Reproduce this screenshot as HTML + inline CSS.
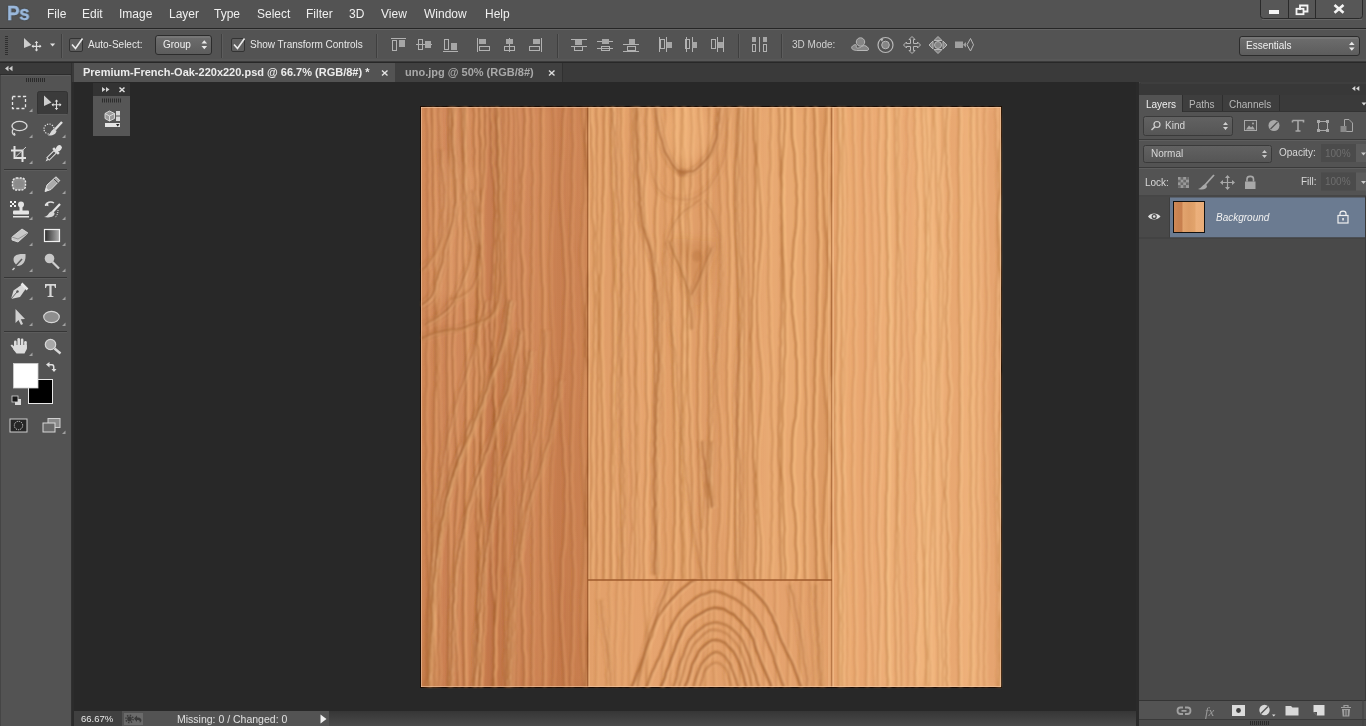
<!DOCTYPE html>
<html><head><meta charset="utf-8">
<style>
*{margin:0;padding:0;box-sizing:border-box}
html,body{width:1366px;height:726px;overflow:hidden;background:#282828;font-family:"Liberation Sans",sans-serif;color:#e6e6e6;-webkit-font-smoothing:antialiased}
.a{will-change:transform}
.a{position:absolute}
#menubar{left:0;top:0;width:1366px;height:28px;background:#535353}
#menubar .m{position:absolute;top:7px;font-size:12px;color:#f0f0f0;line-height:14px}
#optbar{left:0;top:29px;width:1366px;height:33px;background:#535353}
.line{position:absolute;background:#2e2e2e}
#tabbar{left:72px;top:63px;width:1294px;height:19px;background:#3a3a3a}
#toolbar{left:0;top:63px;width:72px;height:663px;background:#535353}
#rpanel{left:1139px;top:82px;width:227px;height:644px;background:#4a4a4a}
.t10{font-size:10px;line-height:12px;position:absolute;color:#e8e8e8}
.t11{font-size:11px;line-height:13px;position:absolute;color:#e8e8e8}
</style></head>
<body>
<!-- MENU BAR -->
<div id="menubar" class="a">
  <div class="a" style="left:7px;top:1px;font-size:21px;font-weight:bold;color:#9ab8dc;line-height:24px;letter-spacing:-0.5px;transform:scaleX(0.9);transform-origin:0 0;-webkit-text-stroke:0.3px #a4c0e2;text-shadow:0 0 1.5px #1a3048">Ps</div>
  <div class="m" style="left:47px">File</div>
  <div class="m" style="left:82px">Edit</div>
  <div class="m" style="left:119px">Image</div>
  <div class="m" style="left:169px">Layer</div>
  <div class="m" style="left:214px">Type</div>
  <div class="m" style="left:257px">Select</div>
  <div class="m" style="left:306px">Filter</div>
  <div class="m" style="left:349px">3D</div>
  <div class="m" style="left:381px">View</div>
  <div class="m" style="left:424px">Window</div>
  <div class="m" style="left:485px">Help</div>
</div>
<div class="line" style="left:0;top:28px;width:1366px;height:1px;background:#262626"></div>
<!-- OPTIONS BAR -->
<div id="optbar" class="a"></div>
<div class="a" style="left:0;top:29px;width:1366px;height:1px;background:#646464"></div><div class="a" style="left:0;top:59px;width:1366px;height:2px;background:#575757"></div>
<!-- options bar content -->
<svg class="a" style="left:0;top:0" width="1366" height="63" viewBox="0 0 1366 63">
 <!-- grip -->
 <g fill="#2f2f2f"><rect x="5" y="36" width="3" height="1"/><rect x="5" y="38" width="3" height="1"/><rect x="5" y="40" width="3" height="1"/><rect x="5" y="42" width="3" height="1"/><rect x="5" y="44" width="3" height="1"/><rect x="5" y="46" width="3" height="1"/><rect x="5" y="48" width="3" height="1"/><rect x="5" y="50" width="3" height="1"/><rect x="5" y="52" width="3" height="1"/><rect x="5" y="54" width="3" height="1"/></g>
 <!-- move tool -->
 <path d="M24 38 L31.5 45 L24 48 Z" fill="#cdcdcd"/>
 <g stroke="#dedede" stroke-width="1.2" fill="none"><path d="M36.5 41.5 V51 M32 46.3 H41"/></g>
 <g fill="#dedede"><path d="M36.5 41 l-1.8 2 h3.6z M36.5 51.5 l-1.8 -2 h3.6z M31.5 46.3 l2 -1.8 v3.6z M41.5 46.3 l-2 -1.8 v3.6z"/></g>
 <path d="M50 43.5 h5.2 l-2.6 3z" fill="#e0e0e0"/>
 <!-- separators -->
 <g fill="#3f3f3f"><rect x="61" y="34" width="1" height="24"/><rect x="221" y="34" width="1" height="24"/><rect x="376" y="34" width="1" height="24"/><rect x="557" y="34" width="1" height="24"/><rect x="738" y="34" width="1" height="24"/><rect x="781" y="34" width="1" height="24"/></g>
 <g fill="#5c5c5c"><rect x="62" y="34" width="1" height="24"/><rect x="222" y="34" width="1" height="24"/><rect x="377" y="34" width="1" height="24"/><rect x="558" y="34" width="1" height="24"/><rect x="739" y="34" width="1" height="24"/><rect x="782" y="34" width="1" height="24"/></g>
 <!-- checkboxes -->
 <rect x="69.5" y="38.5" width="13" height="13" rx="1.5" fill="#5e5e5e" stroke="#333" stroke-width="1"/>
 <path d="M72 44.5 L75.5 48.5 L82.5 38.5" stroke="#ececec" stroke-width="1.6" fill="none"/>
 <rect x="231.5" y="38.5" width="13" height="13" rx="1.5" fill="#5e5e5e" stroke="#333" stroke-width="1"/>
 <path d="M234 44.5 L237.5 48.5 L244.5 38.5" stroke="#ececec" stroke-width="1.6" fill="none"/>
 <!-- group dropdown -->
 <defs>
  <linearGradient id="dd" x1="0" y1="0" x2="0" y2="1"><stop offset="0" stop-color="#6e6e6e"/><stop offset="1" stop-color="#5c5c5c"/></linearGradient>
 </defs>
 <rect x="155.5" y="35.5" width="56" height="19" rx="2.5" fill="url(#dd)" stroke="#2c2c2c"/>
 <rect x="157" y="36.5" width="53" height="1" fill="#808080"/>
 <path d="M201.5 43.5 h5.6 l-2.8 -3.3z M201.5 46 h5.6 l-2.8 3.3z" fill="#e8e8e8"/>


 <!-- window buttons -->
 <path d="M1260.5 0 V15.5 Q1260.5 18.5 1263.5 18.5 H1359.5 Q1362.5 18.5 1362.5 15.5 V0" fill="#575757" stroke="#2a2a2a"/>
 <rect x="1262" y="19" width="100" height="1" fill="#666"/>
 <rect x="1288" y="0" width="1" height="18" fill="#2a2a2a"/>
 <rect x="1315" y="0" width="1" height="18" fill="#2a2a2a"/>
 <rect x="1269" y="10" width="10" height="4" fill="#f4f4f4"/>
 <path d="M1300 10 V5.5 H1307.5 V11.5 H1304" fill="none" stroke="#f4f4f4" stroke-width="1.8"/>
 <rect x="1296.5" y="8.8" width="7" height="5.4" fill="none" stroke="#f4f4f4" stroke-width="1.8"/>
 <path d="M1334.5 5 L1343.5 12.8 M1343.5 5 L1334.5 12.8" stroke="#f4f4f4" stroke-width="2.6"/>
 <!-- align icons -->
 <g stroke="#b2b2b2" stroke-width="1" fill="none">
  <path d="M391 38.5 H406"/><rect x="392.5" y="40.5" width="4" height="10"/>
  <path d="M416 44.5 H432"/><rect x="418.5" y="39.5" width="4" height="10"/>
  <path d="M443 51.5 H458"/><rect x="444.5" y="39.5" width="4" height="10"/>
  <path d="M477.5 38 V52"/><rect x="479.5" y="46.5" width="10" height="4"/>
  <path d="M509.5 38 V52"/><rect x="504.5" y="46.5" width="10" height="4"/>
  <path d="M541.5 38 V52"/><rect x="529.5" y="46.5" width="10" height="4"/>
  <path d="M571 39.5 H587 M571 46.5 H587"/><rect x="574.5" y="46.5" width="8" height="4"/>
  <path d="M597 41.5 H613 M597 48.5 H613"/><rect x="601.5" y="46.5" width="8" height="4"/>
  <path d="M623 44.5 H639 M623 51.5 H639"/><rect x="627.5" y="46.5" width="8" height="4"/>
  <path d="M659.5 37 V52 M666.5 37 V52"/><rect x="660.5" y="39.5" width="4" height="9"/>
  <path d="M686.5 37 V52 M692.5 37 V52"/><rect x="685.5" y="39.5" width="4" height="9"/>
  <path d="M717.5 37 V52 M723.5 37 V52"/><rect x="711.5" y="39.5" width="4" height="9"/>
  <rect x="752.5" y="44.5" width="3" height="7"/><rect x="763.5" y="44.5" width="3" height="7"/><path d="M759.5 37 V52"/>
 </g>
 <g fill="#a6a6a6">
  <rect x="399" y="40" width="6" height="7"/>
  <rect x="425" y="41" width="6" height="7"/>
  <rect x="451" y="43" width="6" height="7"/>
  <rect x="479" y="39" width="7" height="5"/>
  <rect x="506" y="39" width="7" height="5"/>
  <rect x="533" y="39" width="7" height="5"/>
  <rect x="575" y="40" width="7" height="5"/>
  <rect x="602" y="39" width="7" height="5"/>
  <rect x="629" y="39" width="6" height="5"/>
  <rect x="667" y="42" width="5" height="6"/>
  <rect x="692" y="42" width="5" height="6"/>
  <rect x="718" y="42" width="5" height="6"/>
  <rect x="752" y="37" width="4" height="5"/><rect x="763" y="37" width="4" height="5"/>
 </g>
 <!-- 3D icons -->
 <g stroke="#b8b8b8" stroke-width="1" fill="#858585">
  <path d="M855.5 44.5 C850 46 850 50.5 858 50.5 H867 C869 50.5 869.5 48 866 46 C864 45 862 46 860 47.5 C858 48.5 855 48 856.5 46z"/>
  <circle cx="860.5" cy="42" r="4.2"/>
  <circle cx="885.5" cy="45" r="7.5" fill="none" stroke-width="1.2"/>
  <circle cx="885.5" cy="45" r="3.8"/>
  <path d="M912 36.5 L915 39.5 H913.5 V43.5 H917.5 V42 L920.5 45 L917.5 48 V46.5 H913.5 V50.5 H915 L912 53.5 L909 50.5 H910.5 V46.5 H906.5 V48 L903.5 45 L906.5 42 V43.5 H910.5 V39.5 H909z" fill="#555"/>
  <path d="M938 36.5 L942 40.5 H934z M938 53.5 L942 49.5 H934z M929 45 L933 41 V49z M947 45 L943 41 V49z" />
  <circle cx="938" cy="45" r="3.5"/>
  <rect x="955" y="41.5" width="8" height="6.5" stroke="none" fill="#a0a0a0"/>
  <path d="M963 44.8 L966 42 V47.5z" stroke="none" fill="#a0a0a0"/>
  <path d="M970.5 38.5 L967 44.8 L970.5 51 L973.5 44.8z" fill="none"/>
 </g>
 <path d="M880 39 l3.5 -0.5 l-1.5 3.3z" fill="#b8b8b8"/>
 <rect x="1239.5" y="36.5" width="120" height="19" rx="2.5" fill="url(#dd)" stroke="#2c2c2c"/>
 <rect x="1241" y="37.5" width="117" height="1" fill="#808080"/>
 <path d="M1349 45 h5.6 l-2.8 -3.3z M1349 47.5 h5.6 l-2.8 3.3z" fill="#e8e8e8"/>
</svg>
<div class="t10" style="left:88px;top:39px">Auto-Select:</div>
<div class="t10" style="left:163px;top:39px;color:#f0f0f0">Group</div>
<div class="t10" style="left:250px;top:39px">Show Transform Controls</div>
<div class="t10" style="left:792px;top:39px;color:#d0d0d0">3D Mode:</div>
<div class="t10" style="left:1246px;top:40px;color:#f0f0f0">Essentials</div>
<div class="line" style="left:0;top:61px;width:1366px;height:1px;background:#3a3a3a"></div><div class="line" style="left:0;top:62px;width:1366px;height:1px;background:#282828"></div>
<!-- TAB BAR -->
<div id="tabbar" class="a"></div>
<div class="a" style="left:74px;top:63px;width:321px;height:19px;background:#535353"></div>
<div class="a" style="left:395px;top:63px;width:168px;height:19px;background:#404040"></div>
<div class="a" style="left:562px;top:63px;width:1px;height:19px;background:#303030"></div>
<div class="t11" style="left:83px;top:66px;color:#ececec;font-weight:bold">Premium-French-Oak-220x220.psd @ 66.7% (RGB/8#) *</div>
<div class="t11" style="left:405px;top:66px;color:#a8a8a8;font-weight:bold">uno.jpg @ 50% (RGB/8#)</div>
<svg class="a" style="left:0;top:0" width="1366" height="100">
 <path d="M382 70.5 L387.5 75.5 M387.5 70.5 L382 75.5" stroke="#e4e4e4" stroke-width="1.4"/>
 <path d="M549 70.5 L554.5 75.5 M554.5 70.5 L549 75.5" stroke="#dcdcdc" stroke-width="1.4"/>
</svg>
<!-- TOOLBAR -->
<div id="toolbar" class="a"></div>
<svg class="a" style="left:0;top:63px" width="74" height="663" viewBox="0 63 74 663">
 <rect x="0" y="63" width="72" height="12" fill="#3a3a3a"/>
 <rect x="0" y="74" width="72" height="1" fill="#2c2c2c"/>
 <rect x="0" y="75" width="70" height="1" fill="#5e5e5e"/>
 <rect x="71" y="63" width="1" height="663" fill="#303030"/><rect x="72" y="82" width="2" height="644" fill="#2b2b2b"/>
 <rect x="0" y="75" width="1" height="651" fill="#454545"/>
 <path d="M5 68.5 l3.5 -2.8 v5.6z M9 68.5 l3.5 -2.8 v5.6z" fill="#cfcfcf"/>
 <g fill="#2a2a2a"><rect x="26" y="78" width="1" height="4"/><rect x="28" y="78" width="1" height="4"/><rect x="30" y="78" width="1" height="4"/><rect x="32" y="78" width="1" height="4"/><rect x="34" y="78" width="1" height="4"/><rect x="36" y="78" width="1" height="4"/><rect x="38" y="78" width="1" height="4"/><rect x="40" y="78" width="1" height="4"/><rect x="42" y="78" width="1" height="4"/><rect x="44" y="78" width="1" height="4"/></g>
 <!-- separators -->
 <g fill="#363636"><rect x="4" y="169" width="63" height="1"/><rect x="4" y="277" width="63" height="1"/><rect x="4" y="331" width="63" height="1"/></g>
 <g fill="#5c5c5c"><rect x="4" y="170" width="63" height="1"/><rect x="4" y="278" width="63" height="1"/><rect x="4" y="332" width="63" height="1"/></g>
 <!-- selected move -->
 <rect x="37.5" y="91.5" width="30" height="23" rx="2" fill="#3b3b3b" stroke="#333"/>
 <rect x="38" y="114" width="29" height="1" fill="#5a5a5a"/>
 <path d="M44 95.5 L51.5 102.5 L44 106 Z" fill="#cdcdcd"/>
 <g stroke="#dedede" stroke-width="1.1"><path d="M56.5 100 V109.5 M52 104.7 H61"/></g>
 <g fill="#dedede"><path d="M56.5 99.5 l-1.8 2 h3.6z M56.5 110 l-1.8 -2 h3.6z M51.5 104.7 l2 -1.8 v3.6z M61.5 104.7 l-2 -1.8 v3.6z"/></g>
 <!-- corner triangles -->
 <g fill="#a0a0a0">
  <path d="M29 112 h3.5 v-3.5z"/>
  <path d="M29 138 h3.5 v-3.5z M62 138 h3.5 v-3.5z"/>
  <path d="M29 164 h3.5 v-3.5z M62 164 h3.5 v-3.5z"/>
  <path d="M29 194 h3.5 v-3.5z M62 194 h3.5 v-3.5z"/>
  <path d="M29 220 h3.5 v-3.5z M62 220 h3.5 v-3.5z"/>
  <path d="M29 246 h3.5 v-3.5z M62 246 h3.5 v-3.5z"/>
  <path d="M29 272 h3.5 v-3.5z M62 272 h3.5 v-3.5z"/>
  <path d="M29 300 h3.5 v-3.5z M62 300 h3.5 v-3.5z"/>
  <path d="M29 326 h3.5 v-3.5z M62 326 h3.5 v-3.5z"/>
  <path d="M29 356 h3.5 v-3.5z"/>
  <path d="M62 434 h3.5 v-3.5z"/>
 </g>
 <!-- marquee -->
 <rect x="12.5" y="96.5" width="13" height="12" fill="none" stroke="#e6e6e6" stroke-width="1.3" stroke-dasharray="3 2.2"/>
 <!-- lasso -->
 <ellipse cx="19.5" cy="126" rx="7.5" ry="4.6" fill="none" stroke="#d8d8d8" stroke-width="1.4"/>
 <path d="M13.5 129 C11.5 131 12 134 14 135 C15.5 136 15 133 13.5 133" fill="none" stroke="#d8d8d8" stroke-width="1.2"/>
 <!-- quick select -->
 <circle cx="49" cy="129" r="5" fill="none" stroke="#e0e0e0" stroke-width="1.2" stroke-dasharray="1.3 1.3"/>
 <path d="M62 122 L55 129.5" stroke="#e0e0e0" stroke-width="2.4"/>
 <path d="M54.5 129 C50.5 130 51 134 48 135.5 C53 136 56 134 56.5 131z" fill="#d8d8d8"/>
 <!-- crop -->
 <path d="M14.5 146 V158 H26 M11 150.5 H22.5 V162" fill="none" stroke="#e2e2e2" stroke-width="2"/>
 <path d="M16 156.5 L26 147" stroke="#d0d0d0" stroke-width="1"/>
 <!-- eyedropper -->
 <g transform="rotate(45 53 154)">
  <rect x="50.5" y="142.5" width="5" height="6.5" rx="2.5" fill="#e0e0e0"/>
  <rect x="49" y="148.5" width="8" height="2.5" fill="#e0e0e0"/>
  <rect x="51.3" y="151" width="3.4" height="10" fill="#505050" stroke="#e0e0e0" stroke-width="1"/>
  <path d="M52 161.5 L53 164.5 L54 161.5z" fill="#e0e0e0"/>
 </g>
 <!-- spot healing -->
 <rect x="12.5" y="178" width="13" height="12" rx="4" fill="#909090" stroke="#eaeaea" stroke-width="1.4" stroke-dasharray="2 1.2"/>
 <ellipse cx="19" cy="184" rx="4.5" ry="3.5" fill="#8a8a8a"/>
 <!-- pencil -->
 <path d="M45 191.5 L47 185 L56 176.8 L59.8 180.5 L51 189.5 Z" fill="#aaa" stroke="#e0e0e0" stroke-width="1"/>
 <path d="M45 191.5 L46.2 187.5 L49 190.5z" fill="#e0e0e0"/>
 <path d="M54 179 L57.8 182.6" stroke="#444" stroke-width="1"/>
 <!-- stamp -->
 <circle cx="21" cy="204.5" r="3" fill="#e4e4e4"/>
 <rect x="19.5" y="206" width="3" height="5" fill="#e4e4e4"/>
 <rect x="13" y="210.5" width="16" height="4" rx="1" fill="#e4e4e4"/>
 <rect x="13" y="216" width="16" height="1.5" fill="#e4e4e4"/>
 <g fill="#f0f0f0"><rect x="10" y="201" width="2" height="2"/><rect x="14" y="201" width="2" height="2"/><rect x="12" y="203" width="2" height="2"/><rect x="10" y="205" width="2" height="2"/><rect x="14" y="205" width="2" height="2"/></g>
 <!-- history brush -->
 <path d="M45.5 206 C46 202 51 201 54 203" fill="none" stroke="#e0e0e0" stroke-width="1.4"/>
 <path d="M44.5 205 l3.5 -2.5 l0.5 3.8z" fill="#e0e0e0"/>
 <path d="M60 204 L52.5 212" stroke="#e6e6e6" stroke-width="2.2"/>
 <path d="M52.5 211 C48 212 49 216 44 217 C51 218.5 55 216 54.5 213z" fill="#d8d8d8"/>
 <path d="M58 210 C58 213 57 216 55 217.5" fill="none" stroke="#e0e0e0" stroke-width="1" stroke-dasharray="1 1"/>
 <!-- eraser -->
 <path d="M12 237 L22 229 L28 233 L18 242 L12 240 Z" fill="#c8c8c8" stroke="#e4e4e4" stroke-width="0.8"/>
 <path d="M12 237 L18 239 L28 233" fill="none" stroke="#8a8a8a" stroke-width="0.8"/>
 <!-- gradient -->
 <defs><linearGradient id="gr" x1="0" y1="0" x2="1" y2="0"><stop offset="0" stop-color="#2a2a2a"/><stop offset="1" stop-color="#b0b0b0"/></linearGradient></defs>
 <rect x="44.5" y="229.5" width="15" height="12" fill="url(#gr)" stroke="#f0f0f0" stroke-width="1.2"/>
 <!-- blur -->
 <path d="M14 262 C12 256 16 253.5 25.5 254 C26 260 24 266 17 266 Z" fill="#c8c8c8"/>
 <path d="M12 270 L22 259" stroke="#5a5a5a" stroke-width="1.5"/>
 <path d="M12.5 270 L14.5 268" stroke="#d0d0d0" stroke-width="1.5"/>
 <!-- dodge -->
 <circle cx="49.5" cy="258.5" r="4.8" fill="#c8c8c8"/>
 <path d="M52.5 262 L59 268.5" stroke="#d0d0d0" stroke-width="2.2"/>
 <!-- pen -->
 <path d="M11 299 L13.5 290.5 L22 284.5 L26 288.5 L20 297 Z" fill="#d8d8d8"/>
 <path d="M21.5 283.5 L27.5 289.5" stroke="#e8e8e8" stroke-width="2.5"/>
 <path d="M11 299 L17 292" stroke="#555" stroke-width="0.9"/>
 <circle cx="17.5" cy="291.5" r="1.2" fill="#555"/>
 <!-- T -->
 <path d="M45 284 H56 V288 H55 L54.2 285.8 H51.6 V295.8 L53.5 296.3 V297 H47.5 V296.3 L49.4 295.8 V285.8 H46.8 L46 288 H45 Z" fill="#d8d8d8"/>
 <!-- path select -->
 <path d="M15.5 309 V323 L18.5 320 L21 325 L23 324 L20.8 319.2 L25 319 Z" fill="#d0d0d0"/>
 <!-- ellipse -->
 <ellipse cx="51.5" cy="317" rx="7.8" ry="5.6" fill="#8e8e8e" stroke="#d8d8d8" stroke-width="1.1"/>
 <!-- hand -->
 <g fill="#dcdcdc">
  <rect x="14" y="340.5" width="2.6" height="8" rx="1.3"/>
  <rect x="17.4" y="338" width="2.6" height="9" rx="1.3"/>
  <rect x="20.8" y="338.5" width="2.6" height="9" rx="1.3"/>
  <rect x="24.2" y="341" width="2.6" height="8" rx="1.3"/>
  <path d="M14 345 H26.8 V349 L24.5 353.5 H16.5 L13 349z"/>
  <path d="M10.5 345.5 L12 344.5 L16.5 349 L15 351z"/>
 </g>
 <!-- zoom -->
 <circle cx="50.5" cy="344.5" r="5.2" fill="#a8a8a8" stroke="#d8d8d8" stroke-width="1.2"/>
 <path d="M54.5 348.5 L60.5 353.5" stroke="#d8d8d8" stroke-width="2.4"/>
 <!-- colors -->
 <path d="M46 364.5 L49.5 362 L49.5 364 L52 364 C54 364 54.5 365.5 54.5 367.5 L54.5 369 L56.5 369 L54 372 L51.5 369 L53 369 L53 367.5 C53 366 52.5 365.5 51.5 365.5 L49.5 365.5 L49.5 367.5 Z" fill="#e0e0e0"/>
 <rect x="28.5" y="379.5" width="24" height="24" fill="#000" stroke="#e8e8e8" stroke-width="1"/>
 <rect x="13.5" y="363.5" width="24.5" height="24.5" fill="#fff" stroke="#d0d0d0" stroke-width="0.8"/>
 <rect x="15" y="399" width="6" height="6" fill="#d8d8d8"/>
 <rect x="12" y="396" width="6" height="6" fill="#1a1a1a" stroke="#d8d8d8" stroke-width="0.8"/>
 <!-- quick mask -->
 <rect x="10" y="419" width="17" height="13" fill="#262626" stroke="#d0d0d0" stroke-width="1"/>
 <circle cx="18.5" cy="425.5" r="4.2" fill="none" stroke="#e8e8e8" stroke-width="1" stroke-dasharray="1 1"/>
 <!-- screen mode -->
 <rect x="48" y="418.5" width="12" height="9" fill="#8a8a8a" stroke="#d0d0d0" stroke-width="1"/>
 <rect x="43" y="423" width="12" height="9" fill="#6a6a6a" stroke="#d8d8d8" stroke-width="1"/>
</svg>
<!-- RIGHT PANEL -->
<div id="rpanel" class="a"></div>
<svg class="a" style="left:1136px;top:82px" width="230" height="644" viewBox="1136 82 230 644">
 <defs>
  <linearGradient id="dd2" x1="0" y1="0" x2="0" y2="1"><stop offset="0" stop-color="#626262"/><stop offset="1" stop-color="#555555"/></linearGradient>
  <linearGradient id="wd" x1="0" y1="0" x2="1" y2="0"><stop offset="0" stop-color="#d08a58"/><stop offset="0.15" stop-color="#c98250"/><stop offset="0.28" stop-color="#c77f4e"/><stop offset="0.3" stop-color="#e2a46e"/><stop offset="0.5" stop-color="#dc9c66"/><stop offset="0.7" stop-color="#e2a46c"/><stop offset="0.72" stop-color="#ecb07c"/><stop offset="1" stop-color="#e8ac78"/></linearGradient>
 </defs>
 <rect x="1136" y="82" width="3" height="644" fill="#2a2a2a"/>
 <path d="M1139 726 V85 Q1139 82 1142 82 H1366 V726z" fill="#383838"/>
 <rect x="1141" y="82.5" width="225" height="1" fill="#454545"/>
 <path d="M1352 88.5 l3.3 -2.6 v5.2z M1356 88.5 l3.3 -2.6 v5.2z" fill="#d8d8d8"/>
 <rect x="1139" y="95" width="227" height="17" fill="#3a3a3a"/>
 <rect x="1139" y="95" width="43" height="17" fill="#535353"/>
 <rect x="1182" y="95" width="1" height="17" fill="#2e2e2e"/>
 <rect x="1183" y="95" width="39" height="17" fill="#3e3e3e"/>
 <rect x="1222" y="95" width="1" height="17" fill="#2e2e2e"/>
 <rect x="1223" y="95" width="56" height="17" fill="#3e3e3e"/>
 <rect x="1279" y="95" width="1" height="17" fill="#2e2e2e"/>
 <path d="M1361.5 102.5 h5 l-2.5 3z" fill="#d8d8d8"/>
 <rect x="1139" y="112" width="227" height="88" fill="#535353"/>
 <rect x="1183" y="111" width="183" height="1" fill="#333"/>
 <!-- separators -->
 <g fill="#3a3a3a"><rect x="1139" y="139" width="227" height="1"/><rect x="1139" y="167" width="227" height="1"/><rect x="1139" y="195.5" width="227" height="1"/></g>
 <g fill="#5e5e5e"><rect x="1139" y="140" width="227" height="1"/><rect x="1139" y="168" width="227" height="1"/></g>
 <!-- kind dropdown -->
 <rect x="1143.5" y="116.5" width="89" height="19" rx="2" fill="url(#dd2)" stroke="#3a3a3a"/>
 <circle cx="1157" cy="124.5" r="3" fill="none" stroke="#cfcfcf" stroke-width="1.2"/>
 <path d="M1154.8 126.8 L1151.5 130" stroke="#cfcfcf" stroke-width="1.5"/>
 <path d="M1223 125 h5 l-2.5 -3z M1223 127 h5 l-2.5 3z" fill="#d0d0d0"/>
 <!-- filter icons -->
 <rect x="1244.5" y="120.5" width="12" height="10" fill="none" stroke="#a8a8a8"/>
 <path d="M1246 129.5 L1249 125.5 L1251 127.5 L1252.5 126 L1255 129.5z" fill="#a8a8a8"/><circle cx="1253" cy="123.5" r="1" fill="#a8a8a8"/>
 <circle cx="1274" cy="125.5" r="5.5" fill="#a8a8a8"/>
 <path d="M1270.5 129 L1277.5 122" stroke="#535353" stroke-width="1.2"/>
 <path d="M1292.5 120.5 H1303.5 V122.5 M1292.5 120.5 V122.5 M1298 120.5 V131 M1295.5 131 H1300.5" stroke="#a8a8a8" stroke-width="1.6" fill="none"/>
 <rect x="1318.5" y="121.5" width="9" height="9" fill="none" stroke="#a8a8a8"/>
 <g fill="#a8a8a8"><rect x="1317" y="120" width="3" height="3"/><rect x="1326" y="120" width="3" height="3"/><rect x="1317" y="129" width="3" height="3"/><rect x="1326" y="129" width="3" height="3"/></g>
 <path d="M1344.5 119.5 H1349 L1352.5 123 V131.5 H1344.5z" fill="none" stroke="#a8a8a8"/>
 <rect x="1340.5" y="126" width="6" height="6" fill="#8a8a8a"/>
 <!-- normal dropdown -->
 <rect x="1143.5" y="145.5" width="128" height="17" rx="2" fill="url(#dd2)" stroke="#3a3a3a"/>
 <path d="M1262 153 h5 l-2.5 -3z M1262 155 h5 l-2.5 3z" fill="#c8c8c8"/>
 <!-- opacity field -->
 <rect x="1321" y="144" width="35" height="18" fill="#4b4b4b"/>
 <rect x="1356" y="144" width="10" height="18" fill="#5c5c5c"/>
 <path d="M1361 152.5 h5 l-2.5 3z" fill="#c8c8c8"/>
 <rect x="1321" y="172.5" width="35" height="18" fill="#4b4b4b"/>
 <rect x="1356" y="172.5" width="10" height="18" fill="#5c5c5c"/>
 <path d="M1361 181 h5 l-2.5 3z" fill="#c8c8c8"/>
 <!-- lock icons -->
 <g fill="#9a9a9a"><rect x="1178" y="177" width="11" height="11"/></g>
 <g fill="#6a6a6a"><rect x="1180.5" y="177" width="2.7" height="2.7"/><rect x="1186" y="177" width="2.7" height="2.7"/><rect x="1178" y="179.7" width="2.7" height="2.7"/><rect x="1183.3" y="179.7" width="2.7" height="2.7"/><rect x="1180.5" y="182.4" width="2.7" height="2.7"/><rect x="1186" y="182.4" width="2.7" height="2.7"/><rect x="1178" y="185.1" width="2.7" height="2.7"/><rect x="1183.3" y="185.1" width="2.7" height="2.7"/></g>
 <path d="M1214 175 L1205 185" stroke="#a8a8a8" stroke-width="1.8"/>
 <path d="M1205.5 184 C1202 185 1202 188 1198 189 C1203 190.5 1207 189 1207 186z" fill="#a8a8a8"/>
 <path d="M1227.5 176 V189 M1221 182.5 H1234" stroke="#a8a8a8" stroke-width="1.2"/>
 <path d="M1227.5 175 l-2.5 3 h5z M1227.5 190 l-2.5 -3 h5z M1220 182.5 l3 -2.5 v5z M1235 182.5 l-3 -2.5 v5z" fill="#a8a8a8"/>
 <rect x="1245" y="181.5" width="10.5" height="7.5" fill="#a8a8a8"/>
 <path d="M1247 181.5 V179 C1247 175.5 1253.5 175.5 1253.5 179 V181.5" fill="none" stroke="#a8a8a8" stroke-width="1.6"/>
 <!-- layer list -->
 <rect x="1139" y="196.5" width="227" height="504" fill="#494949"/>
 <rect x="1170" y="197.5" width="195" height="40" fill="#6b7b91"/>
 <rect x="1139" y="237.5" width="227" height="1" fill="#3e3e3e"/>
 <rect x="1169" y="197.5" width="1" height="40" fill="#3e3e3e"/>
 <rect x="1365" y="196" width="1" height="504" fill="#3a3a3a"/>
 <!-- eye -->
 <path d="M1148 216.5 C1150.5 212.5 1157.5 212.5 1160.5 216.5 C1157.5 220.5 1150.5 220.5 1148 216.5z" fill="#e0e0e0"/>
 <circle cx="1154.2" cy="216.5" r="2.6" fill="#494949"/>
 <circle cx="1154.2" cy="216.5" r="1.3" fill="#e0e0e0"/>
 <!-- thumbnail -->
 <rect x="1173.5" y="201.5" width="31" height="31" fill="url(#wd)" stroke="#111" stroke-width="1"/>
 <!-- lock -->
 <rect x="1338" y="215.5" width="10" height="7.5" fill="none" stroke="#f0f0f0" stroke-width="1.2"/>
 <path d="M1340 215.5 V213.5 C1340 210.3 1346 210.3 1346 213.5 V215.5" fill="none" stroke="#f0f0f0" stroke-width="1.2"/>
 <rect x="1342.3" y="218" width="1.5" height="2.5" fill="#f0f0f0"/>
 <!-- footer -->
 <rect x="1139" y="700" width="227" height="1" fill="#343434"/>
 <rect x="1139" y="701" width="227" height="18" fill="#535353"/>
 <rect x="1139" y="719" width="227" height="1" fill="#3a3a3a"/>
 <rect x="1139" y="720" width="227" height="6" fill="#4a4a4a"/>
 <g fill="#2a2a2a"><rect x="1250" y="721" width="1" height="4"/><rect x="1252" y="721" width="1" height="4"/><rect x="1254" y="721" width="1" height="4"/><rect x="1256" y="721" width="1" height="4"/><rect x="1258" y="721" width="1" height="4"/><rect x="1260" y="721" width="1" height="4"/><rect x="1262" y="721" width="1" height="4"/><rect x="1264" y="721" width="1" height="4"/><rect x="1266" y="721" width="1" height="4"/><rect x="1268" y="721" width="1" height="4"/></g>
 <rect x="1362.5" y="700" width="1" height="26" fill="#404040"/>
 <!-- footer icons -->
 <path d="M1183 707.5 H1180.5 C1176.5 707.5 1176.5 714 1180.5 714 H1183 M1185 707.5 H1187.5 C1191.5 707.5 1191.5 714 1187.5 714 H1185 M1181.5 710.8 H1186.5" fill="none" stroke="#a0a0a0" stroke-width="1.8"/>
 <text x="1205" y="716" font-family="Liberation Serif" font-style="italic" font-size="13" fill="#9a9a9a">fx</text>
 <rect x="1232" y="705" width="13" height="11" fill="#dcdcdc"/>
 <circle cx="1238.5" cy="710.5" r="2.4" fill="#404040"/>
 <circle cx="1264.5" cy="710" r="5.2" fill="#d8d8d8"/>
 <path d="M1261 713.5 L1268 706.5" stroke="#535353" stroke-width="1.4"/>
 <path d="M1272 714.5 h3.5 l-1.75 2z" fill="#e0e0e0"/>
 <path d="M1285.5 706 H1291 L1292.5 707.5 H1298.5 V715.5 H1285.5z" fill="#d8d8d8"/>
 <path d="M1313.5 705 H1324.5 V715.5 H1317 L1313.5 712z" fill="#dcdcdc"/>
 <path d="M1313.5 712 H1317 V715.5z" fill="#535353"/>
 <path d="M1341 707.5 H1351 M1344 707.5 V705.5 H1348 V707.5" fill="none" stroke="#a0a0a0" stroke-width="1.2"/>
 <path d="M1342 709 H1350 L1349.3 716.5 H1342.7z" fill="#a0a0a0"/>
 <path d="M1344.5 710 V715.5 M1346 710 V715.5 M1347.5 710 V715.5" stroke="#535353" stroke-width="0.8"/>
</svg>
<div class="t10" style="left:1146px;top:99px;color:#f0f0f0;font-size:10px">Layers</div>
<div class="t10" style="left:1189px;top:99px;color:#b8b8b8;font-size:10px">Paths</div>
<div class="t10" style="left:1229px;top:99px;color:#b8b8b8;font-size:10px">Channels</div>
<div class="t10" style="left:1165px;top:120px;color:#d8d8d8">Kind</div>
<div class="t10" style="left:1151px;top:148px;color:#d8d8d8">Normal</div>
<div class="t10" style="left:1279px;top:147px;color:#d8d8d8">Opacity:</div>
<div class="t10" style="left:1325px;top:148px;color:#6e6e6e">100%</div>
<div class="t10" style="left:1145px;top:177px;color:#d8d8d8">Lock:</div>
<div class="t10" style="left:1301px;top:176px;color:#d8d8d8">Fill:</div>
<div class="t10" style="left:1325px;top:176px;color:#6e6e6e">100%</div>
<div class="t10" style="left:1216px;top:212px;color:#f0f0f0;font-style:italic">Background</div>
<!-- floating mini panel -->
<svg class="a" style="left:90px;top:80px" width="45" height="60" viewBox="90 80 45 60">
 <rect x="93" y="83" width="37" height="13" fill="#333"/>
 <rect x="93" y="96" width="37" height="40" fill="#565656"/>
 <path d="M102 87 l3.5 2.5 l-3.5 2.5z M106 87 l3.5 2.5 l-3.5 2.5z" fill="#d0d0d0"/>
 <path d="M119.5 87.5 L124.5 92 M124.5 87.5 L119.5 92" stroke="#e0e0e0" stroke-width="1.5"/>
 <g fill="#2c2c2c"><rect x="102" y="98.5" width="1" height="4"/><rect x="104" y="98.5" width="1" height="4"/><rect x="106" y="98.5" width="1" height="4"/><rect x="108" y="98.5" width="1" height="4"/><rect x="110" y="98.5" width="1" height="4"/><rect x="112" y="98.5" width="1" height="4"/><rect x="114" y="98.5" width="1" height="4"/><rect x="116" y="98.5" width="1" height="4"/><rect x="118" y="98.5" width="1" height="4"/><rect x="120" y="98.5" width="1" height="4"/></g>
 <path d="M105 113.5 L109.5 111 L114.5 113.5 V118.5 L109.5 121 L105 118.5z" fill="#9a9a9a" stroke="#e0e0e0" stroke-width="0.9"/>
 <path d="M105 113.5 L109.5 116 L114.5 113.5 M109.5 116 V121" fill="none" stroke="#e0e0e0" stroke-width="0.9"/>
 <rect x="116" y="111" width="4" height="4.5" fill="#d8d8d8"/>
 <rect x="116" y="116.5" width="4" height="4.5" fill="#d8d8d8"/>
 <rect x="105" y="123" width="15" height="4" fill="#e4e4e4"/>
 <path d="M116 124 h3.5 l-1.75 2.5z" fill="#222"/>
</svg>
<!-- status bar -->
<div class="a" style="left:74px;top:711px;width:1062px;height:15px;background:linear-gradient(#363636,#4a4a4a)"></div>
<div class="a" style="left:74px;top:711px;width:48px;height:15px;background:#404040"></div>
<div class="a" style="left:122px;top:711px;width:207px;height:15px;background:#535353"></div>
<div class="t10" style="left:81px;top:713px;font-size:9.5px;color:#e8e8e8">66.67%</div>
<div class="t10" style="left:177px;top:713px;font-size:10.5px;color:#e0e0e0">Missing: 0 / Changed: 0</div>
<svg class="a" style="left:120px;top:711px" width="210" height="15" viewBox="120 711 210 15">
 <rect x="124" y="713" width="19" height="12" fill="#6a6a6a"/>
 <circle cx="129.5" cy="719" r="3.6" fill="none" stroke="#3a3a3a" stroke-width="1.6" stroke-dasharray="1.4 1.4"/>
 <circle cx="129.5" cy="719" r="2.4" fill="#3a3a3a"/>
 <path d="M134 718.5 L137 715.5 V717.5 H138 C140.5 717.5 141.5 719 141.5 721 L139.8 723 C140 721 139.5 720 138 720 H137 V722z" fill="#3a3a3a"/>
 <path d="M320.5 714.5 L326.5 719 L320.5 723.5z" fill="#f0f0f0"/>
</svg>
<!-- CANVAS IMAGE -->
<svg class="a" style="left:413px;top:99px" width="596" height="596" viewBox="413 99 596 596">
<defs>
<filter id="b2" x="-20%" y="-5%" width="140%" height="110%"><feGaussianBlur stdDeviation="5"/></filter>
<filter id="sh" x="-10%" y="-10%" width="120%" height="120%"><feGaussianBlur stdDeviation="2"/></filter>
<filter id="gb" x="-2%" y="-2%" width="104%" height="104%"><feGaussianBlur stdDeviation="0.85"/></filter>
<filter id="fb" x="-5%" y="-5%" width="110%" height="110%"><feGaussianBlur stdDeviation="1.2"/></filter>
<linearGradient id="gA" x1="0" y1="0" x2="1" y2="0"><stop offset="0.00" stop-color="#cd8455"/><stop offset="0.20" stop-color="#d1895d"/><stop offset="0.40" stop-color="#cc8255"/><stop offset="0.60" stop-color="#cd8459"/><stop offset="0.80" stop-color="#cb8254"/><stop offset="1.00" stop-color="#c98052"/></linearGradient>
<linearGradient id="gB" x1="0" y1="0" x2="1" y2="0"><stop offset="0.00" stop-color="#e2a06a"/><stop offset="0.25" stop-color="#e6a46f"/><stop offset="0.50" stop-color="#e2a06b"/><stop offset="0.75" stop-color="#e5a36f"/><stop offset="1.00" stop-color="#e19f69"/></linearGradient>
<linearGradient id="gC" x1="0" y1="0" x2="1" y2="0"><stop offset="0.00" stop-color="#e8a46e"/><stop offset="0.33" stop-color="#eaa873"/><stop offset="0.67" stop-color="#edad78"/><stop offset="1.00" stop-color="#e9a874"/></linearGradient>
<clipPath id="cA"><rect x="421" y="107" width="167" height="580"/></clipPath>
<clipPath id="cB"><rect x="588" y="107" width="244" height="473"/></clipPath>
<clipPath id="cB2"><rect x="588" y="580" width="244" height="107"/></clipPath>
<clipPath id="cC"><rect x="832" y="107" width="169" height="580"/></clipPath>
</defs>
<rect x="420" y="106" width="582" height="582" fill="#1c0c02"/>
<rect x="421" y="107" width="167" height="580" fill="url(#gA)"/>
<rect x="588" y="107" width="244" height="580" fill="url(#gB)"/>
<rect x="832" y="107" width="169" height="580" fill="url(#gC)"/>
<linearGradient id="vA" x1="0" y1="0" x2="0" y2="1"><stop offset="0" stop-color="#a05020" stop-opacity="0"/><stop offset="1" stop-color="#a04818" stop-opacity="0.18"/></linearGradient>
<rect x="421" y="107" width="167" height="580" fill="url(#vA)"/>
<g clip-path="url(#cA)"><g filter="url(#b2)">
<rect x="417" y="107" width="9" height="580" fill="#eaa870" opacity="0.33"/>
<rect x="431" y="107" width="10" height="580" fill="#eaa870" opacity="0.19"/>
<rect x="446" y="107" width="11" height="580" fill="#eaa870" opacity="0.17"/>
<rect x="460" y="107" width="6" height="580" fill="#eaa870" opacity="0.29"/>
<rect x="468" y="107" width="14" height="580" fill="#eaa870" opacity="0.28"/>
<rect x="488" y="107" width="6" height="580" fill="#a05a26" opacity="0.11"/>
<rect x="496" y="107" width="7" height="580" fill="#a05a26" opacity="0.06"/>
<rect x="508" y="107" width="9" height="580" fill="#eaa870" opacity="0.25"/>
<rect x="523" y="107" width="9" height="580" fill="#eaa870" opacity="0.24"/>
<rect x="536" y="107" width="14" height="580" fill="#eaa870" opacity="0.32"/>
<rect x="568" y="107" width="6" height="580" fill="#eaa870" opacity="0.23"/>
<rect x="580" y="107" width="8" height="580" fill="#eaa870" opacity="0.32"/>
</g></g>
<g clip-path="url(#cB)"><g filter="url(#b2)">
<rect x="584" y="107" width="7" height="580" fill="#f6c080" opacity="0.24"/>
<rect x="599" y="107" width="9" height="580" fill="#b87238" opacity="0.12"/>
<rect x="614" y="107" width="7" height="580" fill="#b87238" opacity="0.09"/>
<rect x="629" y="107" width="12" height="580" fill="#b87238" opacity="0.08"/>
<rect x="644" y="107" width="6" height="580" fill="#f6c080" opacity="0.19"/>
<rect x="655" y="107" width="9" height="580" fill="#b87238" opacity="0.13"/>
<rect x="666" y="107" width="11" height="580" fill="#b87238" opacity="0.10"/>
<rect x="680" y="107" width="7" height="580" fill="#f6c080" opacity="0.31"/>
<rect x="692" y="107" width="13" height="580" fill="#b87238" opacity="0.10"/>
<rect x="712" y="107" width="11" height="580" fill="#b87238" opacity="0.16"/>
<rect x="726" y="107" width="7" height="580" fill="#f6c080" opacity="0.22"/>
<rect x="737" y="107" width="6" height="580" fill="#b87238" opacity="0.12"/>
<rect x="746" y="107" width="10" height="580" fill="#b87238" opacity="0.11"/>
<rect x="764" y="107" width="9" height="580" fill="#f6c080" opacity="0.32"/>
<rect x="777" y="107" width="6" height="580" fill="#f6c080" opacity="0.31"/>
<rect x="787" y="107" width="7" height="580" fill="#f6c080" opacity="0.34"/>
<rect x="796" y="107" width="14" height="580" fill="#f6c080" opacity="0.27"/>
<rect x="815" y="107" width="6" height="580" fill="#b87238" opacity="0.16"/>
<rect x="824" y="107" width="11" height="580" fill="#b87238" opacity="0.14"/>
</g></g>
<g clip-path="url(#cC)"><g filter="url(#b2)">
<rect x="828" y="107" width="8" height="580" fill="#c07e44" opacity="0.13"/>
<rect x="838" y="107" width="7" height="580" fill="#f8c88a" opacity="0.32"/>
<rect x="851" y="107" width="8" height="580" fill="#f8c88a" opacity="0.19"/>
<rect x="860" y="107" width="7" height="580" fill="#c07e44" opacity="0.07"/>
<rect x="871" y="107" width="8" height="580" fill="#f8c88a" opacity="0.18"/>
<rect x="883" y="107" width="13" height="580" fill="#f8c88a" opacity="0.28"/>
<rect x="903" y="107" width="10" height="580" fill="#c07e44" opacity="0.06"/>
<rect x="915" y="107" width="13" height="580" fill="#f8c88a" opacity="0.34"/>
<rect x="930" y="107" width="11" height="580" fill="#f8c88a" opacity="0.30"/>
<rect x="945" y="107" width="14" height="580" fill="#c07e44" opacity="0.11"/>
<rect x="965" y="107" width="13" height="580" fill="#f8c88a" opacity="0.29"/>
<rect x="985" y="107" width="13" height="580" fill="#c07e44" opacity="0.13"/>
</g></g>
<g filter="url(#gb)" fill="none">
<g clip-path="url(#cA)">
<g stroke="#9e5a28" stroke-width="2.0" opacity="0.47"><path id="g1" d="M426.0 97l0.3 6l0.2 6l-0.6 6l0.6 6l0.9 6l0.3 6l0.0 6l-0.4 6l0.4 6l0.0 6l-0.1 6l0.6 6l-0.8 6l0.6 6l-0.7 6l0.5 6l0.1 6l-0.3 6l0.6 6l0.0 6l0.2 6l0.6 6l-0.7 6l-0.7 6l0.1 6l0.6 6l-0.4 6l-0.3 6l0.9 6l0.1 6l-0.3 6l0.4 6l-0.7 6l0.1 6l-0.7 6l-0.1 6l0.5 6l0.3 6l0.0 6l-0.8 6l-0.2 6l-0.5 6l-0.6 6l0.2 6l0.5 6l0.2 6l-0.1 6l0.2 6l-0.9 6l-0.6 6l0.1 6l-0.3 6l-0.2 6l0.2 6l0.4 6l-0.0 6l-0.3 6l0.7 6l0.6 6l-0.5 6l-0.8 6l-0.4 6l1.1 6l-0.6 6l0.7 6l0.2 6l-0.2 6l0.7 6l-0.7 6l-0.1 6l0.5 6l-0.3 6l1.1 6l-0.3 6l-0.2 6l-0.2 6l0.8 6l0.2 6l0.4 6l0.3 6l0.4 6l0.5 6l-0.1 6l-0.8 6l0.0 6l-0.4 6l-0.4 6l0.5 6l0.6 6l-0.5 6l-0.1 6l0.0 6l0.5 6l-0.0 6l0.1 6l0.2 6l-0.5 6l0.3 6l0.3 6l-1.1 6l0.6 6"/></g>
<use href="#g1" x="2" stroke="#f0b078" stroke-width="2.6" opacity="0.33"/>
<g stroke="#9e5a28" stroke-width="2.2" opacity="0.66"><path id="g2" d="M432.2 97l-0.4 8l0.3 8l0.2 8l-0.0 8l0.1 8l-0.4 8l0.5 8l0.4 8l0.3 8l-0.2 8l0.2 8l-0.2 8l0.6 8l0.3 8l-0.2 8l-0.3 8l0.3 8l0.4 8l0.5 8l0.1 8l-0.3 8l0.7 8l-0.3 8l0.6 8l-0.3 8l0.1 8l0.5 8l-0.4 8l-0.2 8l0.3 8l0.3 8l0.2 8l-0.1 8l0.2 8l-0.4 8l0.1 8l-0.9 8l-0.4 8l0.0 8l-0.3 8l0.2 8l-0.1 8l-0.3 8l0.1 8l-0.3 8l-0.5 8l-0.3 8l0.2 8l0.1 8l-0.7 8l0.2 8l0.2 8l-0.4 8l-0.2 8l-0.4 8l0.1 8l0.0 8l0.2 8l-0.4 8l0.8 8l-0.0 8l-0.0 8l0.5 8l0.1 8l0.1 8l0.3 8l-0.3 8l0.4 8l0.2 8l0.7 8l0.4 8l-0.3 8l0.1 8l-0.2 8l0.3 8l0.6 8"/></g>
<use href="#g2" x="2" stroke="#f0b078" stroke-width="2.8" opacity="0.46"/>
<g stroke="#9e5a28" stroke-width="1.5" opacity="0.46"><path id="g3" d="M439.9 97l-1.0 6l-0.3 6l-0.3 6l0.3 6l0.9 6l-0.3 6l0.3 6l0.2 6l0.2 6l0.6 6l-0.1 6l0.1 6l0.0 6l0.3 6l-1.2 6l0.3 6l0.4 6l-0.1 6l-0.2 6l0.4 6l-0.4 6l-0.7 6l-0.4 6l0.3 6l0.1 6l-0.7 6l0.8 6l-0.1 6l-0.5 6l-0.6 6l0.3 6l0.6 6l-0.8 6l0.4 6l-0.7 6l-0.5 6l0.9 6l-0.7 6l-0.4 6l0.2 6l0.2 6l0.9 6l-0.2 6l0.2 6l-0.7 6l0.3 6l0.5 6l-0.8 6l0.4 6l-0.1 6l0.7 6l-0.3 6l0.4 6l0.2 6l-0.3 6l0.9 6l0.2 6l0.1 6l-0.4 6l-0.8 6l0.7 6l0.2 6l0.6 6l-0.3 6l-0.6 6l-0.4 6l-0.1 6l-0.1 6l0.2 6l0.7 6l0.2 6l-0.6 6l0.5 6l-0.7 6l-0.3 6l0.2 6l0.1 6l-0.1 6l-0.3 6l0.1 6l0.4 6l-0.8 6l-0.2 6l0.2 6l-0.0 6l-0.1 6l0.8 6l-0.1 6l-0.9 6l0.6 6l-0.5 6l-0.6 6l0.8 6l0.4 6l0.3 6l0.2 6l-0.5 6l-0.8 6l0.2 6l-0.3 6l0.5 6"/></g>
<use href="#g3" x="2" stroke="#f0b078" stroke-width="2.0" opacity="0.32"/>
<g stroke="#9e5a28" stroke-width="2.2" opacity="0.64"><path id="g4" d="M448.9 97l0.2 8l0.1 8l-0.2 8l0.2 8l-0.4 8l0.0 8l0.1 8l-0.3 8l0.1 8l0.2 8l0.1 8l-0.3 8l0.4 8l-0.1 8l-0.3 8l0.0 8l-0.1 8l-0.1 8l-0.2 8l0.3 8l-0.2 8l-0.1 8l-0.0 8l0.1 8l-0.7 8l0.0 8l0.1 8l-0.3 8l-0.1 8l-0.3 8l-0.1 8l0.1 8l-0.2 8l0.0 8l0.5 8l-0.0 8l-0.0 8l0.3 8l-0.1 8l0.3 8l-0.1 8l0.1 8l-0.4 8l0.2 8l0.3 8l-0.3 8l0.5 8l-0.3 8l0.2 8l-0.1 8l0.2 8l0.2 8l-0.2 8l0.6 8l-0.1 8l0.1 8l0.1 8l-0.1 8l-0.1 8l0.2 8l0.0 8l-0.2 8l0.2 8l-0.2 8l-0.3 8l-0.0 8l-0.2 8l-0.0 8l0.4 8l-0.1 8l0.3 8l-0.0 8l-0.6 8l0.4 8l0.1 8l-0.6 8"/></g>
<use href="#g4" x="2" stroke="#f0b078" stroke-width="2.9" opacity="0.45"/>
<g stroke="#9e5a28" stroke-width="1.7" opacity="0.71"><path id="g5" d="M454.4 97l-1.0 8l-0.1 8l-0.9 8l-0.0 8l-0.3 8l0.8 8l-0.0 8l-0.0 8l0.5 8l0.3 8l0.7 8l0.9 8l0.7 8l0.7 8l0.2 8l0.6 8l0.5 8l-0.5 8l-0.1 8l-0.4 8l0.1 8l-0.2 8l-0.6 8l-0.3 8l-0.1 8l-1.0 8l-0.4 8l-0.3 8l-0.4 8l-0.9 8l-0.4 8l-0.3 8l0.7 8l-0.0 8l0.3 8l-0.1 8l0.7 8l0.6 8l-0.1 8l0.5 8l0.3 8l0.4 8l0.6 8l0.5 8l0.9 8l0.6 8l-0.6 8l-0.3 8l0.5 8l-0.5 8l-0.7 8l-0.6 8l-0.4 8l-0.9 8l0.1 8l-0.2 8l-0.7 8l-0.1 8l-0.1 8l-0.1 8l-0.4 8l0.3 8l-0.1 8l-0.1 8l0.2 8l1.2 8l0.6 8l0.2 8l0.9 8l0.8 8l-0.2 8l0.6 8l0.3 8l0.0 8l-0.2 8l0.0 8"/></g>
<use href="#g5" x="2" stroke="#f0b078" stroke-width="2.2" opacity="0.50"/>
<g stroke="#9e5a28" stroke-width="2.1" opacity="0.89"><path id="g6" d="M465.1 97l-0.5 8l-0.2 8l0.1 8l-0.1 8l-0.4 8l-0.3 8l-0.1 8l0.1 8l-0.2 8l-0.3 8l0.2 8l-0.0 8l0.2 8l0.1 8l0.0 8l-0.2 8l0.1 8l-0.2 8l-0.0 8l0.1 8l0.4 8l0.3 8l-0.2 8l0.1 8l0.1 8l0.2 8l0.2 8l0.2 8l0.1 8l0.3 8l0.4 8l0.1 8l0.3 8l0.0 8l-0.2 8l0.3 8l0.2 8l-0.2 8l-0.3 8l0.1 8l0.1 8l0.0 8l0.2 8l-0.1 8l-0.0 8l-0.5 8l-0.1 8l0.0 8l-0.5 8l-0.3 8l0.1 8l0.1 8l-0.5 8l-0.0 8l-0.4 8l0.1 8l-0.1 8l-0.3 8l-0.2 8l0.2 8l-0.1 8l0.1 8l-0.2 8l-0.1 8l0.3 8l0.0 8l-0.1 8l0.0 8l0.2 8l0.2 8l0.3 8l-0.1 8l0.3 8l0.1 8l0.3 8l0.2 8"/></g>
<use href="#g6" x="2" stroke="#f0b078" stroke-width="2.8" opacity="0.62"/>
<g stroke="#9e5a28" stroke-width="1.6" opacity="0.78"><path id="g7" d="M473.6 97l-0.4 6l0.6 6l0.7 6l-0.4 6l-0.4 6l-0.1 6l0.3 6l0.1 6l1.0 6l-0.6 6l0.1 6l-0.1 6l0.8 6l0.7 6l-0.3 6l-0.2 6l0.5 6l0.5 6l0.8 6l-0.7 6l-0.2 6l0.1 6l0.1 6l0.1 6l0.7 6l0.2 6l-0.4 6l-0.3 6l-0.1 6l-0.2 6l0.6 6l-0.4 6l0.0 6l0.3 6l-0.4 6l-0.6 6l0.4 6l0.1 6l-0.8 6l-0.2 6l0.3 6l-0.6 6l-0.7 6l-0.7 6l0.8 6l0.1 6l-0.5 6l-0.1 6l-0.1 6l-0.4 6l0.7 6l-0.1 6l-0.6 6l-0.5 6l0.4 6l0.1 6l0.7 6l0.3 6l0.1 6l-0.4 6l-0.1 6l0.3 6l0.2 6l1.0 6l0.1 6l0.3 6l0.7 6l-0.5 6l0.2 6l-0.3 6l0.7 6l-0.6 6l0.8 6l0.5 6l0.2 6l-0.8 6l-0.2 6l0.5 6l-0.6 6l0.2 6l0.0 6l0.6 6l-0.3 6l0.1 6l-0.7 6l0.2 6l-0.5 6l0.3 6l-1.0 6l0.3 6l-0.8 6l-0.0 6l-0.1 6l-0.7 6l0.5 6l-0.5 6l-0.3 6l-0.5 6l-0.0 6l0.2 6l0.4 6"/></g>
<use href="#g7" x="2" stroke="#f0b078" stroke-width="2.1" opacity="0.54"/>
<g stroke="#9e5a28" stroke-width="2.1" opacity="0.73"><path id="g8" d="M478.4 97l0.4 6l0.8 6l-0.3 6l0.5 6l0.1 6l-0.6 6l1.3 6l0.4 6l-0.7 6l0.3 6l-0.3 6l-0.0 6l0.2 6l-0.3 6l-0.1 6l-0.0 6l0.4 6l-0.5 6l-0.4 6l0.6 6l-0.4 6l0.7 6l-0.4 6l-0.0 6l-0.7 6l0.3 6l-1.1 6l-0.5 6l-0.4 6l0.7 6l0.3 6l-0.7 6l-0.0 6l0.6 6l-0.1 6l-0.8 6l-0.2 6l-0.2 6l-0.1 6l0.4 6l-0.3 6l1.3 6l-0.1 6l0.2 6l0.4 6l0.5 6l0.4 6l-0.4 6l-0.2 6l0.1 6l-0.5 6l0.4 6l0.8 6l0.9 6l0.2 6l-0.1 6l-0.1 6l-0.9 6l0.0 6l0.0 6l0.5 6l-0.6 6l0.1 6l0.2 6l0.5 6l0.2 6l-0.3 6l-0.9 6l0.4 6l0.3 6l-0.5 6l-0.6 6l-0.2 6l-0.7 6l0.5 6l0.6 6l-0.5 6l-0.0 6l0.1 6l-1.0 6l0.6 6l-0.2 6l-0.8 6l-0.6 6l-0.0 6l0.5 6l0.5 6l-0.3 6l0.8 6l-0.4 6l0.0 6l-0.4 6l1.2 6l-0.6 6l1.0 6l0.0 6l0.1 6l0.1 6l-0.3 6l0.9 6l0.7 6"/></g>
<use href="#g8" x="2" stroke="#f0b078" stroke-width="2.7" opacity="0.51"/>
<g stroke="#9e5a28" stroke-width="1.4" opacity="0.83"><path id="g9" d="M484.7 97l-0.3 6l0.5 6l0.6 6l-0.3 6l-0.3 6l0.3 6l0.3 6l0.1 6l-1.4 6l0.1 6l0.0 6l-0.1 6l-0.7 6l-0.5 6l-0.2 6l-1.2 6l-0.3 6l-0.8 6l0.2 6l-0.6 6l0.1 6l-0.1 6l-0.3 6l0.0 6l1.1 6l-0.7 6l0.9 6l0.5 6l0.5 6l-0.2 6l0.2 6l-0.3 6l0.4 6l1.2 6l0.8 6l0.0 6l-0.1 6l-0.1 6l0.9 6l-0.1 6l0.6 6l0.0 6l0.2 6l-1.0 6l-0.6 6l0.8 6l-0.6 6l-0.2 6l-0.4 6l-1.0 6l0.7 6l-0.8 6l-0.1 6l-0.5 6l-0.5 6l-0.5 6l0.3 6l0.2 6l0.0 6l-1.0 6l0.4 6l-0.7 6l0.6 6l0.5 6l-0.4 6l-0.6 6l1.0 6l0.1 6l0.4 6l0.8 6l0.5 6l0.6 6l0.1 6l0.4 6l-0.4 6l0.2 6l0.2 6l-0.4 6l0.6 6l0.0 6l-0.4 6l-0.3 6l0.5 6l-0.4 6l0.8 6l-0.2 6l-0.4 6l-0.6 6l0.2 6l-1.1 6l-0.5 6l-0.0 6l-0.2 6l-0.1 6l-0.8 6l0.3 6l-0.7 6l-0.3 6l0.0 6l-0.2 6l-0.1 6"/></g>
<use href="#g9" x="2" stroke="#f0b078" stroke-width="1.8" opacity="0.58"/>
<g stroke="#9e5a28" stroke-width="1.5" opacity="0.84"><path id="g10" d="M491.0 97l-0.7 6l-0.2 6l-0.5 6l0.8 6l0.7 6l-0.7 6l0.4 6l-0.3 6l1.1 6l-0.5 6l0.0 6l1.1 6l0.2 6l1.1 6l0.7 6l0.3 6l-0.6 6l0.6 6l0.7 6l-0.3 6l-0.7 6l-0.2 6l-0.1 6l0.4 6l-0.7 6l-0.5 6l-0.4 6l0.2 6l0.1 6l-0.8 6l-0.2 6l0.1 6l-0.6 6l-0.9 6l-0.5 6l0.6 6l-0.1 6l-0.6 6l0.3 6l-0.6 6l1.1 6l-0.1 6l0.2 6l0.3 6l-0.4 6l0.8 6l0.2 6l0.2 6l1.1 6l-0.3 6l0.3 6l1.0 6l-0.2 6l0.0 6l0.4 6l-0.3 6l0.8 6l0.5 6l-1.3 6l-0.2 6l0.2 6l-0.6 6l0.3 6l-0.7 6l-1.0 6l-0.2 6l-0.1 6l-0.6 6l-0.0 6l0.1 6l-0.4 6l-0.3 6l0.4 6l-0.0 6l-0.2 6l0.6 6l-0.7 6l0.7 6l-0.4 6l0.7 6l-0.0 6l0.5 6l0.9 6l0.7 6l0.5 6l-0.4 6l0.3 6l-0.1 6l0.5 6l0.2 6l-0.6 6l0.5 6l0.3 6l-0.2 6l0.2 6l-1.1 6l-0.8 6l-0.8 6l0.1 6l-0.2 6l-0.3 6"/></g>
<use href="#g10" x="2" stroke="#f0b078" stroke-width="1.9" opacity="0.59"/>
<g stroke="#9e5a28" stroke-width="1.5" opacity="0.88"><path id="g11" d="M494.2 97l0.4 6l0.7 6l0.6 6l0.3 6l0.4 6l0.3 6l-0.0 6l0.3 6l0.1 6l-0.0 6l-0.1 6l0.3 6l0.4 6l0.2 6l-0.0 6l-0.2 6l0.1 6l0.3 6l0.1 6l0.3 6l-0.9 6l0.2 6l-0.2 6l-0.7 6l0.2 6l-0.3 6l0.3 6l-1.1 6l-0.2 6l-0.1 6l-0.7 6l0.0 6l-0.2 6l0.3 6l0.1 6l-0.4 6l-0.3 6l0.1 6l-0.4 6l-0.6 6l-0.6 6l0.5 6l-0.2 6l-0.5 6l-0.1 6l0.1 6l0.8 6l0.5 6l-0.5 6l-0.2 6l0.5 6l0.8 6l0.2 6l0.1 6l0.6 6l0.4 6l0.4 6l-0.5 6l0.6 6l0.5 6l-0.4 6l0.1 6l-0.2 6l0.4 6l0.1 6l0.7 6l0.4 6l-0.1 6l-0.1 6l0.2 6l0.3 6l-0.2 6l-0.1 6l0.0 6l-0.6 6l-0.0 6l-0.0 6l-0.3 6l-0.7 6l-0.2 6l0.5 6l-0.2 6l-0.4 6l-0.1 6l-0.4 6l-0.3 6l-0.2 6l-0.7 6l-0.6 6l-0.5 6l0.5 6l0.2 6l-0.7 6l-0.3 6l0.5 6l-0.6 6l0.7 6l0.2 6l-0.3 6l0.4 6l-0.3 6"/></g>
<use href="#g11" x="2" stroke="#f0b078" stroke-width="1.9" opacity="0.62"/>
<g stroke="#9e5a28" stroke-width="1.9" opacity="0.53"><path id="g12" d="M504.7 97l-0.7 6l-0.1 6l0.0 6l0.1 6l-0.5 6l0.3 6l-0.4 6l0.3 6l0.0 6l-0.6 6l-0.3 6l-0.1 6l0.4 6l-0.2 6l-0.1 6l0.5 6l-0.5 6l-0.1 6l0.0 6l-0.1 6l-0.2 6l-0.1 6l0.7 6l0.3 6l0.5 6l0.5 6l-0.4 6l0.2 6l0.5 6l-0.5 6l0.3 6l0.2 6l0.5 6l0.2 6l-0.5 6l0.2 6l-0.4 6l0.2 6l0.1 6l-0.3 6l0.2 6l0.1 6l0.2 6l-0.1 6l-0.2 6l0.2 6l0.1 6l-0.3 6l0.4 6l-0.3 6l-0.4 6l0.0 6l0.1 6l-0.3 6l0.2 6l0.2 6l-0.1 6l0.0 6l-0.8 6l-0.1 6l-0.1 6l-0.4 6l0.1 6l-0.4 6l0.2 6l0.2 6l-0.1 6l-0.2 6l-0.2 6l-0.4 6l0.2 6l0.7 6l-0.0 6l-0.3 6l0.3 6l-0.3 6l0.2 6l0.3 6l0.6 6l-0.3 6l0.1 6l0.5 6l0.1 6l-0.0 6l0.0 6l-0.1 6l-0.0 6l-0.1 6l0.6 6l0.4 6l-0.3 6l0.5 6l-0.7 6l-0.2 6l0.3 6l-0.0 6l0.1 6l0.7 6l-0.5 6l-0.2 6l-0.1 6"/></g>
<use href="#g12" x="2" stroke="#f0b078" stroke-width="2.5" opacity="0.37"/>
<g stroke="#9e5a28" stroke-width="2.2" opacity="0.51"><path id="g13" d="M508.8 97l-0.4 8l0.4 8l0.2 8l-0.2 8l-0.1 8l-0.6 8l-0.6 8l-0.5 8l0.2 8l-0.5 8l-0.3 8l-0.5 8l-0.3 8l-0.3 8l-0.1 8l0.2 8l0.2 8l-0.3 8l-0.0 8l0.0 8l0.4 8l0.1 8l0.3 8l0.1 8l0.5 8l0.6 8l0.3 8l0.4 8l0.4 8l0.2 8l0.2 8l-0.3 8l0.3 8l-0.1 8l0.1 8l-0.5 8l0.1 8l-0.2 8l-0.2 8l-0.3 8l-0.3 8l0.0 8l-0.2 8l-0.6 8l-0.1 8l-0.4 8l-0.1 8l-0.5 8l0.2 8l-0.5 8l0.1 8l-0.3 8l0.6 8l0.1 8l-0.3 8l0.5 8l-0.0 8l0.1 8l0.2 8l0.6 8l0.2 8l0.5 8l0.7 8l0.0 8l0.3 8l0.3 8l0.3 8l-0.4 8l-0.2 8l-0.2 8l0.2 8l-0.3 8l-0.0 8l-0.6 8l-0.4 8l0.3 8"/></g>
<use href="#g13" x="2" stroke="#f0b078" stroke-width="2.8" opacity="0.35"/>
<g stroke="#9e5a28" stroke-width="1.3" opacity="0.57"><path id="g14" d="M513.9 97l-0.4 6l-0.2 6l0.3 6l0.6 6l0.1 6l-0.3 6l0.4 6l-0.1 6l-0.3 6l0.3 6l0.2 6l-0.4 6l-0.1 6l0.5 6l-0.2 6l0.2 6l-0.2 6l0.2 6l0.0 6l-0.5 6l-0.6 6l0.4 6l-0.5 6l-0.0 6l-0.4 6l-0.1 6l-0.2 6l-0.4 6l-0.2 6l0.2 6l0.0 6l-0.5 6l-0.4 6l0.5 6l0.1 6l-0.7 6l-0.0 6l-0.3 6l0.5 6l0.4 6l-0.4 6l-0.6 6l0.0 6l0.2 6l0.1 6l-0.3 6l0.3 6l0.4 6l-0.3 6l-0.2 6l0.1 6l0.0 6l0.6 6l0.2 6l0.5 6l-0.6 6l0.6 6l0.5 6l-0.1 6l0.2 6l-0.2 6l-0.3 6l0.5 6l-0.2 6l0.4 6l0.7 6l-0.4 6l0.1 6l0.5 6l-0.2 6l-0.1 6l0.7 6l-0.1 6l-0.2 6l0.1 6l0.2 6l0.2 6l0.1 6l0.2 6l-0.4 6l0.1 6l-0.4 6l0.2 6l-0.2 6l-0.8 6l-0.3 6l-0.0 6l0.3 6l-0.1 6l-0.4 6l0.5 6l-0.2 6l-0.4 6l-0.4 6l-0.5 6l0.3 6l0.0 6l-0.4 6l-0.3 6l-0.2 6l-0.3 6"/></g>
<use href="#g14" x="2" stroke="#f0b078" stroke-width="1.7" opacity="0.40"/>
<g stroke="#9e5a28" stroke-width="1.3" opacity="0.50"><path id="g15" d="M516.3 97l0.5 6l0.2 6l0.2 6l0.4 6l0.7 6l-0.3 6l0.6 6l-0.2 6l0.3 6l-0.4 6l0.6 6l-0.3 6l0.3 6l-0.6 6l-0.2 6l0.1 6l-0.6 6l-0.3 6l0.1 6l0.2 6l-0.6 6l-0.5 6l-0.2 6l0.5 6l-0.6 6l0.1 6l-0.2 6l0.2 6l-0.3 6l0.3 6l0.5 6l0.3 6l0.1 6l0.0 6l0.2 6l-0.2 6l0.7 6l0.3 6l0.0 6l0.3 6l-0.1 6l-0.0 6l-0.2 6l0.3 6l0.1 6l-0.1 6l-0.6 6l0.2 6l-0.2 6l-0.1 6l-0.2 6l0.1 6l-0.8 6l-0.2 6l0.3 6l-0.2 6l-0.5 6l0.1 6l0.3 6l-0.4 6l0.3 6l-0.5 6l0.7 6l-0.1 6l-0.2 6l0.6 6l0.2 6l0.5 6l0.3 6l0.2 6l-0.1 6l0.5 6l-0.6 6l0.5 6l0.1 6l-0.4 6l0.3 6l-0.2 6l-0.1 6l0.2 6l-0.7 6l-0.4 6l0.1 6l-0.6 6l0.0 6l0.1 6l-0.3 6l-0.5 6l0.2 6l0.1 6l-0.0 6l-0.2 6l0.2 6l0.1 6l-0.5 6l0.0 6l-0.2 6l-0.0 6l0.4 6l0.8 6l0.5 6"/></g>
<use href="#g15" x="2" stroke="#f0b078" stroke-width="1.7" opacity="0.35"/>
<g stroke="#9e5a28" stroke-width="2.2" opacity="0.68"><path id="g16" d="M525.1 97l-0.3 6l-0.6 6l0.6 6l0.2 6l-0.6 6l0.2 6l-0.9 6l0.1 6l-0.3 6l-0.0 6l0.0 6l-0.5 6l-1.0 6l-0.6 6l0.5 6l-0.7 6l0.2 6l-0.7 6l-0.0 6l-0.0 6l0.1 6l0.5 6l-0.2 6l-0.5 6l-0.1 6l0.2 6l1.0 6l0.8 6l0.4 6l-0.6 6l-0.4 6l0.2 6l0.4 6l0.7 6l-0.0 6l-0.1 6l0.0 6l0.1 6l0.8 6l0.3 6l0.4 6l-0.3 6l-0.1 6l1.2 6l0.7 6l-0.9 6l0.4 6l-0.4 6l0.2 6l-0.4 6l0.1 6l-0.3 6l0.4 6l-0.3 6l-0.3 6l0.1 6l0.1 6l-0.7 6l0.1 6l-1.0 6l0.3 6l-0.9 6l-0.0 6l0.2 6l0.4 6l-0.6 6l-0.6 6l-0.7 6l0.7 6l0.1 6l-1.0 6l0.3 6l-0.2 6l-0.5 6l0.6 6l-0.9 6l-0.4 6l0.7 6l0.5 6l0.8 6l0.2 6l0.3 6l-0.1 6l-0.7 6l-0.4 6l0.1 6l0.7 6l0.4 6l0.6 6l-0.5 6l0.1 6l-0.1 6l1.2 6l0.2 6l-0.1 6l0.5 6l-0.3 6l-0.2 6l1.4 6l0.2 6l0.4 6"/></g>
<use href="#g16" x="2" stroke="#f0b078" stroke-width="2.9" opacity="0.48"/>
<g stroke="#9e5a28" stroke-width="1.2" opacity="0.73"><path id="g17" d="M530.5 97l0.0 6l0.6 6l0.3 6l0.4 6l-0.3 6l0.5 6l0.2 6l0.2 6l-0.6 6l0.1 6l-0.4 6l0.8 6l0.5 6l0.2 6l-0.8 6l-0.1 6l0.2 6l0.1 6l-0.4 6l0.5 6l-0.3 6l0.0 6l-0.4 6l0.2 6l-0.4 6l-0.3 6l0.3 6l-0.2 6l0.4 6l-0.5 6l-0.1 6l-0.5 6l-0.2 6l0.1 6l0.1 6l-0.1 6l0.3 6l-0.7 6l0.4 6l-0.6 6l0.5 6l-0.3 6l-0.3 6l0.0 6l0.3 6l0.2 6l-0.5 6l-0.7 6l-0.2 6l0.6 6l0.2 6l0.1 6l-0.6 6l0.2 6l-0.4 6l-0.1 6l0.2 6l0.9 6l0.1 6l0.4 6l-0.7 6l0.1 6l-0.2 6l0.2 6l-0.0 6l1.0 6l-0.1 6l0.2 6l0.4 6l0.5 6l0.4 6l-0.2 6l-0.1 6l0.5 6l-0.3 6l-0.2 6l0.4 6l-0.3 6l0.0 6l0.1 6l0.1 6l-0.1 6l0.1 6l0.0 6l-0.4 6l0.6 6l-0.6 6l0.2 6l0.1 6l-0.2 6l-0.3 6l-0.3 6l0.1 6l-0.1 6l0.1 6l-0.3 6l0.4 6l-0.2 6l-0.7 6l0.0 6l0.6 6"/></g>
<use href="#g17" x="2" stroke="#f0b078" stroke-width="1.6" opacity="0.51"/>
<g stroke="#9e5a28" stroke-width="1.7" opacity="0.70"><path id="g18" d="M542.2 97l-0.7 8l-0.3 8l-0.3 8l0.4 8l-0.3 8l0.3 8l-0.5 8l0.1 8l0.2 8l0.3 8l-0.1 8l-0.3 8l-0.4 8l0.3 8l-0.2 8l0.3 8l0.0 8l0.1 8l-0.0 8l0.2 8l0.2 8l0.3 8l0.2 8l0.9 8l0.0 8l-0.0 8l-0.3 8l-0.0 8l0.2 8l0.5 8l0.1 8l0.1 8l-0.4 8l0.0 8l0.2 8l-0.3 8l-0.4 8l0.0 8l0.2 8l-0.1 8l-0.8 8l-0.6 8l0.2 8l-0.5 8l0.3 8l-0.0 8l0.1 8l-0.4 8l0.2 8l-0.1 8l0.1 8l0.2 8l-0.5 8l0.3 8l0.1 8l0.1 8l-0.2 8l0.3 8l0.2 8l-0.3 8l0.7 8l-0.3 8l0.2 8l-0.0 8l0.9 8l-0.3 8l0.0 8l0.2 8l0.6 8l0.4 8l-0.5 8l0.2 8l-0.1 8l-0.2 8l0.2 8l-0.2 8"/></g>
<use href="#g18" x="2" stroke="#f0b078" stroke-width="2.2" opacity="0.49"/>
<g stroke="#9e5a28" stroke-width="1.5" opacity="0.40"><path id="g19" d="M552.4 97l0.5 6l0.3 6l0.1 6l0.2 6l0.1 6l0.3 6l-0.2 6l0.2 6l-0.1 6l-0.3 6l0.0 6l0.0 6l-0.3 6l-0.2 6l-0.5 6l0.2 6l-0.2 6l-0.6 6l-0.5 6l-0.4 6l0.1 6l-0.6 6l-0.4 6l-0.1 6l-0.1 6l-0.2 6l-0.3 6l-0.1 6l0.2 6l0.2 6l0.0 6l-0.1 6l0.6 6l0.0 6l0.0 6l0.4 6l0.3 6l0.3 6l0.6 6l0.1 6l0.2 6l0.2 6l0.2 6l0.7 6l0.4 6l0.2 6l-0.1 6l-0.1 6l-0.0 6l-0.1 6l0.4 6l-0.2 6l-0.2 6l-0.4 6l0.1 6l-0.1 6l-0.3 6l-0.2 6l-0.2 6l-0.8 6l-0.4 6l-0.5 6l0.1 6l-0.2 6l-0.5 6l-0.1 6l-0.3 6l-0.3 6l-0.2 6l0.4 6l0.3 6l-0.3 6l0.1 6l0.4 6l0.1 6l-0.1 6l0.1 6l0.6 6l0.1 6l0.6 6l0.4 6l0.3 6l0.3 6l0.1 6l0.2 6l0.4 6l0.2 6l0.1 6l0.0 6l0.2 6l-0.1 6l-0.2 6l0.1 6l-0.3 6l0.0 6l0.0 6l-0.6 6l-0.2 6l-0.2 6l-0.1 6l-0.3 6"/></g>
<use href="#g19" x="2" stroke="#f0b078" stroke-width="2.0" opacity="0.28"/>
<g stroke="#9e5a28" stroke-width="1.5" opacity="0.66"><path id="g20" d="M564.2 97l0.0 8l-0.9 8l-0.8 8l-0.2 8l0.0 8l-0.5 8l-0.3 8l-0.4 8l-0.5 8l-0.7 8l0.1 8l-0.2 8l0.4 8l0.3 8l0.6 8l0.3 8l0.9 8l0.5 8l0.6 8l0.1 8l0.6 8l0.5 8l0.7 8l-0.1 8l-0.6 8l-0.3 8l-0.4 8l-0.1 8l-0.1 8l-0.3 8l-0.5 8l-0.5 8l-0.6 8l-0.4 8l-1.2 8l-0.2 8l0.1 8l0.2 8l0.2 8l0.3 8l0.8 8l-0.1 8l0.7 8l1.1 8l-0.1 8l0.3 8l1.0 8l0.7 8l-0.5 8l-0.3 8l0.5 8l-0.1 8l-0.4 8l-0.4 8l-0.3 8l-0.4 8l-1.3 8l-0.9 8l0.0 8l0.0 8l-0.2 8l-0.6 8l-0.3 8l-0.0 8l-0.2 8l0.9 8l0.2 8l0.7 8l0.6 8l0.4 8l0.8 8l0.4 8l0.2 8l0.8 8l-0.2 8l-0.2 8"/></g>
<use href="#g20" x="2" stroke="#f0b078" stroke-width="1.9" opacity="0.46"/>
<g stroke="#9e5a28" stroke-width="1.9" opacity="0.50"><path id="g21" d="M572.3 97l0.3 8l-0.4 8l0.2 8l-0.2 8l0.5 8l0.5 8l-0.5 8l-0.5 8l-0.1 8l-0.4 8l0.4 8l-0.1 8l-0.3 8l-0.8 8l0.1 8l-0.6 8l0.3 8l-0.6 8l-0.3 8l0.8 8l0.7 8l-0.3 8l0.3 8l-0.3 8l0.9 8l-0.4 8l0.8 8l0.1 8l0.6 8l-0.7 8l0.9 8l0.4 8l-0.9 8l-0.5 8l0.9 8l-0.3 8l-0.6 8l-0.5 8l-0.3 8l0.1 8l-0.4 8l-0.2 8l-0.4 8l-0.3 8l0.6 8l-0.3 8l-0.5 8l0.0 8l0.6 8l-0.2 8l0.8 8l0.6 8l0.1 8l-0.2 8l0.5 8l0.6 8l-0.6 8l0.7 8l0.6 8l-0.0 8l-0.1 8l-0.8 8l-0.2 8l0.1 8l-0.4 8l-0.0 8l0.2 8l-0.5 8l0.1 8l-0.8 8l-0.7 8l0.3 8l-0.7 8l0.8 8l0.5 8l0.2 8"/></g>
<use href="#g21" x="2" stroke="#f0b078" stroke-width="2.5" opacity="0.35"/>
<g stroke="#9e5a28" stroke-width="1.6" opacity="0.42"><path id="g22" d="M582.2 97l0.1 8l-0.2 8l0.3 8l0.7 8l0.8 8l0.3 8l0.3 8l0.1 8l-0.3 8l-0.6 8l-0.1 8l0.2 8l-0.0 8l-1.3 8l-0.5 8l0.2 8l-0.5 8l-0.9 8l-0.5 8l0.1 8l0.0 8l1.1 8l0.1 8l0.8 8l0.4 8l0.6 8l0.0 8l0.7 8l-0.2 8l-0.1 8l0.4 8l0.1 8l-0.3 8l-0.2 8l-0.7 8l0.1 8l-0.7 8l-0.4 8l-0.4 8l-0.1 8l-0.3 8l-0.4 8l-0.0 8l0.5 8l0.3 8l0.6 8l-0.1 8l0.5 8l0.3 8l0.7 8l0.1 8l0.5 8l0.2 8l-0.6 8l0.1 8l-0.5 8l0.2 8l-0.1 8l-0.5 8l-0.5 8l-0.5 8l-0.7 8l-0.4 8l0.2 8l-0.2 8l-0.5 8l0.2 8l0.6 8l-0.1 8l0.3 8l0.3 8l0.9 8l0.1 8l0.4 8l0.0 8l0.6 8"/></g>
<use href="#g22" x="2" stroke="#f0b078" stroke-width="2.1" opacity="0.30"/>
<g stroke="#9e5a28" stroke-width="1.7" opacity="0.78"><path id="g23" d="M587.5 97l-0.4 6l-0.5 6l0.1 6l-0.4 6l-0.5 6l-0.4 6l-0.2 6l0.5 6l0.3 6l0.4 6l0.3 6l0.1 6l0.3 6l0.3 6l0.4 6l0.4 6l-0.2 6l0.7 6l-0.0 6l0.0 6l0.7 6l-0.5 6l0.2 6l-0.1 6l0.3 6l-0.2 6l0.1 6l-0.1 6l-0.5 6l-1.0 6l-0.1 6l-0.8 6l0.3 6l-0.1 6l-0.7 6l-0.5 6l0.2 6l0.2 6l0.4 6l-0.1 6l-0.4 6l0.5 6l-0.2 6l0.9 6l0.5 6l0.5 6l0.5 6l0.1 6l0.6 6l0.1 6l-0.0 6l-0.1 6l-0.1 6l-0.4 6l-0.2 6l0.4 6l-0.5 6l-0.0 6l-0.1 6l-0.3 6l-0.5 6l-0.6 6l-0.5 6l-0.5 6l0.1 6l0.0 6l0.2 6l-0.5 6l0.4 6l0.3 6l-0.3 6l0.6 6l0.2 6l0.6 6l0.3 6l-0.1 6l0.1 6l0.4 6l0.3 6l-0.2 6l0.8 6l0.1 6l-0.0 6l0.2 6l-0.4 6l-0.4 6l0.0 6l-0.5 6l-0.3 6l-0.6 6l-0.5 6l-0.1 6l-0.1 6l0.2 6l-0.3 6l-0.4 6l-0.3 6l-0.3 6l0.1 6l0.6 6l-0.4 6"/></g>
<use href="#g23" x="2" stroke="#f0b078" stroke-width="2.2" opacity="0.54"/>
</g>
<g clip-path="url(#cB)">
<g stroke="#b06c34" stroke-width="1.4" opacity="0.72"><path id="g24" d="M590.4 97l-0.6 8l-0.1 8l0.2 8l1.4 8l0.2 8l-0.4 8l1.1 8l0.4 8l-0.0 8l0.6 8l-0.6 8l0.6 8l-0.7 8l-0.3 8l-0.0 8l1.4 8l0.8 8l-0.7 8l-0.2 8l0.9 8l-0.1 8l-0.8 8l0.3 8l0.4 8l0.5 8l0.4 8l-0.6 8l0.1 8l-0.8 8l0.4 8l-0.8 8l0.5 8l-0.5 8l-0.9 8l0.2 8l-0.5 8l0.1 8l-0.3 8l-0.3 8l0.3 8l0.0 8l-0.2 8l-0.8 8l-0.4 8l0.5 8l0.6 8l0.1 8l0.1 8l-0.4 8l-0.7 8l-0.8 8l0.8 8l0.3 8l-0.0 8l0.3 8l0.4 8l-0.7 8l-0.5 8l-0.1 8l0.3 8l0.2 8l0.9 8"/></g>
<use href="#g24" x="2" stroke="#fcc488" stroke-width="1.9" opacity="0.50"/>
<g stroke="#b06c34" stroke-width="2.0" opacity="0.57"><path id="g25" d="M596.5 97l0.5 6l-0.3 6l-0.2 6l0.5 6l0.4 6l-0.0 6l-0.5 6l0.1 6l0.1 6l-0.5 6l0.3 6l0.4 6l-0.1 6l-0.0 6l-0.3 6l0.2 6l-0.4 6l0.5 6l-0.0 6l0.6 6l-0.5 6l0.2 6l-0.7 6l0.2 6l0.5 6l-0.3 6l0.3 6l-0.3 6l0.1 6l0.8 6l-0.6 6l0.6 6l-0.7 6l0.3 6l0.4 6l0.2 6l-0.4 6l0.0 6l0.2 6l0.1 6l0.0 6l-0.2 6l-0.5 6l0.3 6l-0.0 6l-0.1 6l0.5 6l-0.8 6l0.4 6l-0.4 6l0.3 6l0.4 6l-0.7 6l0.0 6l-0.1 6l-0.1 6l-0.5 6l0.3 6l0.5 6l-0.1 6l-0.5 6l0.4 6l-0.3 6l-0.5 6l0.3 6l-0.0 6l0.1 6l0.6 6l-0.2 6l0.3 6l-0.6 6l0.2 6l-0.7 6l-0.1 6l0.4 6l0.2 6l0.3 6l-0.4 6l-0.3 6l-0.0 6l0.2 6l-0.5 6l0.2 6"/></g>
<use href="#g25" x="2" stroke="#fcc488" stroke-width="2.6" opacity="0.40"/>
<g stroke="#b06c34" stroke-width="2.2" opacity="0.72"><path id="g26" d="M605.5 97l-0.1 6l-0.6 6l-0.2 6l-0.3 6l-0.2 6l0.3 6l0.2 6l-0.3 6l-0.2 6l0.1 6l-0.3 6l-0.3 6l0.2 6l0.1 6l-0.1 6l-0.3 6l-0.8 6l0.3 6l-0.1 6l-0.6 6l-0.2 6l-0.3 6l-0.1 6l-0.1 6l-0.4 6l0.0 6l0.2 6l-0.1 6l-0.0 6l-0.7 6l-0.4 6l0.1 6l0.2 6l-0.2 6l0.0 6l-0.2 6l0.3 6l-0.2 6l0.4 6l-0.1 6l-0.4 6l0.2 6l0.3 6l0.4 6l0.2 6l0.2 6l0.1 6l0.4 6l-0.5 6l0.1 6l0.4 6l0.4 6l0.1 6l0.2 6l0.1 6l0.5 6l0.0 6l0.5 6l0.1 6l0.1 6l-0.3 6l0.0 6l0.5 6l-0.2 6l0.6 6l-0.2 6l-0.2 6l0.1 6l-0.1 6l0.7 6l-0.2 6l-0.3 6l0.1 6l0.1 6l-0.2 6l-0.1 6l-0.1 6l-0.2 6l0.3 6l-0.3 6l0.1 6l0.2 6l0.0 6"/></g>
<use href="#g26" x="2" stroke="#fcc488" stroke-width="2.8" opacity="0.51"/>
<g stroke="#b06c34" stroke-width="2.3" opacity="0.78"><path id="g27" d="M611.4 97l-0.0 8l0.3 8l0.2 8l-0.5 8l-0.4 8l0.1 8l-0.2 8l0.7 8l0.2 8l-0.1 8l-0.1 8l0.7 8l0.4 8l0.1 8l0.1 8l0.2 8l-0.1 8l-0.1 8l0.2 8l0.4 8l0.4 8l0.1 8l0.0 8l-0.7 8l-0.2 8l0.6 8l-0.1 8l-0.1 8l-0.3 8l0.4 8l-0.2 8l0.3 8l-0.8 8l0.4 8l-0.8 8l-0.3 8l0.0 8l0.2 8l-0.5 8l0.1 8l0.4 8l-0.4 8l0.1 8l-0.2 8l-0.1 8l-0.5 8l0.0 8l0.4 8l-0.0 8l-0.5 8l-0.0 8l0.1 8l-0.1 8l0.2 8l0.2 8l-0.5 8l0.0 8l0.5 8l-0.1 8l-0.1 8l0.7 8l-0.0 8"/></g>
<use href="#g27" x="2" stroke="#fcc488" stroke-width="3.1" opacity="0.55"/>
<g stroke="#b06c34" stroke-width="1.2" opacity="0.56"><path id="g28" d="M617.2 97l-0.2 6l1.0 6l-0.5 6l-0.2 6l-0.4 6l-0.1 6l0.3 6l0.7 6l-0.7 6l-0.6 6l0.4 6l-0.9 6l0.1 6l-0.1 6l0.3 6l-1.2 6l0.0 6l-0.3 6l0.4 6l-0.6 6l0.3 6l-0.6 6l0.2 6l0.8 6l-0.5 6l-0.1 6l1.0 6l0.3 6l-0.6 6l0.0 6l0.2 6l0.3 6l1.1 6l0.5 6l0.7 6l0.0 6l0.0 6l-0.3 6l0.4 6l-0.1 6l-0.7 6l0.2 6l-0.1 6l0.1 6l-0.8 6l-0.5 6l1.0 6l-0.5 6l-0.5 6l-0.6 6l0.2 6l0.4 6l-1.0 6l-0.1 6l-0.2 6l0.2 6l-0.2 6l-0.6 6l-0.4 6l0.6 6l-0.6 6l0.9 6l-0.6 6l0.0 6l0.5 6l0.9 6l0.3 6l0.5 6l0.4 6l0.3 6l-0.7 6l0.9 6l-0.4 6l-0.1 6l-0.1 6l-0.0 6l1.2 6l-0.1 6l-0.5 6l-0.3 6l0.9 6l0.0 6l0.4 6"/></g>
<use href="#g28" x="2" stroke="#fcc488" stroke-width="1.6" opacity="0.39"/>
<g stroke="#b06c34" stroke-width="2.0" opacity="0.63"><path id="g29" d="M621.6 97l-0.0 6l-0.4 6l-0.2 6l0.2 6l-0.4 6l-0.2 6l0.2 6l0.7 6l-0.3 6l0.5 6l0.5 6l-0.1 6l0.3 6l0.3 6l-0.2 6l-0.1 6l0.3 6l-0.2 6l0.4 6l0.3 6l0.1 6l-0.6 6l0.1 6l-0.4 6l-0.2 6l-0.3 6l0.4 6l-0.6 6l0.1 6l-0.1 6l-0.1 6l0.1 6l-0.4 6l-0.3 6l0.1 6l-0.3 6l0.1 6l0.3 6l0.2 6l0.2 6l0.1 6l0.4 6l0.3 6l-0.3 6l-0.1 6l0.2 6l-0.0 6l0.3 6l-0.1 6l0.1 6l-0.3 6l0.4 6l0.0 6l-0.2 6l-0.1 6l-0.4 6l0.3 6l-0.4 6l-0.4 6l0.0 6l0.1 6l-0.7 6l-0.3 6l0.1 6l0.1 6l0.0 6l-0.2 6l0.1 6l0.3 6l0.3 6l-0.3 6l0.4 6l0.3 6l0.2 6l0.1 6l0.1 6l-0.2 6l0.2 6l0.5 6l0.2 6l-0.4 6l-0.0 6l-0.0 6"/></g>
<use href="#g29" x="2" stroke="#fcc488" stroke-width="2.6" opacity="0.44"/>
<g stroke="#b06c34" stroke-width="1.4" opacity="0.57"><path id="g30" d="M631.0 97l0.6 6l-0.9 6l0.2 6l0.2 6l-0.3 6l0.4 6l-0.2 6l-0.6 6l0.3 6l-0.3 6l0.2 6l-0.3 6l0.6 6l-0.9 6l0.3 6l-0.5 6l-0.3 6l0.1 6l0.5 6l0.4 6l-1.1 6l0.2 6l-0.2 6l-0.7 6l0.3 6l0.5 6l-0.8 6l-0.1 6l-0.5 6l0.6 6l0.5 6l0.3 6l-0.6 6l0.1 6l-0.3 6l-0.1 6l0.3 6l-0.4 6l-0.4 6l0.5 6l-0.0 6l0.2 6l-0.1 6l0.2 6l-0.2 6l0.3 6l0.8 6l-0.1 6l0.6 6l-0.7 6l-0.1 6l0.4 6l-0.0 6l0.0 6l-0.3 6l1.1 6l0.3 6l-0.7 6l0.4 6l-0.0 6l-0.2 6l0.9 6l0.1 6l0.4 6l-0.2 6l0.2 6l-1.0 6l-0.5 6l0.6 6l0.0 6l0.6 6l0.2 6l-0.6 6l-0.2 6l-0.8 6l-0.3 6l-0.3 6l0.5 6l-0.3 6l-0.1 6l0.6 6l0.0 6l-1.0 6"/></g>
<use href="#g30" x="2" stroke="#fcc488" stroke-width="1.8" opacity="0.40"/>
<g stroke="#b06c34" stroke-width="1.6" opacity="0.69"><path id="g31" d="M634.5 97l0.1 6l-0.7 6l0.8 6l-0.4 6l-0.5 6l0.6 6l-0.6 6l-0.4 6l0.6 6l0.0 6l0.6 6l0.1 6l-0.7 6l-0.6 6l0.4 6l0.0 6l-0.2 6l0.7 6l-0.6 6l0.3 6l-0.6 6l0.8 6l0.5 6l-0.2 6l-0.5 6l0.3 6l0.4 6l0.1 6l-0.9 6l0.2 6l-0.4 6l0.4 6l0.8 6l0.3 6l-0.6 6l0.1 6l-0.2 6l-0.3 6l0.7 6l0.4 6l-0.3 6l-0.0 6l0.4 6l0.3 6l-0.2 6l-0.5 6l-0.3 6l-0.0 6l0.9 6l0.0 6l0.2 6l-0.3 6l-0.1 6l-0.3 6l0.9 6l-0.0 6l-0.7 6l0.4 6l0.1 6l0.0 6l0.2 6l-0.1 6l0.3 6l0.2 6l-0.7 6l-0.0 6l-0.4 6l-0.2 6l-0.2 6l0.2 6l-0.3 6l-0.2 6l0.5 6l0.2 6l-0.1 6l0.1 6l-0.6 6l0.0 6l-0.5 6l-0.2 6l-0.4 6l0.7 6l0.5 6"/></g>
<use href="#g31" x="2" stroke="#fcc488" stroke-width="2.0" opacity="0.48"/>
<g stroke="#b06c34" stroke-width="1.2" opacity="0.53"><path id="g32" d="M638.1 97l-0.2 6l-0.7 6l-0.3 6l0.8 6l0.8 6l0.2 6l0.4 6l0.0 6l-0.7 6l-0.0 6l-0.4 6l0.4 6l0.5 6l-0.1 6l-0.7 6l0.3 6l-0.3 6l0.9 6l0.2 6l-0.4 6l0.2 6l0.1 6l-0.2 6l0.2 6l-0.0 6l-0.3 6l-0.3 6l0.5 6l0.4 6l0.1 6l-0.8 6l-0.1 6l0.3 6l-0.5 6l0.4 6l-0.1 6l-0.6 6l0.3 6l-0.4 6l-0.2 6l-0.2 6l-0.1 6l-0.4 6l0.3 6l-0.5 6l-0.1 6l0.2 6l-0.2 6l0.5 6l0.7 6l0.3 6l0.0 6l0.2 6l-0.3 6l0.2 6l0.0 6l-0.4 6l0.4 6l0.1 6l0.3 6l0.3 6l-0.1 6l-1.0 6l-0.4 6l-0.1 6l0.6 6l0.4 6l0.2 6l-0.6 6l0.1 6l0.2 6l0.3 6l-0.0 6l0.8 6l-0.6 6l-0.1 6l0.4 6l0.3 6l0.3 6l-0.7 6l-0.1 6l0.4 6l-0.1 6"/></g>
<use href="#g32" x="2" stroke="#fcc488" stroke-width="1.6" opacity="0.37"/>
<g stroke="#b06c34" stroke-width="1.6" opacity="0.74"><path id="g33" d="M647.7 97l0.0 8l-0.6 8l-0.7 8l0.3 8l0.2 8l-0.9 8l0.1 8l-0.0 8l0.0 8l-1.0 8l-0.7 8l-0.4 8l-0.2 8l0.6 8l0.3 8l-0.4 8l-0.6 8l-0.1 8l-0.1 8l0.4 8l0.4 8l0.3 8l-0.2 8l0.0 8l0.1 8l0.1 8l0.3 8l0.5 8l0.4 8l-0.1 8l0.3 8l-0.2 8l-0.1 8l0.4 8l0.2 8l-0.2 8l-0.0 8l0.4 8l0.8 8l0.3 8l-0.9 8l-0.2 8l-0.1 8l-0.2 8l-0.4 8l0.2 8l0.3 8l-0.5 8l-0.6 8l-0.5 8l-0.5 8l0.5 8l-0.5 8l0.3 8l0.1 8l-0.8 8l-0.3 8l-0.0 8l0.5 8l0.2 8l-0.4 8l0.0 8"/></g>
<use href="#g33" x="2" stroke="#fcc488" stroke-width="2.1" opacity="0.52"/>
<g stroke="#b06c34" stroke-width="1.8" opacity="0.77"><path id="g34" d="M657.4 97l-0.8 8l0.8 8l-0.8 8l0.5 8l-0.8 8l-0.2 8l0.1 8l0.6 8l0.0 8l-0.8 8l0.6 8l0.2 8l-0.5 8l-1.0 8l-0.2 8l-0.2 8l0.0 8l0.8 8l-0.2 8l0.2 8l-1.1 8l-0.3 8l0.6 8l-0.3 8l-0.4 8l-0.4 8l-0.2 8l0.5 8l0.5 8l0.0 8l0.3 8l-0.2 8l-0.5 8l0.8 8l-0.0 8l0.3 8l0.0 8l-0.1 8l-0.3 8l0.3 8l0.2 8l-0.1 8l-0.1 8l0.7 8l-0.3 8l1.2 8l-0.2 8l0.1 8l0.2 8l-0.7 8l-0.2 8l0.9 8l0.1 8l-0.1 8l-0.3 8l0.4 8l-0.2 8l0.3 8l0.1 8l0.1 8l-0.3 8l-0.3 8"/></g>
<use href="#g34" x="2" stroke="#fcc488" stroke-width="2.3" opacity="0.54"/>
<g stroke="#b06c34" stroke-width="1.3" opacity="0.52"><path id="g35" d="M665.1 97l-0.1 6l0.1 6l0.6 6l-0.1 6l-0.7 6l-0.5 6l0.6 6l0.8 6l-0.5 6l0.7 6l0.1 6l-0.9 6l0.3 6l0.4 6l-0.4 6l-0.4 6l0.6 6l-0.5 6l0.2 6l0.1 6l0.3 6l-0.7 6l-0.4 6l0.4 6l-0.4 6l-0.1 6l-1.0 6l-0.1 6l-0.4 6l-0.4 6l0.3 6l-0.2 6l-0.0 6l0.4 6l-0.8 6l0.2 6l-0.0 6l-0.5 6l-0.0 6l0.2 6l0.1 6l-0.5 6l-0.0 6l-0.4 6l0.8 6l0.6 6l-0.2 6l0.2 6l-0.6 6l0.8 6l-0.2 6l0.3 6l0.1 6l-0.4 6l0.4 6l-0.5 6l1.0 6l0.7 6l0.3 6l0.2 6l-0.2 6l-0.9 6l-0.3 6l-0.1 6l1.1 6l0.2 6l-0.0 6l-0.2 6l0.9 6l0.0 6l-0.6 6l0.0 6l0.9 6l0.2 6l0.4 6l-0.3 6l-0.0 6l0.0 6l-0.9 6l-0.3 6l0.8 6l-0.7 6l0.4 6"/></g>
<use href="#g35" x="2" stroke="#fcc488" stroke-width="1.7" opacity="0.36"/>
<g stroke="#b06c34" stroke-width="1.9" opacity="0.84"><path id="g36" d="M674.8 97l0.1 6l-0.6 6l0.0 6l0.1 6l0.3 6l-0.5 6l0.2 6l0.2 6l0.2 6l-0.5 6l-0.2 6l-0.0 6l-0.4 6l0.6 6l0.0 6l-0.4 6l0.0 6l-0.3 6l0.3 6l-0.7 6l-0.1 6l0.2 6l-0.1 6l-0.6 6l0.4 6l0.1 6l-0.1 6l-0.7 6l0.4 6l0.0 6l-0.2 6l-0.5 6l0.3 6l0.1 6l0.1 6l-0.4 6l-0.1 6l-0.1 6l-0.1 6l0.5 6l0.0 6l0.7 6l0.3 6l-0.1 6l-0.4 6l0.2 6l0.2 6l-0.2 6l0.8 6l0.4 6l-0.1 6l0.3 6l0.1 6l0.1 6l-0.3 6l0.5 6l-0.1 6l-0.3 6l0.4 6l-0.1 6l0.1 6l0.1 6l-0.2 6l-0.3 6l0.4 6l-0.2 6l0.5 6l-0.0 6l0.0 6l-0.2 6l0.2 6l-0.8 6l0.0 6l-0.3 6l-0.5 6l0.5 6l-0.1 6l0.0 6l-0.1 6l-0.7 6l-0.0 6l-0.2 6l-0.5 6"/></g>
<use href="#g36" x="2" stroke="#fcc488" stroke-width="2.5" opacity="0.59"/>
<g stroke="#b06c34" stroke-width="2.3" opacity="0.84"><path id="g37" d="M682.3 97l0.0 8l-0.0 8l-0.4 8l-0.0 8l-0.6 8l-0.1 8l-0.2 8l0.4 8l0.0 8l-0.1 8l-0.3 8l0.1 8l-0.1 8l-0.8 8l-0.3 8l0.6 8l0.5 8l0.5 8l0.1 8l-0.5 8l0.3 8l0.3 8l0.3 8l-0.3 8l0.9 8l-0.0 8l-0.2 8l0.7 8l-0.3 8l-0.5 8l0.4 8l-0.3 8l-0.3 8l-0.1 8l0.2 8l-0.4 8l0.1 8l0.2 8l0.1 8l-0.2 8l-0.1 8l-0.9 8l0.2 8l-0.8 8l0.2 8l-0.5 8l-0.1 8l1.0 8l-0.4 8l0.6 8l0.2 8l-0.4 8l0.8 8l-0.3 8l0.9 8l0.5 8l-0.1 8l-0.0 8l-0.5 8l0.5 8l-0.5 8l0.3 8"/></g>
<use href="#g37" x="2" stroke="#fcc488" stroke-width="3.0" opacity="0.59"/>
<g stroke="#b06c34" stroke-width="1.7" opacity="0.52"><path id="g38" d="M683.7 97l-0.3 6l-0.2 6l0.5 6l-0.3 6l0.3 6l-0.2 6l-0.2 6l-0.2 6l0.8 6l0.3 6l0.4 6l-0.1 6l-0.4 6l-0.0 6l-0.0 6l0.6 6l0.4 6l0.6 6l-0.2 6l-0.1 6l0.1 6l0.1 6l0.0 6l0.5 6l0.3 6l0.2 6l0.7 6l-0.2 6l0.4 6l-0.0 6l-0.4 6l-0.2 6l0.4 6l0.5 6l-0.6 6l0.3 6l-0.3 6l0.2 6l0.2 6l-0.1 6l-0.6 6l-0.4 6l0.4 6l0.1 6l-0.0 6l-0.5 6l-0.8 6l-0.2 6l0.3 6l-0.7 6l-0.3 6l-0.5 6l0.5 6l-0.3 6l-0.5 6l-0.1 6l-0.2 6l0.0 6l0.1 6l0.1 6l-0.5 6l0.1 6l-0.4 6l0.2 6l0.4 6l-0.3 6l0.4 6l-0.3 6l0.1 6l0.5 6l-0.4 6l0.4 6l0.3 6l0.4 6l0.5 6l0.1 6l-0.3 6l-0.1 6l0.3 6l0.1 6l0.4 6l-0.1 6l0.6 6"/></g>
<use href="#g38" x="2" stroke="#fcc488" stroke-width="2.2" opacity="0.37"/>
<g stroke="#b06c34" stroke-width="1.3" opacity="0.81"><path id="g39" d="M691.5 97l-0.4 8l0.3 8l0.3 8l0.7 8l-0.8 8l-0.2 8l-0.4 8l0.4 8l0.1 8l-0.7 8l0.3 8l-1.4 8l-0.4 8l-0.8 8l-0.2 8l0.7 8l0.4 8l-0.5 8l-0.4 8l-0.5 8l-0.4 8l-0.1 8l0.1 8l-0.7 8l0.7 8l0.0 8l0.3 8l-0.8 8l0.1 8l0.5 8l0.5 8l-0.4 8l-0.3 8l0.3 8l0.3 8l0.3 8l-0.2 8l0.3 8l1.0 8l0.9 8l-0.4 8l-0.2 8l0.9 8l0.7 8l-0.4 8l0.3 8l0.9 8l0.3 8l-0.3 8l-0.0 8l-0.1 8l-0.1 8l-0.3 8l0.7 8l-0.1 8l-0.5 8l-0.8 8l-0.7 8l-0.0 8l0.0 8l0.3 8l0.2 8"/></g>
<use href="#g39" x="2" stroke="#fcc488" stroke-width="1.8" opacity="0.57"/>
<g stroke="#b06c34" stroke-width="1.4" opacity="0.89"><path id="g40" d="M698.8 97l0.0 6l0.1 6l0.1 6l0.4 6l0.5 6l0.4 6l0.4 6l0.1 6l0.4 6l-0.0 6l0.0 6l-0.3 6l0.2 6l-0.1 6l0.5 6l-0.2 6l-0.1 6l0.0 6l0.1 6l0.1 6l0.4 6l-0.1 6l-0.1 6l-0.3 6l-0.0 6l-0.3 6l0.3 6l-0.2 6l-0.0 6l-0.3 6l-0.2 6l-0.3 6l-0.3 6l0.4 6l-0.3 6l-0.1 6l-0.3 6l-0.4 6l-0.4 6l0.1 6l0.0 6l-0.5 6l-0.1 6l-0.4 6l0.1 6l-0.4 6l0.3 6l-0.4 6l0.3 6l0.2 6l-0.0 6l-0.3 6l-0.2 6l0.0 6l0.4 6l0.4 6l-0.0 6l-0.2 6l0.5 6l-0.3 6l0.4 6l0.4 6l-0.1 6l0.3 6l0.0 6l0.1 6l0.4 6l-0.1 6l0.4 6l0.1 6l0.6 6l-0.0 6l-0.1 6l0.5 6l0.2 6l-0.2 6l-0.1 6l-0.0 6l0.5 6l-0.1 6l0.4 6l0.1 6l-0.5 6"/></g>
<use href="#g40" x="2" stroke="#fcc488" stroke-width="1.8" opacity="0.63"/>
<g stroke="#b06c34" stroke-width="1.8" opacity="0.78"><path id="g41" d="M709.2 97l0.2 6l0.0 6l-0.1 6l-0.3 6l0.4 6l-0.5 6l-0.2 6l-0.1 6l-0.2 6l-0.2 6l-0.2 6l0.2 6l-0.3 6l0.2 6l0.0 6l-0.0 6l-0.2 6l-0.0 6l-0.4 6l-0.1 6l0.1 6l-0.4 6l0.2 6l-0.0 6l0.3 6l-0.2 6l-0.1 6l0.1 6l-0.3 6l-0.1 6l0.0 6l0.3 6l0.2 6l-0.3 6l0.6 6l0.4 6l-0.2 6l0.4 6l-0.1 6l-0.2 6l-0.3 6l-0.2 6l0.5 6l0.4 6l0.2 6l0.3 6l-0.1 6l0.3 6l0.0 6l0.1 6l-0.0 6l0.1 6l-0.0 6l-0.5 6l0.3 6l0.2 6l-0.2 6l0.4 6l-0.3 6l-0.5 6l0.0 6l-0.2 6l-0.3 6l0.4 6l-0.5 6l0.2 6l-0.5 6l0.0 6l0.4 6l-0.7 6l0.3 6l-0.7 6l0.5 6l0.1 6l-0.4 6l-0.1 6l-0.2 6l-0.4 6l-0.0 6l0.1 6l0.4 6l-0.5 6l0.2 6"/></g>
<use href="#g41" x="2" stroke="#fcc488" stroke-width="2.3" opacity="0.54"/>
<g stroke="#b06c34" stroke-width="1.5" opacity="0.58"><path id="g42" d="M716.8 97l0.1 8l0.6 8l-0.6 8l-0.0 8l0.4 8l0.3 8l-0.0 8l0.2 8l0.5 8l1.2 8l0.1 8l0.4 8l0.3 8l0.7 8l-0.8 8l0.3 8l0.2 8l0.0 8l-0.6 8l-0.3 8l0.5 8l-0.7 8l0.3 8l-0.6 8l-0.5 8l-0.8 8l0.4 8l-0.8 8l-0.4 8l-0.7 8l0.9 8l-0.3 8l-0.4 8l-0.2 8l0.1 8l0.5 8l0.0 8l0.8 8l1.1 8l0.8 8l0.7 8l0.2 8l0.4 8l-1.0 8l0.1 8l0.8 8l-0.6 8l0.2 8l-0.4 8l-0.2 8l0.3 8l-0.3 8l-0.2 8l-1.0 8l-0.9 8l-0.7 8l0.4 8l-0.1 8l-0.3 8l0.3 8l-0.3 8l-0.1 8"/></g>
<use href="#g42" x="2" stroke="#fcc488" stroke-width="1.9" opacity="0.41"/>
<g stroke="#b06c34" stroke-width="1.9" opacity="0.65"><path id="g43" d="M728.2 97l-0.3 6l-0.4 6l-0.4 6l0.3 6l-0.4 6l0.2 6l-0.5 6l-0.1 6l0.1 6l-0.1 6l0.3 6l-0.0 6l0.4 6l0.5 6l0.3 6l-0.2 6l-0.0 6l0.1 6l0.7 6l0.4 6l0.2 6l0.0 6l0.2 6l0.4 6l0.1 6l-0.2 6l0.2 6l-0.2 6l0.2 6l-0.2 6l-0.1 6l-0.5 6l0.2 6l-0.0 6l-0.6 6l-0.4 6l-0.0 6l-0.4 6l-0.5 6l-0.1 6l0.2 6l-0.1 6l-0.1 6l-0.4 6l-0.4 6l0.5 6l-0.2 6l0.0 6l0.3 6l-0.0 6l0.1 6l-0.0 6l0.6 6l0.4 6l-0.1 6l0.2 6l0.5 6l0.0 6l0.5 6l0.1 6l0.2 6l0.3 6l-0.4 6l-0.0 6l0.1 6l0.1 6l-0.1 6l-0.2 6l-0.3 6l-0.0 6l-0.3 6l-0.2 6l-0.1 6l-0.4 6l-0.2 6l-0.6 6l-0.2 6l-0.0 6l0.1 6l-0.3 6l0.1 6l-0.0 6l-0.4 6"/></g>
<use href="#g43" x="2" stroke="#fcc488" stroke-width="2.4" opacity="0.46"/>
<g stroke="#b06c34" stroke-width="2.4" opacity="0.90"><path id="g44" d="M738.9 97l0.0 8l-0.2 8l-0.7 8l-0.3 8l-0.1 8l-0.4 8l-0.4 8l-0.6 8l-0.5 8l-0.2 8l0.1 8l0.1 8l-0.1 8l0.1 8l0.1 8l0.2 8l0.0 8l0.5 8l0.1 8l0.5 8l0.5 8l0.3 8l0.3 8l0.2 8l0.2 8l-0.0 8l0.0 8l0.5 8l0.0 8l0.3 8l0.1 8l0.1 8l-0.1 8l-0.3 8l-0.2 8l0.1 8l0.1 8l-0.6 8l-0.5 8l-0.3 8l-0.3 8l-0.2 8l-0.2 8l-0.2 8l-0.2 8l-0.3 8l-0.0 8l-0.5 8l-0.3 8l0.0 8l-0.2 8l0.3 8l-0.1 8l0.2 8l0.2 8l0.1 8l-0.1 8l0.3 8l0.5 8l0.8 8l-0.1 8l0.7 8"/></g>
<use href="#g44" x="2" stroke="#fcc488" stroke-width="3.1" opacity="0.63"/>
<g stroke="#b06c34" stroke-width="1.5" opacity="0.65"><path id="g45" d="M743.2 97l-0.1 8l-0.0 8l0.2 8l0.1 8l0.0 8l-0.1 8l-0.4 8l-0.1 8l0.2 8l0.1 8l0.2 8l-0.2 8l0.1 8l0.2 8l-0.1 8l0.0 8l-0.0 8l-0.0 8l-0.1 8l-0.2 8l0.3 8l0.4 8l-0.0 8l0.2 8l-0.3 8l0.4 8l-0.1 8l0.1 8l0.4 8l-0.2 8l-0.2 8l0.3 8l-0.1 8l-0.3 8l0.2 8l-0.1 8l0.1 8l-0.2 8l-0.2 8l0.2 8l-0.0 8l0.2 8l-0.3 8l-0.1 8l0.1 8l-0.1 8l0.1 8l0.1 8l-0.4 8l-0.1 8l-0.1 8l0.2 8l0.3 8l-0.1 8l-0.1 8l-0.4 8l-0.1 8l-0.1 8l-0.2 8l-0.1 8l0.1 8l0.1 8"/></g>
<use href="#g45" x="2" stroke="#fcc488" stroke-width="1.9" opacity="0.46"/>
<g stroke="#b06c34" stroke-width="2.0" opacity="0.52"><path id="g46" d="M748.0 97l0.4 8l-0.5 8l-0.4 8l0.1 8l-0.2 8l-0.0 8l0.0 8l-0.2 8l0.1 8l-0.3 8l0.4 8l0.1 8l0.0 8l0.6 8l-0.1 8l0.3 8l-0.5 8l0.4 8l-0.3 8l-0.1 8l0.8 8l-0.1 8l0.3 8l-0.3 8l0.3 8l0.3 8l-0.3 8l0.1 8l0.4 8l-0.3 8l-0.2 8l-0.3 8l0.4 8l0.1 8l0.2 8l-0.0 8l-0.2 8l-0.0 8l-0.0 8l-0.2 8l-0.0 8l-0.3 8l-0.2 8l-0.4 8l-0.4 8l-0.1 8l0.2 8l-0.2 8l0.1 8l0.1 8l0.2 8l-0.1 8l0.2 8l-0.3 8l-0.1 8l0.1 8l-0.4 8l0.1 8l0.2 8l0.3 8l-0.1 8l-0.0 8"/></g>
<use href="#g46" x="2" stroke="#fcc488" stroke-width="2.6" opacity="0.36"/>
<g stroke="#b06c34" stroke-width="1.8" opacity="0.94"><path id="g47" d="M753.0 97l0.7 6l-0.2 6l0.2 6l-0.1 6l0.2 6l0.1 6l0.1 6l1.1 6l0.1 6l0.7 6l-0.1 6l-0.6 6l0.3 6l0.4 6l-0.2 6l-0.2 6l-0.2 6l-0.1 6l0.4 6l-0.3 6l-0.1 6l-0.3 6l0.1 6l-0.4 6l0.1 6l-0.6 6l0.4 6l-1.0 6l0.2 6l0.1 6l-0.4 6l-0.1 6l-0.4 6l-0.9 6l0.4 6l-0.4 6l-0.0 6l0.1 6l-0.4 6l-0.5 6l0.4 6l0.0 6l0.0 6l-0.1 6l0.4 6l0.2 6l-0.1 6l-0.5 6l0.1 6l0.1 6l0.4 6l-0.1 6l0.5 6l0.0 6l0.4 6l-0.3 6l0.8 6l0.3 6l-0.3 6l-0.1 6l0.7 6l0.3 6l0.7 6l-0.5 6l0.7 6l0.4 6l-0.3 6l-0.4 6l0.8 6l-0.2 6l0.6 6l-0.2 6l0.4 6l0.1 6l-0.2 6l-0.5 6l0.3 6l-0.5 6l-0.7 6l0.4 6l-0.7 6l-0.4 6l-0.1 6"/></g>
<use href="#g47" x="2" stroke="#fcc488" stroke-width="2.3" opacity="0.65"/>
<g stroke="#b06c34" stroke-width="1.6" opacity="0.73"><path id="g48" d="M758.7 97l-0.8 8l-0.3 8l-0.0 8l-0.3 8l-0.0 8l0.2 8l-0.2 8l0.1 8l0.9 8l0.3 8l0.6 8l0.7 8l0.4 8l0.8 8l0.0 8l0.4 8l0.2 8l-0.4 8l-0.7 8l-0.6 8l-0.9 8l-1.0 8l-0.3 8l-0.3 8l-0.6 8l0.1 8l0.3 8l-0.0 8l0.6 8l0.3 8l0.6 8l1.0 8l0.9 8l0.7 8l0.4 8l0.1 8l-0.3 8l-0.5 8l-0.3 8l-0.7 8l-0.5 8l-0.9 8l-0.7 8l-0.7 8l0.0 8l-0.3 8l0.0 8l0.0 8l0.5 8l0.2 8l0.5 8l0.2 8l0.8 8l0.5 8l1.1 8l0.2 8l0.2 8l-0.2 8l-0.1 8l-0.3 8l-0.2 8l-0.5 8"/></g>
<use href="#g48" x="2" stroke="#fcc488" stroke-width="2.0" opacity="0.51"/>
<g stroke="#b06c34" stroke-width="1.8" opacity="0.55"><path id="g49" d="M771.8 97l-0.3 6l-0.5 6l-0.2 6l-0.1 6l0.3 6l-0.1 6l-0.4 6l-0.6 6l0.5 6l0.1 6l0.1 6l-0.1 6l-0.9 6l-0.3 6l-0.0 6l-0.2 6l0.4 6l-0.5 6l-0.5 6l0.2 6l-0.4 6l-0.2 6l0.5 6l0.2 6l0.1 6l-0.5 6l0.3 6l0.1 6l-0.2 6l-0.1 6l-0.1 6l0.4 6l0.1 6l0.4 6l0.3 6l-0.2 6l0.3 6l-0.2 6l0.5 6l-0.3 6l0.4 6l0.4 6l0.4 6l-0.0 6l0.5 6l0.4 6l0.1 6l-0.4 6l-0.2 6l0.4 6l-0.3 6l-0.0 6l-0.1 6l0.6 6l0.1 6l0.7 6l0.2 6l-0.2 6l-0.3 6l-0.2 6l-0.4 6l-0.1 6l0.8 6l-0.3 6l-0.5 6l0.8 6l-0.3 6l0.2 6l-0.3 6l0.4 6l-0.9 6l-0.1 6l0.1 6l-0.7 6l0.6 6l-0.4 6l0.1 6l-0.7 6l-0.4 6l-0.3 6l0.6 6l0.4 6l0.1 6"/></g>
<use href="#g49" x="2" stroke="#fcc488" stroke-width="2.4" opacity="0.38"/>
<g stroke="#b06c34" stroke-width="2.2" opacity="0.74"><path id="g50" d="M779.3 97l-0.1 6l0.0 6l0.5 6l0.2 6l-0.1 6l-0.3 6l-0.1 6l0.5 6l0.3 6l-0.0 6l0.5 6l-0.1 6l-0.1 6l0.8 6l0.2 6l0.6 6l-0.8 6l0.2 6l0.5 6l-0.5 6l0.4 6l-0.5 6l0.4 6l0.0 6l-0.0 6l-0.3 6l0.6 6l-0.2 6l-0.2 6l-0.0 6l0.3 6l-0.0 6l-0.2 6l0.2 6l-0.4 6l0.4 6l-0.4 6l-0.1 6l-0.7 6l-0.1 6l0.6 6l-0.9 6l0.2 6l-0.2 6l0.1 6l0.3 6l-0.3 6l-0.8 6l0.1 6l-0.2 6l0.4 6l-0.6 6l0.1 6l-0.0 6l-0.7 6l-0.1 6l0.4 6l0.1 6l-0.4 6l0.0 6l0.5 6l0.6 6l0.1 6l-0.0 6l-0.1 6l-0.1 6l-0.3 6l0.8 6l-0.2 6l0.1 6l-0.2 6l0.0 6l0.3 6l0.5 6l-0.3 6l0.1 6l0.3 6l0.3 6l0.3 6l0.0 6l0.1 6l-0.2 6l0.7 6"/></g>
<use href="#g50" x="2" stroke="#fcc488" stroke-width="2.9" opacity="0.52"/>
<g stroke="#b06c34" stroke-width="2.1" opacity="0.79"><path id="g51" d="M785.2 97l0.3 8l-0.6 8l0.1 8l-0.1 8l-0.8 8l-0.1 8l-0.7 8l-0.8 8l-0.2 8l-0.6 8l0.4 8l-0.5 8l0.0 8l0.4 8l-0.0 8l0.5 8l0.1 8l0.1 8l0.3 8l0.3 8l0.6 8l0.1 8l0.3 8l0.2 8l0.2 8l0.8 8l-0.4 8l-0.3 8l0.3 8l-0.1 8l0.4 8l0.0 8l-1.0 8l-0.4 8l0.2 8l-0.4 8l0.0 8l-0.5 8l-0.9 8l0.2 8l0.3 8l-1.1 8l0.1 8l0.0 8l0.0 8l-0.1 8l0.0 8l0.8 8l0.4 8l-0.2 8l0.6 8l0.3 8l0.5 8l0.7 8l-0.7 8l-0.0 8l0.1 8l0.9 8l0.6 8l-0.6 8l0.0 8l0.5 8"/></g>
<use href="#g51" x="2" stroke="#fcc488" stroke-width="2.7" opacity="0.56"/>
<g stroke="#b06c34" stroke-width="2.1" opacity="0.93"><path id="g52" d="M791.7 97l0.1 8l0.2 8l-0.0 8l-0.0 8l0.3 8l1.1 8l1.4 8l0.2 8l0.3 8l0.8 8l0.9 8l-0.3 8l0.8 8l-0.8 8l-0.0 8l-0.4 8l-0.9 8l-1.3 8l-0.5 8l-0.4 8l-0.8 8l0.5 8l-1.1 8l-0.1 8l-0.2 8l1.1 8l-0.1 8l1.3 8l0.7 8l0.8 8l1.1 8l-0.4 8l1.2 8l-0.0 8l-0.1 8l0.3 8l0.1 8l-0.4 8l-1.0 8l-0.2 8l-1.9 8l-0.9 8l-0.6 8l-0.1 8l0.0 8l-0.8 8l0.1 8l0.9 8l1.0 8l-0.4 8l0.3 8l1.7 8l0.6 8l0.6 8l-0.5 8l-0.1 8l1.1 8l0.1 8l0.4 8l-0.8 8l-0.5 8l-1.4 8"/></g>
<use href="#g52" x="2" stroke="#fcc488" stroke-width="2.7" opacity="0.65"/>
<g stroke="#b06c34" stroke-width="1.9" opacity="0.74"><path id="g53" d="M805.8 97l-0.3 6l0.2 6l-0.2 6l-0.4 6l0.5 6l-0.4 6l-0.1 6l0.1 6l-0.4 6l0.4 6l0.1 6l-0.5 6l0.1 6l-0.4 6l0.1 6l-0.3 6l-0.0 6l0.1 6l0.1 6l0.1 6l0.3 6l-0.3 6l-0.2 6l-0.2 6l0.4 6l-0.1 6l-0.2 6l-0.1 6l0.2 6l0.5 6l-0.1 6l0.3 6l-0.1 6l0.1 6l-0.2 6l0.1 6l0.3 6l-0.3 6l0.2 6l-0.0 6l0.1 6l0.1 6l-0.0 6l0.3 6l-0.2 6l0.1 6l0.1 6l-0.0 6l0.5 6l0.2 6l0.3 6l-0.5 6l-0.2 6l-0.0 6l0.1 6l0.3 6l0.1 6l0.1 6l-0.7 6l-0.4 6l0.0 6l0.1 6l-0.4 6l0.1 6l-0.2 6l0.5 6l-0.4 6l-0.1 6l-0.2 6l0.4 6l-0.4 6l0.0 6l-0.2 6l-0.1 6l0.5 6l0.0 6l0.0 6l-0.3 6l0.3 6l0.2 6l-0.2 6l-0.4 6l-0.4 6"/></g>
<use href="#g53" x="2" stroke="#fcc488" stroke-width="2.4" opacity="0.52"/>
<g stroke="#b06c34" stroke-width="2.2" opacity="0.99"><path id="g54" d="M813.5 97l0.1 6l0.8 6l0.4 6l0.2 6l0.2 6l-0.3 6l0.7 6l-0.1 6l0.5 6l0.2 6l0.2 6l0.2 6l0.6 6l0.3 6l-0.1 6l0.4 6l-0.3 6l0.1 6l0.1 6l-0.1 6l0.3 6l-0.2 6l0.8 6l0.3 6l-0.1 6l-0.4 6l-0.1 6l0.4 6l-0.3 6l-0.4 6l0.0 6l0.1 6l-0.4 6l-0.1 6l0.0 6l0.1 6l-0.4 6l0.2 6l-0.6 6l-0.0 6l-0.7 6l0.2 6l-0.3 6l-0.6 6l0.1 6l0.0 6l-0.7 6l0.2 6l0.1 6l-0.6 6l0.0 6l-0.1 6l-0.2 6l-0.3 6l-0.3 6l0.3 6l0.1 6l0.2 6l-0.6 6l0.1 6l0.2 6l-0.3 6l-0.2 6l0.7 6l0.3 6l0.2 6l-0.1 6l0.1 6l0.5 6l-0.3 6l0.5 6l0.4 6l0.1 6l0.6 6l0.1 6l0.4 6l-0.3 6l0.2 6l0.1 6l0.3 6l0.5 6l0.5 6l0.3 6"/></g>
<use href="#g54" x="2" stroke="#fcc488" stroke-width="2.9" opacity="0.69"/>
<g stroke="#b06c34" stroke-width="2.3" opacity="0.68"><path id="g55" d="M827.8 97l-0.8 8l-0.7 8l0.2 8l-1.1 8l-0.7 8l-0.4 8l-0.7 8l-0.4 8l0.5 8l-0.2 8l-0.3 8l0.3 8l0.9 8l0.1 8l0.4 8l0.5 8l0.8 8l0.8 8l0.3 8l0.5 8l0.2 8l-0.7 8l0.1 8l-0.4 8l-0.1 8l-1.0 8l-1.0 8l0.1 8l-0.4 8l-0.8 8l0.0 8l-0.2 8l-0.3 8l-0.0 8l0.5 8l0.9 8l0.6 8l0.4 8l1.0 8l0.7 8l0.4 8l-0.0 8l0.4 8l0.1 8l-1.0 8l0.1 8l-0.5 8l-0.8 8l-0.8 8l-0.4 8l-0.3 8l-0.3 8l-0.3 8l-0.7 8l0.1 8l0.4 8l0.2 8l0.9 8l0.8 8l0.8 8l-0.3 8l0.6 8"/></g>
<use href="#g55" x="2" stroke="#fcc488" stroke-width="3.0" opacity="0.48"/>
<g stroke="#b06c34" stroke-width="1.6" opacity="0.61"><path id="g56" d="M830.5 97l0.1 6l0.6 6l-0.2 6l0.3 6l0.8 6l-0.1 6l0.5 6l0.2 6l0.1 6l-0.7 6l-0.1 6l0.5 6l-0.6 6l-0.6 6l0.3 6l-0.5 6l-0.3 6l-0.6 6l-0.3 6l-0.6 6l-0.5 6l-0.3 6l-0.2 6l0.4 6l-0.4 6l-0.0 6l0.6 6l1.0 6l0.5 6l0.3 6l0.4 6l-0.2 6l0.4 6l-0.2 6l0.6 6l-0.2 6l0.0 6l0.0 6l0.2 6l0.2 6l-0.3 6l-0.5 6l-0.4 6l0.5 6l0.1 6l-0.2 6l-1.2 6l-0.7 6l0.3 6l-0.9 6l-0.4 6l0.4 6l0.6 6l0.3 6l0.2 6l-0.4 6l0.5 6l0.7 6l0.5 6l0.5 6l0.2 6l0.3 6l0.2 6l-0.1 6l0.2 6l0.5 6l-0.2 6l-0.7 6l0.0 6l0.3 6l-0.2 6l-0.5 6l0.0 6l-0.4 6l-1.0 6l-0.1 6l-0.0 6l-1.1 6l0.4 6l-0.4 6l0.2 6l-0.8 6l0.0 6"/></g>
<use href="#g56" x="2" stroke="#fcc488" stroke-width="2.0" opacity="0.43"/>
</g>
<g clip-path="url(#cB2)">
<g stroke="#b06c34" stroke-width="1.8" opacity="0.31"><path id="g57" d="M596.9 570l0.2 8l-0.1 8l-0.3 8l0.1 8l-0.0 8l0.2 8l0.0 8l-0.1 8l-0.6 8l0.2 8l-0.4 8l0.1 8l-0.1 8l-0.3 8l-0.6 8l-0.5 8"/></g>
<use href="#g57" x="2" stroke="#fcc488" stroke-width="2.4" opacity="0.21"/>
<g stroke="#b06c34" stroke-width="1.9" opacity="0.30"><path id="g58" d="M607.4 570l1.1 8l0.9 8l-0.7 8l0.6 8l0.1 8l0.6 8l-0.5 8l-0.5 8l-0.7 8l0.4 8l-0.8 8l0.3 8l-1.5 8l0.3 8l-1.4 8l0.2 8"/></g>
<use href="#g58" x="2" stroke="#fcc488" stroke-width="2.5" opacity="0.21"/>
<g stroke="#b06c34" stroke-width="1.6" opacity="0.40"><path id="g59" d="M617.5 570l0.2 8l-0.5 8l-0.4 8l-0.2 8l-0.0 8l-0.0 8l-0.7 8l0.2 8l-0.8 8l-0.4 8l0.5 8l0.1 8l-0.1 8l0.1 8l0.5 8l-0.3 8"/></g>
<use href="#g59" x="2" stroke="#fcc488" stroke-width="2.1" opacity="0.28"/>
<g stroke="#b06c34" stroke-width="1.2" opacity="0.37"><path id="g60" d="M624.4 570l-0.5 8l-0.3 8l0.0 8l1.0 8l-0.4 8l0.5 8l0.2 8l-0.4 8l-0.9 8l-0.0 8l-0.5 8l0.3 8l-0.7 8l-0.2 8l-0.1 8l-0.2 8"/></g>
<use href="#g60" x="2" stroke="#fcc488" stroke-width="1.5" opacity="0.26"/>
<g stroke="#b06c34" stroke-width="1.7" opacity="0.39"><path id="g61" d="M631.0 570l0.1 8l-0.6 8l-0.4 8l0.2 8l-0.5 8l-0.4 8l-0.1 8l0.0 8l-0.0 8l0.0 8l-0.4 8l0.4 8l-0.0 8l-0.0 8l-0.1 8l0.2 8"/></g>
<use href="#g61" x="2" stroke="#fcc488" stroke-width="2.2" opacity="0.27"/>
<g stroke="#b06c34" stroke-width="1.5" opacity="0.49"><path id="g62" d="M642.9 570l0.5 8l0.1 8l0.5 8l0.3 8l0.6 8l0.6 8l0.2 8l0.1 8l0.0 8l-0.3 8l0.6 8l-0.2 8l0.2 8l0.3 8l-0.2 8l0.6 8"/></g>
<use href="#g62" x="2" stroke="#fcc488" stroke-width="2.0" opacity="0.34"/>
<g stroke="#b06c34" stroke-width="1.8" opacity="0.37"><path id="g63" d="M649.6 570l-0.1 8l0.3 8l-0.2 8l-0.5 8l0.4 8l-0.8 8l-0.7 8l0.0 8l0.3 8l-0.0 8l-0.2 8l-0.4 8l-0.4 8l-0.5 8l-0.4 8l0.2 8"/></g>
<use href="#g63" x="2" stroke="#fcc488" stroke-width="2.4" opacity="0.26"/>
<g stroke="#b06c34" stroke-width="1.5" opacity="0.42"><path id="g64" d="M664.6 570l0.3 8l0.2 8l0.2 8l-0.4 8l-0.2 8l-0.5 8l-0.2 8l0.4 8l-0.4 8l-0.5 8l-0.6 8l-0.5 8l-0.2 8l-0.7 8l0.3 8l-0.8 8"/></g>
<use href="#g64" x="2" stroke="#fcc488" stroke-width="2.0" opacity="0.29"/>
<g stroke="#b06c34" stroke-width="1.6" opacity="0.43"><path id="g65" d="M671.0 570l0.5 6l-0.0 6l0.0 6l0.2 6l-0.4 6l-0.1 6l0.2 6l-0.5 6l0.5 6l0.5 6l0.2 6l-1.1 6l0.6 6l-0.7 6l-0.5 6l0.4 6l-0.2 6l-0.4 6l0.4 6l0.0 6l-0.0 6l-0.1 6"/></g>
<use href="#g65" x="2" stroke="#fcc488" stroke-width="2.1" opacity="0.30"/>
<g stroke="#b06c34" stroke-width="1.6" opacity="0.27"><path id="g66" d="M681.0 570l-0.1 8l0.1 8l-0.5 8l0.4 8l-0.6 8l-0.1 8l-0.1 8l0.4 8l-0.7 8l-0.2 8l0.3 8l-0.1 8l-0.0 8l-0.2 8l0.8 8l-0.0 8"/></g>
<use href="#g66" x="2" stroke="#fcc488" stroke-width="2.1" opacity="0.19"/>
<g stroke="#b06c34" stroke-width="1.1" opacity="0.29"><path id="g67" d="M695.6 570l-0.1 6l0.2 6l-0.4 6l-0.0 6l0.5 6l-0.1 6l-0.2 6l0.1 6l0.1 6l0.2 6l0.0 6l-0.0 6l0.1 6l0.1 6l-0.1 6l0.2 6l0.1 6l0.1 6l0.2 6l-0.1 6l-0.2 6l0.4 6"/></g>
<use href="#g67" x="2" stroke="#fcc488" stroke-width="1.5" opacity="0.20"/>
<g stroke="#b06c34" stroke-width="1.9" opacity="0.26"><path id="g68" d="M702.1 570l0.9 8l-0.9 8l-0.2 8l1.1 8l0.1 8l0.0 8l0.8 8l0.4 8l0.5 8l-0.9 8l0.0 8l0.6 8l0.2 8l-0.1 8l0.1 8l0.2 8"/></g>
<use href="#g68" x="2" stroke="#fcc488" stroke-width="2.4" opacity="0.18"/>
<g stroke="#b06c34" stroke-width="2.0" opacity="0.28"><path id="g69" d="M709.4 570l-0.1 6l0.6 6l0.2 6l0.1 6l-0.5 6l0.1 6l-0.6 6l-0.1 6l-0.3 6l-0.2 6l-0.3 6l-0.2 6l-0.4 6l-0.1 6l-0.3 6l-0.6 6l-0.5 6l-0.3 6l-0.2 6l-0.1 6l-0.0 6l0.2 6"/></g>
<use href="#g69" x="2" stroke="#fcc488" stroke-width="2.6" opacity="0.19"/>
<g stroke="#b06c34" stroke-width="1.3" opacity="0.46"><path id="g70" d="M715.9 570l-0.4 6l0.1 6l-0.5 6l-0.1 6l0.1 6l-0.8 6l-0.2 6l0.4 6l-1.1 6l0.0 6l-0.4 6l-0.6 6l0.7 6l0.2 6l-0.3 6l0.4 6l0.3 6l0.4 6l0.2 6l0.6 6l0.4 6l0.1 6"/></g>
<use href="#g70" x="2" stroke="#fcc488" stroke-width="1.7" opacity="0.32"/>
<g stroke="#b06c34" stroke-width="1.4" opacity="0.38"><path id="g71" d="M724.4 570l0.4 6l-1.1 6l-0.7 6l0.6 6l0.7 6l-0.2 6l-0.1 6l-0.2 6l0.2 6l0.7 6l-0.1 6l0.2 6l-0.3 6l0.5 6l0.1 6l-0.3 6l-0.4 6l-0.2 6l1.0 6l0.0 6l-0.8 6l0.4 6"/></g>
<use href="#g71" x="2" stroke="#fcc488" stroke-width="1.9" opacity="0.27"/>
<g stroke="#b06c34" stroke-width="1.3" opacity="0.46"><path id="g72" d="M733.9 570l-0.0 8l-1.0 8l-0.4 8l-1.1 8l0.2 8l0.0 8l-0.6 8l-1.1 8l0.5 8l0.2 8l-0.2 8l-0.9 8l0.1 8l0.2 8l-0.4 8l0.2 8"/></g>
<use href="#g72" x="2" stroke="#fcc488" stroke-width="1.7" opacity="0.32"/>
<g stroke="#b06c34" stroke-width="1.9" opacity="0.48"><path id="g73" d="M743.6 570l-0.4 8l0.1 8l-0.3 8l-0.6 8l-0.3 8l-0.5 8l-0.4 8l-0.5 8l-0.2 8l-0.1 8l0.0 8l-0.4 8l0.1 8l0.1 8l0.4 8l0.1 8"/></g>
<use href="#g73" x="2" stroke="#fcc488" stroke-width="2.4" opacity="0.33"/>
<g stroke="#b06c34" stroke-width="1.7" opacity="0.40"><path id="g74" d="M749.1 570l-0.3 8l0.0 8l-0.4 8l0.7 8l0.5 8l0.2 8l0.5 8l0.1 8l-0.7 8l-0.0 8l0.8 8l-0.5 8l0.7 8l0.3 8l-0.5 8l-0.1 8"/></g>
<use href="#g74" x="2" stroke="#fcc488" stroke-width="2.3" opacity="0.28"/>
<g stroke="#b06c34" stroke-width="1.4" opacity="0.25"><path id="g75" d="M752.4 570l-0.5 8l1.2 8l0.7 8l0.3 8l-0.7 8l1.2 8l-0.2 8l0.6 8l0.6 8l0.1 8l-0.6 8l-0.1 8l0.6 8l-0.7 8l-0.1 8l0.6 8"/></g>
<use href="#g75" x="2" stroke="#fcc488" stroke-width="1.8" opacity="0.17"/>
<g stroke="#b06c34" stroke-width="1.6" opacity="0.42"><path id="g76" d="M763.8 570l-0.2 8l-0.4 8l0.5 8l-0.3 8l0.1 8l-0.5 8l0.7 8l0.4 8l-0.0 8l-0.5 8l0.3 8l0.0 8l0.1 8l-0.1 8l-0.0 8l0.7 8"/></g>
<use href="#g76" x="2" stroke="#fcc488" stroke-width="2.1" opacity="0.30"/>
<g stroke="#b06c34" stroke-width="1.7" opacity="0.40"><path id="g77" d="M775.4 570l-0.3 8l-0.3 8l0.4 8l-0.0 8l-0.1 8l0.4 8l0.4 8l-0.5 8l0.3 8l0.4 8l-0.0 8l0.3 8l-0.3 8l0.2 8l0.0 8l0.3 8"/></g>
<use href="#g77" x="2" stroke="#fcc488" stroke-width="2.3" opacity="0.28"/>
<g stroke="#b06c34" stroke-width="1.8" opacity="0.42"><path id="g78" d="M790.1 570l-0.1 8l-0.3 8l-0.2 8l0.2 8l-0.5 8l-0.2 8l0.1 8l-0.4 8l-0.0 8l-0.3 8l-0.3 8l0.0 8l-0.1 8l-0.2 8l0.3 8l-0.5 8"/></g>
<use href="#g78" x="2" stroke="#fcc488" stroke-width="2.4" opacity="0.29"/>
<g stroke="#b06c34" stroke-width="1.7" opacity="0.41"><path id="g79" d="M801.4 570l0.1 6l-0.1 6l-0.2 6l-0.0 6l-0.3 6l-0.4 6l-0.0 6l0.1 6l-0.4 6l-0.1 6l0.1 6l-0.5 6l0.2 6l-0.3 6l-0.2 6l0.1 6l-0.1 6l-0.3 6l-0.2 6l0.0 6l0.3 6l0.2 6"/></g>
<use href="#g79" x="2" stroke="#fcc488" stroke-width="2.2" opacity="0.29"/>
<g stroke="#b06c34" stroke-width="1.8" opacity="0.42"><path id="g80" d="M809.8 570l0.0 6l-0.2 6l0.2 6l-0.2 6l-0.2 6l0.4 6l0.5 6l0.1 6l0.3 6l0.2 6l0.6 6l0.8 6l0.3 6l0.0 6l0.4 6l0.3 6l0.1 6l0.5 6l0.2 6l-0.6 6l0.2 6l0.0 6"/></g>
<use href="#g80" x="2" stroke="#fcc488" stroke-width="2.4" opacity="0.29"/>
<g stroke="#b06c34" stroke-width="1.9" opacity="0.36"><path id="g81" d="M816.0 570l0.1 8l-0.6 8l0.0 8l0.5 8l0.8 8l-0.4 8l1.2 8l0.6 8l-0.6 8l1.1 8l-0.1 8l-0.2 8l0.3 8l1.3 8l0.2 8l0.3 8"/></g>
<use href="#g81" x="2" stroke="#fcc488" stroke-width="2.4" opacity="0.25"/>
<g stroke="#b06c34" stroke-width="1.6" opacity="0.32"><path id="g82" d="M823.7 570l-0.8 8l0.1 8l0.3 8l-0.6 8l-0.6 8l0.2 8l-0.4 8l0.0 8l0.2 8l0.5 8l-0.4 8l0.0 8l0.1 8l0.2 8l-0.0 8l-0.7 8"/></g>
<use href="#g82" x="2" stroke="#fcc488" stroke-width="2.0" opacity="0.22"/>
</g>
<g clip-path="url(#cC)">
<g stroke="#bc7a40" stroke-width="1.9" opacity="0.76"><path id="g83" d="M838.0 97l-0.3 8l0.5 8l0.1 8l0.0 8l-0.2 8l0.8 8l0.5 8l-0.0 8l-0.2 8l-0.6 8l-0.1 8l-0.1 8l-0.3 8l0.1 8l-0.0 8l-0.0 8l-0.5 8l-0.3 8l0.7 8l-0.2 8l-0.6 8l-0.2 8l-0.3 8l-0.1 8l-0.5 8l0.2 8l0.2 8l-0.3 8l0.1 8l-0.2 8l-0.5 8l-0.3 8l-0.0 8l-0.4 8l-0.6 8l0.1 8l0.5 8l0.1 8l-0.6 8l0.6 8l-0.5 8l0.3 8l-0.1 8l0.1 8l0.1 8l0.6 8l0.5 8l0.6 8l-0.0 8l-0.4 8l-0.1 8l0.1 8l0.2 8l0.3 8l0.4 8l0.1 8l0.9 8l0.0 8l0.2 8l0.5 8l-0.4 8l0.2 8l-0.4 8l0.3 8l0.6 8l-0.1 8l-0.4 8l0.1 8l-0.1 8l-0.1 8l0.0 8l-0.0 8l0.1 8l0.0 8l-0.1 8l-0.3 8"/></g>
<use href="#g83" x="2" stroke="#ffd096" stroke-width="2.4" opacity="0.53"/>
<g stroke="#bc7a40" stroke-width="1.6" opacity="0.64"><path id="g84" d="M842.2 97l-0.1 6l0.4 6l0.2 6l-0.5 6l0.5 6l0.0 6l-0.2 6l-0.1 6l-0.0 6l0.1 6l0.1 6l-0.3 6l-0.0 6l-0.2 6l0.4 6l-0.0 6l0.2 6l0.3 6l-0.4 6l0.2 6l0.2 6l-0.7 6l0.1 6l-0.2 6l-0.0 6l-0.0 6l-0.3 6l-0.1 6l0.2 6l-0.7 6l-0.4 6l0.1 6l0.6 6l0.2 6l-0.1 6l0.2 6l-0.4 6l-0.0 6l0.4 6l0.1 6l-0.1 6l-0.4 6l-0.4 6l0.5 6l0.2 6l-0.4 6l-0.1 6l-0.0 6l-0.2 6l0.1 6l-0.2 6l0.8 6l-0.5 6l-0.1 6l0.7 6l0.3 6l-0.6 6l0.3 6l0.6 6l0.3 6l-0.6 6l-0.3 6l0.7 6l0.4 6l-0.3 6l0.3 6l-0.6 6l0.1 6l0.2 6l-0.2 6l0.4 6l0.3 6l-0.4 6l-0.3 6l0.7 6l0.0 6l-0.3 6l0.5 6l0.1 6l-0.6 6l-0.1 6l-0.4 6l0.0 6l0.2 6l0.3 6l-0.5 6l-0.3 6l0.7 6l-0.6 6l0.3 6l0.1 6l-0.3 6l0.4 6l-0.1 6l-0.7 6l0.1 6l0.0 6l0.3 6l0.1 6l-0.1 6l-0.1 6"/></g>
<use href="#g84" x="2" stroke="#ffd096" stroke-width="2.1" opacity="0.45"/>
<g stroke="#bc7a40" stroke-width="1.1" opacity="0.48"><path id="g85" d="M843.3 97l0.4 8l0.0 8l0.4 8l0.9 8l-0.3 8l0.7 8l0.8 8l0.4 8l-0.2 8l0.1 8l0.8 8l0.1 8l-0.1 8l-0.3 8l0.2 8l-0.3 8l0.0 8l0.7 8l-0.5 8l0.2 8l-0.5 8l0.4 8l0.3 8l0.0 8l-0.2 8l0.0 8l-0.3 8l-0.3 8l-0.2 8l-1.1 8l-0.7 8l0.1 8l-0.8 8l0.5 8l-0.2 8l0.1 8l-0.8 8l-0.5 8l-0.5 8l-0.2 8l0.1 8l0.1 8l0.2 8l0.5 8l-0.5 8l-0.1 8l-0.2 8l0.9 8l0.1 8l0.7 8l-0.3 8l0.7 8l0.0 8l0.6 8l-0.1 8l-0.1 8l0.6 8l-0.2 8l1.0 8l-0.2 8l-0.1 8l0.4 8l0.3 8l0.2 8l0.2 8l0.1 8l0.4 8l-0.4 8l0.1 8l0.0 8l-0.3 8l-0.4 8l0.4 8l-0.4 8l0.1 8l-0.1 8"/></g>
<use href="#g85" x="2" stroke="#ffd096" stroke-width="1.4" opacity="0.34"/>
<g stroke="#bc7a40" stroke-width="1.4" opacity="0.60"><path id="g86" d="M852.6 97l-0.1 6l0.2 6l0.3 6l-0.1 6l0.1 6l0.3 6l-0.3 6l0.6 6l0.3 6l0.1 6l-0.2 6l0.4 6l0.1 6l0.1 6l0.0 6l0.1 6l0.1 6l0.1 6l0.3 6l-0.0 6l-0.3 6l0.4 6l-0.2 6l-0.4 6l0.3 6l-0.4 6l-0.1 6l0.4 6l0.2 6l-0.1 6l-0.4 6l0.3 6l0.2 6l-0.4 6l-0.3 6l-0.2 6l0.5 6l0.2 6l-0.7 6l-0.2 6l-0.3 6l0.4 6l0.3 6l0.1 6l-0.0 6l-0.2 6l-0.7 6l-0.4 6l-0.3 6l-0.2 6l-0.2 6l0.1 6l0.1 6l0.2 6l0.2 6l-0.2 6l0.2 6l-0.6 6l0.1 6l0.3 6l-0.2 6l-0.3 6l0.0 6l0.1 6l0.1 6l0.1 6l0.4 6l0.2 6l-0.3 6l-0.2 6l0.2 6l0.1 6l0.5 6l0.1 6l0.2 6l-0.4 6l0.1 6l0.4 6l0.1 6l0.1 6l-0.2 6l0.4 6l-0.0 6l-0.1 6l0.2 6l0.1 6l0.2 6l0.2 6l0.3 6l-0.4 6l0.2 6l-0.4 6l-0.0 6l0.1 6l0.4 6l0.4 6l-0.4 6l0.3 6l-0.3 6l-0.4 6l-0.0 6"/></g>
<use href="#g86" x="2" stroke="#ffd096" stroke-width="1.8" opacity="0.42"/>
<g stroke="#bc7a40" stroke-width="1.5" opacity="0.64"><path id="g87" d="M863.9 97l-0.5 6l0.2 6l-0.4 6l0.3 6l0.1 6l-0.3 6l-0.3 6l-0.1 6l-0.0 6l0.5 6l0.2 6l-0.4 6l-0.2 6l0.4 6l0.2 6l0.2 6l0.4 6l0.3 6l-0.3 6l0.5 6l0.0 6l0.1 6l-0.1 6l0.1 6l0.1 6l0.2 6l0.3 6l0.0 6l0.1 6l-0.0 6l0.0 6l0.6 6l0.0 6l0.0 6l-0.2 6l0.5 6l-0.4 6l0.3 6l-0.4 6l-0.1 6l0.1 6l-0.0 6l0.1 6l-0.1 6l-0.0 6l-0.5 6l-0.2 6l-0.2 6l-0.0 6l-0.2 6l-0.4 6l-0.3 6l-0.3 6l-0.2 6l0.2 6l0.3 6l-0.2 6l-0.4 6l0.0 6l-0.1 6l-0.2 6l0.2 6l-0.3 6l-0.1 6l-0.2 6l0.0 6l0.5 6l-0.0 6l0.2 6l-0.0 6l-0.1 6l0.1 6l0.2 6l0.0 6l0.2 6l-0.1 6l0.3 6l0.0 6l0.4 6l0.3 6l0.5 6l0.3 6l0.2 6l-0.1 6l-0.1 6l0.4 6l-0.2 6l0.1 6l-0.1 6l0.5 6l0.2 6l0.2 6l-0.4 6l0.2 6l0.0 6l-0.1 6l-0.2 6l0.1 6l-0.2 6l0.1 6l-0.0 6"/></g>
<use href="#g87" x="2" stroke="#ffd096" stroke-width="2.0" opacity="0.45"/>
<g stroke="#bc7a40" stroke-width="1.5" opacity="0.40"><path id="g88" d="M869.5 97l-0.3 8l0.5 8l0.2 8l-0.1 8l0.5 8l-0.2 8l0.4 8l-0.1 8l0.0 8l0.6 8l0.1 8l0.6 8l0.1 8l-0.3 8l0.9 8l-0.1 8l0.1 8l0.2 8l0.2 8l0.8 8l-0.1 8l0.0 8l0.3 8l0.0 8l-0.0 8l0.4 8l0.3 8l-0.4 8l-0.1 8l0.0 8l0.3 8l0.1 8l-0.1 8l-1.0 8l-0.6 8l0.0 8l-0.0 8l-0.7 8l-0.5 8l0.4 8l-0.7 8l-0.2 8l-0.3 8l0.0 8l-0.6 8l-0.1 8l-0.1 8l-0.3 8l-0.2 8l0.1 8l0.0 8l-0.2 8l0.2 8l-0.4 8l0.0 8l0.3 8l0.0 8l-0.0 8l0.7 8l0.6 8l-0.4 8l-0.1 8l0.0 8l0.7 8l0.2 8l0.1 8l0.3 8l0.9 8l0.6 8l-0.1 8l0.5 8l-0.2 8l0.7 8l0.2 8l0.2 8l-0.1 8"/></g>
<use href="#g88" x="2" stroke="#ffd096" stroke-width="1.9" opacity="0.28"/>
<g stroke="#bc7a40" stroke-width="1.6" opacity="0.60"><path id="g89" d="M879.8 97l-0.5 8l-0.1 8l-0.4 8l-0.2 8l0.1 8l-0.7 8l-0.3 8l-0.0 8l0.0 8l-0.2 8l0.1 8l0.2 8l0.6 8l-0.2 8l0.7 8l0.3 8l0.5 8l-0.0 8l0.2 8l-0.4 8l-0.1 8l0.2 8l-0.3 8l-0.2 8l0.1 8l-0.5 8l-0.3 8l-0.4 8l-0.5 8l0.3 8l-0.3 8l-0.4 8l0.2 8l0.3 8l0.1 8l0.4 8l0.1 8l0.9 8l0.2 8l0.0 8l0.2 8l0.1 8l-0.2 8l0.1 8l-0.4 8l-0.0 8l-0.3 8l-0.4 8l-0.7 8l-0.1 8l0.1 8l-0.1 8l-0.6 8l-0.0 8l-0.1 8l0.6 8l0.7 8l0.4 8l0.3 8l0.2 8l0.4 8l0.1 8l0.2 8l-0.4 8l-0.1 8l-0.0 8l-0.6 8l-0.1 8l0.0 8l-0.8 8l-0.0 8l-0.1 8l0.0 8l0.1 8l-0.2 8l-0.0 8"/></g>
<use href="#g89" x="2" stroke="#ffd096" stroke-width="2.1" opacity="0.42"/>
<g stroke="#bc7a40" stroke-width="2.1" opacity="0.76"><path id="g90" d="M887.0 97l0.1 8l-0.7 8l0.2 8l0.2 8l0.1 8l-0.7 8l0.5 8l-0.5 8l-0.1 8l0.7 8l-0.2 8l-0.3 8l-0.2 8l0.2 8l0.6 8l0.0 8l-0.0 8l0.2 8l0.4 8l0.5 8l-0.4 8l0.6 8l-0.6 8l-0.0 8l0.0 8l0.3 8l0.6 8l0.4 8l-0.8 8l0.1 8l0.0 8l0.4 8l-0.4 8l0.7 8l-0.7 8l0.5 8l-0.3 8l-0.6 8l0.0 8l0.3 8l0.3 8l-0.5 8l-0.3 8l0.1 8l-0.2 8l-0.6 8l0.3 8l0.0 8l-0.1 8l-0.8 8l0.1 8l-0.4 8l0.2 8l-0.3 8l0.2 8l0.2 8l-0.4 8l0.4 8l-0.3 8l-0.4 8l0.4 8l0.6 8l-0.2 8l-0.2 8l0.3 8l0.2 8l-0.1 8l0.0 8l0.4 8l0.7 8l-0.4 8l0.1 8l0.8 8l-0.5 8l0.5 8l0.3 8"/></g>
<use href="#g90" x="2" stroke="#ffd096" stroke-width="2.8" opacity="0.53"/>
<g stroke="#bc7a40" stroke-width="1.7" opacity="0.59"><path id="g91" d="M895.3 97l-0.5 6l0.2 6l-0.1 6l0.4 6l-0.4 6l-0.1 6l0.5 6l-0.4 6l0.2 6l0.2 6l0.0 6l-0.0 6l0.4 6l-0.1 6l0.0 6l0.3 6l0.3 6l0.1 6l0.5 6l0.0 6l0.2 6l0.1 6l0.2 6l0.2 6l-0.2 6l-0.0 6l-0.2 6l-0.5 6l0.3 6l-0.2 6l-0.6 6l0.2 6l-0.2 6l0.2 6l-0.4 6l-0.2 6l0.2 6l0.0 6l-0.2 6l-0.4 6l-0.2 6l0.1 6l0.2 6l-0.2 6l0.1 6l-0.0 6l0.0 6l-0.2 6l0.0 6l0.1 6l0.7 6l-0.3 6l0.1 6l0.1 6l0.6 6l0.3 6l-0.1 6l-0.2 6l0.4 6l0.3 6l0.1 6l0.1 6l-0.1 6l-0.5 6l0.3 6l0.2 6l-0.6 6l-0.2 6l0.3 6l0.1 6l-0.2 6l-0.2 6l-0.7 6l0.1 6l-0.0 6l-0.6 6l0.2 6l-0.0 6l0.1 6l-0.0 6l-0.7 6l-0.3 6l0.4 6l-0.3 6l0.1 6l0.5 6l0.3 6l-0.1 6l0.0 6l0.3 6l0.5 6l0.0 6l-0.1 6l-0.1 6l-0.0 6l0.4 6l0.3 6l-0.2 6l0.3 6l0.1 6l-0.0 6"/></g>
<use href="#g91" x="2" stroke="#ffd096" stroke-width="2.2" opacity="0.41"/>
<g stroke="#bc7a40" stroke-width="2.2" opacity="0.43"><path id="g92" d="M899.1 97l-0.1 6l-0.2 6l-0.0 6l-0.9 6l0.2 6l-0.0 6l0.1 6l0.5 6l0.0 6l-0.7 6l-0.4 6l0.4 6l0.7 6l-0.3 6l-0.0 6l-0.3 6l0.5 6l-0.4 6l0.1 6l0.8 6l-0.6 6l0.2 6l-0.3 6l-0.1 6l0.9 6l0.9 6l0.1 6l0.4 6l-0.4 6l0.7 6l-0.9 6l-0.1 6l0.3 6l1.0 6l0.2 6l0.4 6l0.0 6l-0.3 6l0.0 6l0.4 6l0.1 6l-0.1 6l0.3 6l-1.2 6l-0.7 6l-0.2 6l-0.3 6l1.1 6l0.3 6l-0.1 6l-0.1 6l-0.2 6l-1.1 6l-0.1 6l0.5 6l-0.9 6l-0.1 6l0.4 6l-0.7 6l-0.6 6l0.5 6l-0.4 6l0.4 6l-0.2 6l0.0 6l0.1 6l-0.2 6l-0.3 6l-0.1 6l-0.6 6l0.1 6l0.7 6l0.6 6l-0.5 6l0.5 6l-0.5 6l-0.0 6l0.5 6l0.6 6l-0.6 6l0.2 6l0.1 6l0.9 6l0.1 6l0.6 6l-0.3 6l0.7 6l-0.1 6l0.1 6l-0.1 6l0.0 6l0.5 6l-0.6 6l0.4 6l0.3 6l0.0 6l0.1 6l-0.2 6l-0.1 6l0.5 6l-0.6 6"/></g>
<use href="#g92" x="2" stroke="#ffd096" stroke-width="2.8" opacity="0.30"/>
<g stroke="#bc7a40" stroke-width="1.1" opacity="0.48"><path id="g93" d="M907.7 97l0.2 8l-0.2 8l-0.7 8l-0.2 8l1.0 8l0.3 8l-0.9 8l0.4 8l-0.3 8l-1.3 8l0.1 8l-0.6 8l-0.3 8l0.5 8l-0.6 8l-0.0 8l-0.5 8l0.3 8l0.2 8l-0.1 8l0.0 8l0.6 8l-0.1 8l1.4 8l-0.2 8l0.2 8l-0.3 8l1.1 8l-0.3 8l-0.2 8l0.4 8l1.1 8l0.6 8l-0.4 8l-0.0 8l-0.8 8l0.8 8l0.1 8l-0.8 8l0.4 8l-1.0 8l-0.1 8l-0.5 8l0.1 8l-0.6 8l0.0 8l-0.5 8l-0.7 8l-0.3 8l0.8 8l-0.2 8l-0.0 8l0.2 8l-0.5 8l-0.3 8l0.2 8l0.7 8l0.4 8l-0.1 8l0.3 8l-0.3 8l1.1 8l0.2 8l0.5 8l-0.3 8l0.3 8l0.4 8l0.0 8l0.4 8l-0.5 8l0.6 8l-0.4 8l0.1 8l-0.6 8l0.1 8l0.7 8"/></g>
<use href="#g93" x="2" stroke="#ffd096" stroke-width="1.5" opacity="0.34"/>
<g stroke="#bc7a40" stroke-width="1.9" opacity="0.54"><path id="g94" d="M913.7 97l0.9 6l0.3 6l-0.4 6l0.6 6l-0.3 6l-0.3 6l0.7 6l-0.1 6l0.6 6l0.5 6l0.7 6l0.1 6l-0.4 6l-0.3 6l0.0 6l0.8 6l0.5 6l0.3 6l0.1 6l0.0 6l-0.8 6l0.4 6l-0.0 6l-0.4 6l0.1 6l-0.4 6l0.0 6l-0.5 6l-0.3 6l-0.2 6l0.6 6l-0.6 6l0.2 6l-0.1 6l-0.0 6l-1.0 6l0.1 6l0.5 6l-0.0 6l-1.2 6l0.0 6l-0.2 6l0.2 6l-0.0 6l-0.0 6l0.1 6l-0.0 6l0.1 6l-0.4 6l0.2 6l0.1 6l-0.8 6l-0.2 6l-0.5 6l0.7 6l0.0 6l0.7 6l-0.1 6l0.0 6l0.3 6l0.0 6l-0.1 6l0.5 6l0.7 6l0.0 6l0.1 6l0.1 6l-0.6 6l-0.1 6l0.5 6l0.6 6l0.6 6l-0.0 6l-0.3 6l0.3 6l-0.4 6l-0.2 6l0.8 6l-0.0 6l0.1 6l-0.1 6l0.6 6l0.0 6l-0.5 6l0.5 6l0.1 6l-0.2 6l-0.4 6l-0.4 6l-0.9 6l0.0 6l-0.6 6l0.6 6l0.1 6l-0.6 6l-0.5 6l0.4 6l-0.0 6l-0.1 6l-1.0 6l0.0 6"/></g>
<use href="#g94" x="2" stroke="#ffd096" stroke-width="2.5" opacity="0.38"/>
<g stroke="#bc7a40" stroke-width="1.1" opacity="0.75"><path id="g95" d="M921.2 97l0.7 6l-0.0 6l-0.0 6l-0.1 6l0.8 6l-0.2 6l0.8 6l-0.3 6l0.0 6l0.2 6l0.4 6l0.2 6l0.6 6l0.2 6l-0.1 6l0.1 6l0.4 6l-0.1 6l0.4 6l0.4 6l-0.4 6l-0.1 6l0.7 6l0.3 6l0.2 6l-0.4 6l-0.2 6l0.3 6l0.1 6l-0.1 6l-0.7 6l0.2 6l0.3 6l-0.8 6l-0.5 6l-0.5 6l0.2 6l-0.3 6l-0.1 6l-0.6 6l-0.4 6l0.2 6l-0.0 6l-0.4 6l-0.3 6l0.3 6l-0.1 6l-0.3 6l-0.2 6l-0.4 6l0.1 6l-0.5 6l-0.2 6l0.1 6l0.0 6l-0.3 6l0.2 6l0.2 6l-0.1 6l-0.4 6l0.3 6l-0.2 6l-0.3 6l-0.2 6l0.3 6l-0.1 6l0.7 6l0.4 6l0.2 6l0.6 6l0.1 6l-0.0 6l-0.2 6l-0.1 6l0.6 6l0.7 6l0.6 6l0.4 6l-0.5 6l-0.2 6l-0.0 6l0.4 6l0.5 6l0.3 6l-0.2 6l0.1 6l0.7 6l-0.3 6l0.6 6l-0.2 6l-0.3 6l0.6 6l0.2 6l0.1 6l0.0 6l-0.7 6l-0.2 6l-0.3 6l0.2 6l-0.3 6l-0.4 6"/></g>
<use href="#g95" x="2" stroke="#ffd096" stroke-width="1.5" opacity="0.53"/>
<g stroke="#bc7a40" stroke-width="1.4" opacity="0.52"><path id="g96" d="M925.1 97l0.5 8l0.0 8l0.6 8l0.6 8l0.5 8l0.3 8l-0.6 8l-0.0 8l0.6 8l0.3 8l0.5 8l-0.4 8l-0.8 8l-0.4 8l-0.4 8l0.4 8l-0.2 8l-0.7 8l0.7 8l-1.0 8l-0.2 8l0.3 8l-0.1 8l-0.8 8l0.6 8l-0.5 8l0.3 8l-0.4 8l0.2 8l0.6 8l-0.9 8l0.4 8l0.4 8l0.9 8l0.1 8l-0.3 8l-0.2 8l0.6 8l-0.1 8l0.3 8l1.1 8l-0.5 8l-0.2 8l0.5 8l-0.0 8l0.5 8l-0.7 8l0.2 8l-0.5 8l0.4 8l-0.1 8l-1.2 8l-0.5 8l-0.2 8l-0.2 8l-0.0 8l0.0 8l-0.8 8l0.3 8l0.4 8l-0.3 8l-0.3 8l-0.1 8l0.6 8l-0.3 8l0.1 8l0.3 8l0.9 8l0.7 8l0.2 8l-0.3 8l0.2 8l-0.2 8l1.2 8l-0.1 8l0.5 8"/></g>
<use href="#g96" x="2" stroke="#ffd096" stroke-width="1.8" opacity="0.37"/>
<g stroke="#bc7a40" stroke-width="1.3" opacity="0.54"><path id="g97" d="M932.0 97l0.5 8l0.3 8l-0.1 8l-0.4 8l-0.6 8l0.5 8l0.0 8l-0.9 8l0.2 8l-0.8 8l-0.4 8l0.6 8l0.2 8l-1.0 8l-0.3 8l-0.3 8l0.5 8l0.3 8l-0.2 8l-0.4 8l-0.6 8l-0.2 8l0.6 8l-0.2 8l-0.2 8l0.9 8l0.5 8l0.2 8l-0.2 8l0.2 8l-0.3 8l0.6 8l-0.4 8l0.4 8l0.5 8l-0.4 8l0.0 8l-0.1 8l0.3 8l0.5 8l-0.0 8l0.6 8l0.4 8l0.0 8l-0.5 8l-0.7 8l0.4 8l-0.1 8l-0.0 8l-0.1 8l0.3 8l-0.1 8l-0.1 8l-0.3 8l-0.6 8l-0.0 8l-0.7 8l0.1 8l-0.6 8l0.5 8l-0.3 8l-0.2 8l-0.6 8l-0.2 8l0.5 8l-0.3 8l-0.3 8l-0.1 8l0.4 8l-0.1 8l0.9 8l0.1 8l-0.2 8l-0.0 8l0.1 8l0.7 8"/></g>
<use href="#g97" x="2" stroke="#ffd096" stroke-width="1.7" opacity="0.38"/>
<g stroke="#bc7a40" stroke-width="2.2" opacity="0.46"><path id="g98" d="M934.6 97l0.4 8l-0.5 8l0.1 8l0.5 8l0.0 8l-0.0 8l0.7 8l0.1 8l-0.0 8l0.3 8l0.3 8l0.1 8l0.5 8l-0.1 8l0.2 8l0.9 8l0.2 8l-0.0 8l0.4 8l-0.1 8l0.3 8l-0.2 8l0.4 8l-0.1 8l-0.4 8l0.1 8l-0.1 8l-0.2 8l0.1 8l0.0 8l-0.1 8l-0.2 8l-0.3 8l-0.9 8l-0.6 8l-0.1 8l-0.4 8l-0.1 8l0.2 8l-0.0 8l-0.3 8l-0.7 8l-0.5 8l-0.3 8l0.5 8l-0.5 8l-0.1 8l0.3 8l0.1 8l0.3 8l0.0 8l0.1 8l-0.1 8l0.2 8l-0.0 8l-0.2 8l0.6 8l-0.2 8l0.1 8l0.4 8l0.2 8l0.8 8l0.1 8l0.4 8l0.0 8l-0.0 8l0.2 8l0.7 8l0.2 8l0.0 8l0.1 8l-0.2 8l0.0 8l0.2 8l0.2 8l-0.4 8"/></g>
<use href="#g98" x="2" stroke="#ffd096" stroke-width="2.8" opacity="0.32"/>
<g stroke="#bc7a40" stroke-width="1.8" opacity="0.46"><path id="g99" d="M942.5 97l0.5 8l-0.2 8l0.2 8l0.3 8l0.1 8l0.1 8l-0.7 8l-0.8 8l-0.6 8l-1.1 8l-0.8 8l0.9 8l0.5 8l0.1 8l-0.9 8l0.4 8l-0.3 8l0.2 8l1.1 8l1.0 8l-0.8 8l1.0 8l0.5 8l0.3 8l-0.7 8l-0.1 8l0.5 8l-0.8 8l-0.6 8l-0.0 8l-0.7 8l-0.4 8l-0.6 8l-0.4 8l-0.5 8l0.2 8l-0.0 8l-0.3 8l0.0 8l0.5 8l-0.1 8l0.5 8l0.1 8l1.4 8l-0.1 8l0.6 8l-0.1 8l0.9 8l0.9 8l-0.0 8l-1.1 8l-0.5 8l-0.5 8l0.7 8l-1.2 8l0.3 8l-0.0 8l-0.0 8l-0.8 8l-0.4 8l-0.3 8l0.4 8l0.1 8l0.5 8l0.0 8l0.9 8l0.3 8l-0.2 8l0.3 8l-0.0 8l1.2 8l-0.8 8l0.1 8l0.0 8l0.2 8l-0.9 8"/></g>
<use href="#g99" x="2" stroke="#ffd096" stroke-width="2.4" opacity="0.32"/>
<g stroke="#bc7a40" stroke-width="1.7" opacity="0.69"><path id="g100" d="M947.9 97l0.3 6l-0.9 6l-0.2 6l-0.7 6l-0.1 6l-0.4 6l-0.1 6l0.3 6l-0.2 6l0.9 6l-0.6 6l1.1 6l-0.4 6l0.9 6l0.7 6l0.7 6l-0.2 6l-0.5 6l-0.1 6l0.8 6l-0.8 6l-0.3 6l-0.4 6l0.8 6l-0.1 6l0.6 6l-0.8 6l0.0 6l-0.8 6l0.5 6l-0.6 6l0.3 6l-0.1 6l-0.4 6l-1.0 6l0.4 6l-0.6 6l0.5 6l0.7 6l-0.7 6l1.1 6l0.1 6l-0.2 6l0.6 6l0.1 6l-0.5 6l0.8 6l1.0 6l0.4 6l-0.5 6l-1.0 6l0.3 6l-0.8 6l-0.6 6l0.7 6l0.3 6l-0.9 6l-0.1 6l0.5 6l-0.2 6l-1.2 6l-0.1 6l0.4 6l-0.8 6l0.1 6l-0.6 6l0.7 6l0.5 6l-0.2 6l0.0 6l0.9 6l0.1 6l1.1 6l0.3 6l-1.0 6l1.1 6l-0.2 6l-0.2 6l0.5 6l-0.0 6l0.2 6l-0.5 6l0.3 6l0.1 6l-1.0 6l-0.5 6l-0.9 6l-0.6 6l-0.4 6l0.4 6l0.5 6l-0.7 6l0.6 6l-0.5 6l0.8 6l0.2 6l-0.8 6l1.3 6l0.1 6l-0.6 6l-0.3 6"/></g>
<use href="#g100" x="2" stroke="#ffd096" stroke-width="2.2" opacity="0.49"/>
<g stroke="#bc7a40" stroke-width="1.8" opacity="0.76"><path id="g101" d="M959.2 97l-0.1 8l0.0 8l0.3 8l-0.2 8l-0.4 8l-0.0 8l-0.3 8l0.2 8l-0.3 8l0.4 8l0.2 8l-0.0 8l0.4 8l-0.3 8l0.3 8l-0.5 8l0.1 8l-0.1 8l-0.2 8l0.3 8l-0.1 8l0.4 8l-0.3 8l-0.1 8l0.2 8l0.3 8l0.2 8l-0.2 8l0.6 8l-0.2 8l0.1 8l0.2 8l-0.2 8l0.2 8l-0.4 8l-0.1 8l0.4 8l-0.2 8l0.4 8l-0.2 8l-0.2 8l-0.0 8l0.1 8l-0.1 8l-0.7 8l0.1 8l0.3 8l0.0 8l-0.6 8l-0.3 8l0.5 8l-0.2 8l0.2 8l0.2 8l-0.6 8l-0.4 8l-0.0 8l0.6 8l-0.2 8l-0.2 8l-0.3 8l0.4 8l0.4 8l-0.6 8l0.3 8l-0.4 8l0.6 8l-0.3 8l0.3 8l-0.2 8l0.2 8l0.3 8l-0.2 8l0.4 8l0.1 8l-0.3 8"/></g>
<use href="#g101" x="2" stroke="#ffd096" stroke-width="2.3" opacity="0.53"/>
<g stroke="#bc7a40" stroke-width="1.9" opacity="0.52"><path id="g102" d="M971.1 97l-0.0 8l0.4 8l-0.5 8l0.2 8l-0.2 8l0.6 8l-0.2 8l0.5 8l-0.2 8l0.4 8l-0.2 8l0.6 8l0.1 8l-0.5 8l-0.3 8l-0.5 8l0.4 8l-0.1 8l-0.2 8l0.3 8l-0.2 8l0.1 8l0.3 8l0.3 8l0.1 8l-0.2 8l-0.5 8l-0.7 8l0.0 8l0.3 8l-0.2 8l0.2 8l0.3 8l0.1 8l-0.9 8l-0.0 8l0.5 8l-0.8 8l-0.4 8l0.5 8l0.2 8l-0.2 8l0.2 8l-0.0 8l0.5 8l-0.2 8l0.5 8l-0.4 8l-0.3 8l0.3 8l-0.1 8l0.8 8l-0.3 8l0.5 8l-0.1 8l-0.3 8l0.3 8l0.3 8l-0.2 8l0.2 8l0.1 8l-0.3 8l0.1 8l0.0 8l-0.7 8l0.6 8l-0.3 8l-0.6 8l0.0 8l0.1 8l0.2 8l-0.6 8l-0.2 8l-0.2 8l0.7 8l-0.2 8"/></g>
<use href="#g102" x="2" stroke="#ffd096" stroke-width="2.4" opacity="0.36"/>
<g stroke="#bc7a40" stroke-width="1.7" opacity="0.45"><path id="g103" d="M977.1 97l0.4 8l-0.3 8l0.3 8l-0.1 8l0.3 8l0.3 8l-0.7 8l-0.2 8l0.5 8l0.0 8l0.0 8l-0.3 8l0.5 8l1.0 8l-0.2 8l-0.3 8l0.1 8l0.4 8l-0.5 8l-0.1 8l0.4 8l0.0 8l0.4 8l-0.5 8l-0.4 8l0.8 8l0.1 8l-0.1 8l-0.2 8l-0.7 8l-0.5 8l0.1 8l0.2 8l-0.2 8l-0.1 8l-0.7 8l0.7 8l-0.6 8l-0.1 8l0.4 8l0.4 8l-0.5 8l-0.2 8l0.4 8l-0.2 8l-0.5 8l-0.1 8l0.1 8l-0.3 8l-0.0 8l1.1 8l0.5 8l0.3 8l-0.4 8l-0.1 8l0.8 8l-0.6 8l0.2 8l0.1 8l0.6 8l0.2 8l0.5 8l0.2 8l-0.3 8l0.2 8l-0.3 8l-0.7 8l0.0 8l-0.3 8l0.6 8l0.1 8l-0.9 8l0.2 8l-0.0 8l0.1 8l-0.8 8"/></g>
<use href="#g103" x="2" stroke="#ffd096" stroke-width="2.3" opacity="0.31"/>
<g stroke="#bc7a40" stroke-width="1.5" opacity="0.47"><path id="g104" d="M985.4 97l-0.6 6l0.2 6l-0.6 6l0.1 6l-0.5 6l0.5 6l0.3 6l-0.1 6l-0.3 6l-0.2 6l0.2 6l-0.6 6l0.0 6l0.2 6l-0.2 6l0.3 6l0.1 6l-0.1 6l0.5 6l0.2 6l-0.1 6l0.4 6l-0.0 6l0.4 6l0.0 6l0.5 6l0.2 6l-0.5 6l0.1 6l0.5 6l-0.1 6l0.4 6l0.3 6l0.2 6l-0.1 6l-0.4 6l-0.2 6l-0.6 6l-0.2 6l-0.2 6l0.4 6l0.1 6l-0.2 6l-0.1 6l-0.5 6l-0.1 6l-0.4 6l-0.6 6l0.1 6l0.4 6l-0.2 6l0.3 6l-0.4 6l-0.3 6l-0.2 6l0.2 6l0.0 6l-0.1 6l0.2 6l0.8 6l0.3 6l-0.1 6l-0.2 6l0.3 6l0.1 6l0.4 6l-0.1 6l0.4 6l0.4 6l-0.2 6l-0.1 6l0.3 6l0.2 6l0.4 6l0.1 6l-0.3 6l-0.1 6l0.2 6l-0.2 6l-0.6 6l-0.1 6l-0.4 6l0.3 6l0.2 6l-0.2 6l-0.8 6l-0.1 6l-0.5 6l0.3 6l0.2 6l-0.5 6l0.2 6l-0.6 6l-0.2 6l0.7 6l-0.4 6l0.2 6l0.4 6l0.1 6l-0.2 6l-0.1 6"/></g>
<use href="#g104" x="2" stroke="#ffd096" stroke-width="2.0" opacity="0.33"/>
<g stroke="#bc7a40" stroke-width="1.7" opacity="0.48"><path id="g105" d="M994.7 97l0.3 6l0.6 6l-0.3 6l0.7 6l0.4 6l-0.7 6l0.5 6l-0.3 6l0.5 6l0.1 6l0.6 6l-0.1 6l-0.5 6l0.4 6l0.3 6l0.5 6l0.3 6l-0.4 6l0.2 6l-0.7 6l0.2 6l-0.1 6l-0.3 6l0.3 6l0.2 6l0.5 6l0.1 6l-0.4 6l0.1 6l-0.3 6l-0.6 6l-0.4 6l-0.2 6l0.2 6l-0.2 6l-0.4 6l0.1 6l0.3 6l-0.3 6l-0.5 6l0.2 6l-0.7 6l-0.3 6l0.7 6l-0.1 6l-0.8 6l0.5 6l-0.3 6l-0.0 6l-0.4 6l0.3 6l-0.1 6l-0.5 6l0.3 6l-0.3 6l0.7 6l0.4 6l-0.5 6l0.5 6l-0.0 6l0.0 6l0.4 6l-0.4 6l0.6 6l-0.2 6l-0.4 6l0.6 6l-0.2 6l0.2 6l0.2 6l0.4 6l-0.3 6l0.7 6l-0.1 6l0.3 6l0.3 6l-0.2 6l0.0 6l0.4 6l-0.3 6l0.1 6l0.7 6l-0.1 6l0.2 6l-0.4 6l-0.1 6l0.1 6l0.1 6l-0.3 6l-0.2 6l0.2 6l-0.3 6l0.5 6l0.2 6l-0.1 6l-0.7 6l-0.2 6l0.2 6l-0.1 6l-0.3 6l-0.7 6"/></g>
<use href="#g105" x="2" stroke="#ffd096" stroke-width="2.3" opacity="0.34"/>
<g stroke="#bc7a40" stroke-width="1.9" opacity="0.79"><path id="g106" d="M1001.2 97l0.1 8l0.1 8l-0.6 8l-0.0 8l0.3 8l-1.1 8l-0.7 8l0.1 8l-0.1 8l0.2 8l0.5 8l-0.1 8l-1.1 8l-0.5 8l-0.3 8l0.5 8l0.1 8l0.5 8l0.6 8l-0.3 8l0.1 8l1.0 8l0.3 8l0.4 8l-0.7 8l0.5 8l-0.6 8l0.9 8l-0.3 8l-0.4 8l-0.5 8l0.9 8l0.2 8l0.5 8l-0.8 8l-0.1 8l-0.1 8l-0.1 8l0.1 8l-1.1 8l0.5 8l-1.0 8l-0.2 8l-0.3 8l0.7 8l0.1 8l-0.2 8l0.5 8l-0.8 8l-0.4 8l0.6 8l-0.3 8l1.0 8l0.7 8l0.1 8l-0.9 8l0.2 8l-0.4 8l0.9 8l-0.2 8l-0.3 8l1.0 8l0.5 8l-0.5 8l-0.6 8l-0.4 8l0.2 8l-0.3 8l0.0 8l0.3 8l0.5 8l-0.7 8l-0.5 8l-0.3 8l0.7 8l0.0 8"/></g>
<use href="#g106" x="2" stroke="#ffd096" stroke-width="2.5" opacity="0.55"/>
</g>
</g>
<g clip-path="url(#cB)"><g filter="url(#b2)">
<ellipse cx="688" cy="130" rx="22" ry="32" fill="#f8c48a" opacity="0.35"/>
<path d="M670 238 L718 242 L698 315z" fill="#a8602e" opacity="0.18"/>
</g></g>
<g clip-path="url(#cA)"><g filter="url(#b2)">
<path d="M440 160 L480 170 L470 300 L430 300z" fill="#f0b078" opacity="0.2"/>
</g></g>
<g filter="url(#fb)">
<ellipse cx="682" cy="173" rx="5" ry="3.5" fill="#9a5424" opacity="0.35"/>
<ellipse cx="697" cy="256" rx="5" ry="6" fill="#a05a2a" opacity="0.22"/>
</g>
<g filter="url(#fb)" fill="none">
<g clip-path="url(#cA)">
<path d="M455.2 100.0l0.2 3.3l-0.1 4.3l-0.7 5.1l-0.3 5.7l0.1 6.1l0.0 6.2l0.2 6.2l0.6 5.0l0.6 5.4l0.9 5.7l0.5 5.9l0.9 5.9l-0.3 5.9l1.0 5.5l-0.0 5.2l-0.1 4.7l0.8 6.8l0.1 5.6l-1.1 4.9l0.0 5.0l-0.7 5.6l-1.9 5.1l-0.7 5.5l-1.9 5.4l-1.4 5.7l-2.0 5.6l-1.4 5.7l-0.7 5.3l-1.7 5.4l-0.8 5.8l-1.4 5.5l-1.4 5.3l-1.7 4.7l-1.2 4.2l-2.2 7.2l-1.9 5.2l-2.0 5.2l-5.9 5.5l-5.2 2.7" stroke="#fcc890" stroke-width="1.5" opacity="0.19" transform="translate(2 0.6)"/><path d="M455.2 100.0l0.2 3.3l-0.1 4.3l-0.7 5.1l-0.3 5.7l0.1 6.1l0.0 6.2l0.2 6.2l0.6 5.0l0.6 5.4l0.9 5.7l0.5 5.9l0.9 5.9l-0.3 5.9l1.0 5.5l-0.0 5.2l-0.1 4.7l0.8 6.8l0.1 5.6l-1.1 4.9l0.0 5.0l-0.7 5.6l-1.9 5.1l-0.7 5.5l-1.9 5.4l-1.4 5.7l-2.0 5.6l-1.4 5.7l-0.7 5.3l-1.7 5.4l-0.8 5.8l-1.4 5.5l-1.4 5.3l-1.7 4.7l-1.2 4.2l-2.2 7.2l-1.9 5.2l-2.0 5.2l-5.9 5.5l-5.2 2.7" stroke="#98521e" stroke-width="1.4" opacity="0.32"/>
<path d="M451.9 100.0l-0.2 3.2l-0.4 4.3l0.5 5.1l0.3 5.7l0.3 6.1l-0.7 6.3l0.3 6.2l-0.1 5.1l0.4 5.5l0.7 5.7l1.2 5.8l0.1 6.0l0.0 5.8l0.6 5.5l0.8 5.1l-0.2 4.6l0.2 6.7l-0.2 5.4l-0.2 4.7l-1.1 4.7l-0.4 5.5l-0.7 5.2l-1.1 5.4l-1.6 5.4l-1.4 5.6l-2.2 5.5l-1.6 5.7l-1.4 5.1l-0.6 5.7l-0.8 5.8l-1.8 5.4l-1.9 5.1l-1.2 4.8l-1.5 4.0l-1.3 7.3l-1.9 4.8l-2.3 3.9l-5.4 5.0l-4.7 2.8" stroke="#fcc890" stroke-width="2.2" opacity="0.43" transform="translate(2 0.6)"/><path d="M451.9 100.0l-0.2 3.2l-0.4 4.3l0.5 5.1l0.3 5.7l0.3 6.1l-0.7 6.3l0.3 6.2l-0.1 5.1l0.4 5.5l0.7 5.7l1.2 5.8l0.1 6.0l0.0 5.8l0.6 5.5l0.8 5.1l-0.2 4.6l0.2 6.7l-0.2 5.4l-0.2 4.7l-1.1 4.7l-0.4 5.5l-0.7 5.2l-1.1 5.4l-1.6 5.4l-1.4 5.6l-2.2 5.5l-1.6 5.7l-1.4 5.1l-0.6 5.7l-0.8 5.8l-1.8 5.4l-1.9 5.1l-1.2 4.8l-1.5 4.0l-1.3 7.3l-1.9 4.8l-2.3 3.9l-5.4 5.0l-4.7 2.8" stroke="#98521e" stroke-width="2.0" opacity="0.72"/>
<path d="M448.3 100.0l-0.3 3.2l0.1 4.3l0.3 5.1l-0.7 5.7l0.4 6.2l0.7 6.3l-0.2 6.3l0.7 5.1l0.3 5.5l0.2 5.8l1.0 5.9l-0.1 6.0l1.0 5.7l0.3 5.5l0.8 5.0l-0.5 4.5l0.4 6.6l-0.4 5.2l-0.9 4.5l-0.2 4.6l-0.5 5.4l-0.7 5.1l-1.9 5.1l-1.7 5.4l-1.1 5.7l-1.3 5.8l-1.4 5.8l-1.2 5.2l-1.3 5.5l-1.8 5.5l-1.4 5.5l-0.9 5.4l-1.5 4.7l-0.8 4.2l-2.0 7.0l-2.0 4.4l-2.0 2.9l-4.7 4.7l-4.5 2.5" stroke="#fcc890" stroke-width="1.5" opacity="0.17" transform="translate(2 0.6)"/><path d="M448.3 100.0l-0.3 3.2l0.1 4.3l0.3 5.1l-0.7 5.7l0.4 6.2l0.7 6.3l-0.2 6.3l0.7 5.1l0.3 5.5l0.2 5.8l1.0 5.9l-0.1 6.0l1.0 5.7l0.3 5.5l0.8 5.0l-0.5 4.5l0.4 6.6l-0.4 5.2l-0.9 4.5l-0.2 4.6l-0.5 5.4l-0.7 5.1l-1.9 5.1l-1.7 5.4l-1.1 5.7l-1.3 5.8l-1.4 5.8l-1.2 5.2l-1.3 5.5l-1.8 5.5l-1.4 5.5l-0.9 5.4l-1.5 4.7l-0.8 4.2l-2.0 7.0l-2.0 4.4l-2.0 2.9l-4.7 4.7l-4.5 2.5" stroke="#98521e" stroke-width="1.4" opacity="0.29"/>
</g>
<g clip-path="url(#cA)">
<path d="M465.7 99.9l-0.7 2.9l-0.2 3.7l1.0 4.3l-0.5 4.8l0.2 5.2l0.8 5.5l0.6 5.7l0.1 5.8l-0.1 5.8l-0.0 5.7l-0.2 5.4l0.9 5.0l0.0 5.3l-0.5 5.4l0.1 5.4l1.0 5.4l0.3 5.3l0.4 5.3l-0.4 5.2l0.2 5.0l0.1 4.8l0.8 4.5l0.2 4.3l0.8 6.1l0.8 5.5l1.3 5.0l0.8 4.9l0.7 4.9l-0.2 5.0l0.2 5.2l-1.4 6.0l-0.6 6.2l-2.0 5.8l-1.7 5.8l-2.0 5.4l-2.7 4.8l-2.9 5.5l-2.0 5.7l-2.3 5.5l-3.1 5.0l-3.6 4.7l-4.7 4.2l-5.7 3.2l-5.2 3.3l-4.7 2.2l-2.9 2.1" stroke="#fcc890" stroke-width="1.5" opacity="0.16" transform="translate(2 0.6)"/><path d="M465.7 99.9l-0.7 2.9l-0.2 3.7l1.0 4.3l-0.5 4.8l0.2 5.2l0.8 5.5l0.6 5.7l0.1 5.8l-0.1 5.8l-0.0 5.7l-0.2 5.4l0.9 5.0l0.0 5.3l-0.5 5.4l0.1 5.4l1.0 5.4l0.3 5.3l0.4 5.3l-0.4 5.2l0.2 5.0l0.1 4.8l0.8 4.5l0.2 4.3l0.8 6.1l0.8 5.5l1.3 5.0l0.8 4.9l0.7 4.9l-0.2 5.0l0.2 5.2l-1.4 6.0l-0.6 6.2l-2.0 5.8l-1.7 5.8l-2.0 5.4l-2.7 4.8l-2.9 5.5l-2.0 5.7l-2.3 5.5l-3.1 5.0l-3.6 4.7l-4.7 4.2l-5.7 3.2l-5.2 3.3l-4.7 2.2l-2.9 2.1" stroke="#98521e" stroke-width="1.4" opacity="0.26"/>
<path d="M461.8 100.0l-0.1 2.9l-0.2 3.7l-0.0 4.3l0.7 4.8l-0.2 5.3l0.0 5.6l0.4 5.7l0.2 5.8l0.3 5.8l0.3 5.7l0.7 5.4l-0.2 5.1l0.8 5.3l-0.1 5.4l-0.2 5.4l-0.1 5.4l0.2 5.4l0.9 5.2l0.9 5.1l-0.4 5.0l0.4 4.8l0.2 4.6l-0.1 4.4l0.9 6.2l0.7 5.6l1.3 5.1l0.7 4.9l0.9 4.6l0.5 4.7l-0.5 4.8l-0.8 5.7l-1.0 5.8l-1.8 5.6l-2.1 5.5l-2.3 5.2l-1.4 5.3l-2.8 5.5l-2.6 5.3l-2.2 5.3l-3.1 4.6l-3.6 4.1l-4.5 3.6l-4.9 3.7l-5.1 3.2l-4.7 2.2l-2.8 2.5" stroke="#fcc890" stroke-width="2.2" opacity="0.35" transform="translate(2 0.6)"/><path d="M461.8 100.0l-0.1 2.9l-0.2 3.7l-0.0 4.3l0.7 4.8l-0.2 5.3l0.0 5.6l0.4 5.7l0.2 5.8l0.3 5.8l0.3 5.7l0.7 5.4l-0.2 5.1l0.8 5.3l-0.1 5.4l-0.2 5.4l-0.1 5.4l0.2 5.4l0.9 5.2l0.9 5.1l-0.4 5.0l0.4 4.8l0.2 4.6l-0.1 4.4l0.9 6.2l0.7 5.6l1.3 5.1l0.7 4.9l0.9 4.6l0.5 4.7l-0.5 4.8l-0.8 5.7l-1.0 5.8l-1.8 5.6l-2.1 5.5l-2.3 5.2l-1.4 5.3l-2.8 5.5l-2.6 5.3l-2.2 5.3l-3.1 4.6l-3.6 4.1l-4.5 3.6l-4.9 3.7l-5.1 3.2l-4.7 2.2l-2.8 2.5" stroke="#98521e" stroke-width="2.0" opacity="0.59"/>
<path d="M458.0 100.1l0.1 2.9l0.9 3.6l0.0 4.3l0.7 4.8l0.2 5.2l-0.2 5.6l0.1 5.8l0.3 5.8l0.1 5.8l0.6 5.7l0.5 5.4l-0.3 5.1l-0.1 5.3l0.5 5.4l0.2 5.4l-0.4 5.4l1.0 5.3l0.1 5.3l-0.4 5.2l0.7 5.0l-0.1 4.9l1.0 4.6l0.2 4.4l0.5 6.4l0.9 5.7l0.4 5.3l1.2 4.7l0.8 4.5l0.4 4.4l-0.3 4.5l-0.4 5.5l-1.2 5.6l-1.6 5.5l-2.7 5.1l-2.3 5.1l-1.5 5.2l-2.7 5.5l-2.3 5.3l-2.5 4.9l-3.1 4.2l-3.3 3.7l-3.6 3.8l-4.5 3.8l-4.8 3.4l-4.9 1.8l-3.2 1.8" stroke="#fcc890" stroke-width="1.5" opacity="0.14" transform="translate(2 0.6)"/><path d="M458.0 100.1l0.1 2.9l0.9 3.6l0.0 4.3l0.7 4.8l0.2 5.2l-0.2 5.6l0.1 5.8l0.3 5.8l0.1 5.8l0.6 5.7l0.5 5.4l-0.3 5.1l-0.1 5.3l0.5 5.4l0.2 5.4l-0.4 5.4l1.0 5.3l0.1 5.3l-0.4 5.2l0.7 5.0l-0.1 4.9l1.0 4.6l0.2 4.4l0.5 6.4l0.9 5.7l0.4 5.3l1.2 4.7l0.8 4.5l0.4 4.4l-0.3 4.5l-0.4 5.5l-1.2 5.6l-1.6 5.5l-2.7 5.1l-2.3 5.1l-1.5 5.2l-2.7 5.5l-2.3 5.3l-2.5 4.9l-3.1 4.2l-3.3 3.7l-3.6 3.8l-4.5 3.8l-4.8 3.4l-4.9 1.8l-3.2 1.8" stroke="#98521e" stroke-width="1.4" opacity="0.23"/>
</g>
<g clip-path="url(#cA)">
<path d="M500.6 100.0l0.4 2.8l-0.2 3.3l0.0 3.9l-0.2 4.8l0.3 5.9l-0.1 7.3l-0.3 8.8l-0.1 3.8l-0.3 4.2l0.0 4.5l-0.1 4.8l0.7 5.1l-0.3 5.3l0.7 5.5l-0.2 5.7l0.8 5.7l-0.2 5.8l-0.0 5.9l0.1 5.8l0.3 5.8l-0.1 5.7l0.6 5.5l0.3 5.4l0.6 5.1l0.4 4.9l-0.3 4.6l0.4 6.4l-0.0 6.3l0.0 6.2l-0.6 6.1l0.1 5.9l0.5 5.7l-0.6 5.5l-0.3 5.3l-0.6 5.0l0.1 4.8l-0.1 4.6l-0.7 4.3l-1.9 3.9l-3.9 6.5l-4.1 5.6l-5.1 3.9l-5.4 2.6l-5.2 1.8l-5.1 1.3l-6.1 2.0l-6.2 2.1l-6.2 1.4l-5.9 0.3l-5.0 1.4l-5.9 2.1l-5.7 1.7l-4.8 1.5l-3.6 0.4" stroke="#fcc890" stroke-width="1.8" opacity="0.16" transform="translate(2 0.6)"/><path d="M500.6 100.0l0.4 2.8l-0.2 3.3l0.0 3.9l-0.2 4.8l0.3 5.9l-0.1 7.3l-0.3 8.8l-0.1 3.8l-0.3 4.2l0.0 4.5l-0.1 4.8l0.7 5.1l-0.3 5.3l0.7 5.5l-0.2 5.7l0.8 5.7l-0.2 5.8l-0.0 5.9l0.1 5.8l0.3 5.8l-0.1 5.7l0.6 5.5l0.3 5.4l0.6 5.1l0.4 4.9l-0.3 4.6l0.4 6.4l-0.0 6.3l0.0 6.2l-0.6 6.1l0.1 5.9l0.5 5.7l-0.6 5.5l-0.3 5.3l-0.6 5.0l0.1 4.8l-0.1 4.6l-0.7 4.3l-1.9 3.9l-3.9 6.5l-4.1 5.6l-5.1 3.9l-5.4 2.6l-5.2 1.8l-5.1 1.3l-6.1 2.0l-6.2 2.1l-6.2 1.4l-5.9 0.3l-5.0 1.4l-5.9 2.1l-5.7 1.7l-4.8 1.5l-3.6 0.4" stroke="#98521e" stroke-width="1.7" opacity="0.26"/>
<path d="M497.4 100.0l-0.1 2.8l-0.8 3.3l0.5 4.0l0.4 4.8l-0.9 6.0l0.3 7.3l0.7 8.9l-0.4 3.8l0.3 4.2l0.5 4.5l0.1 4.8l-0.4 5.1l0.1 5.3l0.7 5.5l0.5 5.6l-0.3 5.8l0.6 5.8l-0.5 5.9l0.1 5.8l0.3 5.8l0.1 5.7l0.5 5.5l0.2 5.4l0.2 5.1l-0.0 4.9l-0.6 4.6l0.7 6.4l0.0 6.3l0.5 6.2l-0.4 6.1l-0.4 5.9l0.5 5.7l-0.0 5.5l-0.2 5.2l-0.7 4.9l-0.5 4.6l-0.6 4.3l-0.4 4.1l-1.3 3.5l-2.8 6.5l-3.9 4.7l-4.6 3.5l-5.4 1.6l-5.1 2.1l-5.0 1.7l-5.7 2.7l-6.1 1.4l-6.2 0.5l-5.8 0.9l-5.3 1.0l-6.1 1.7l-5.7 1.8l-4.6 2.3l-3.5 0.6" stroke="#fcc890" stroke-width="2.6" opacity="0.35" transform="translate(2 0.6)"/><path d="M497.4 100.0l-0.1 2.8l-0.8 3.3l0.5 4.0l0.4 4.8l-0.9 6.0l0.3 7.3l0.7 8.9l-0.4 3.8l0.3 4.2l0.5 4.5l0.1 4.8l-0.4 5.1l0.1 5.3l0.7 5.5l0.5 5.6l-0.3 5.8l0.6 5.8l-0.5 5.9l0.1 5.8l0.3 5.8l0.1 5.7l0.5 5.5l0.2 5.4l0.2 5.1l-0.0 4.9l-0.6 4.6l0.7 6.4l0.0 6.3l0.5 6.2l-0.4 6.1l-0.4 5.9l0.5 5.7l-0.0 5.5l-0.2 5.2l-0.7 4.9l-0.5 4.6l-0.6 4.3l-0.4 4.1l-1.3 3.5l-2.8 6.5l-3.9 4.7l-4.6 3.5l-5.4 1.6l-5.1 2.1l-5.0 1.7l-5.7 2.7l-6.1 1.4l-6.2 0.5l-5.8 0.9l-5.3 1.0l-6.1 1.7l-5.7 1.8l-4.6 2.3l-3.5 0.6" stroke="#98521e" stroke-width="2.4" opacity="0.59"/>
<path d="M493.1 100.0l-0.1 2.8l-0.2 3.2l0.3 4.0l0.4 4.9l-0.1 6.0l-0.5 7.3l0.6 8.9l0.4 3.8l-0.0 4.2l-0.3 4.5l0.2 4.8l0.1 5.1l1.0 5.3l-0.4 5.5l0.6 5.6l-0.1 5.8l-0.0 5.8l0.1 5.8l0.9 5.8l-0.3 5.8l0.9 5.6l-0.5 5.5l0.7 5.3l-0.4 5.1l0.3 4.9l0.4 4.6l-0.2 6.4l-0.5 6.4l0.4 6.2l0.1 6.1l-0.3 5.9l-0.3 5.7l0.4 5.4l0.1 5.2l-0.4 4.9l-0.2 4.5l-0.5 4.2l-1.0 3.7l-0.3 3.3l-2.7 5.9l-3.7 3.7l-4.3 2.5l-4.5 2.6l-5.2 1.6l-5.1 1.5l-5.6 2.0l-5.5 2.2l-5.9 1.2l-6.0 0.2l-5.5 0.9l-6.1 2.4l-5.7 1.9l-4.9 1.3l-3.3 1.3" stroke="#fcc890" stroke-width="1.8" opacity="0.14" transform="translate(2 0.6)"/><path d="M493.1 100.0l-0.1 2.8l-0.2 3.2l0.3 4.0l0.4 4.9l-0.1 6.0l-0.5 7.3l0.6 8.9l0.4 3.8l-0.0 4.2l-0.3 4.5l0.2 4.8l0.1 5.1l1.0 5.3l-0.4 5.5l0.6 5.6l-0.1 5.8l-0.0 5.8l0.1 5.8l0.9 5.8l-0.3 5.8l0.9 5.6l-0.5 5.5l0.7 5.3l-0.4 5.1l0.3 4.9l0.4 4.6l-0.2 6.4l-0.5 6.4l0.4 6.2l0.1 6.1l-0.3 5.9l-0.3 5.7l0.4 5.4l0.1 5.2l-0.4 4.9l-0.2 4.5l-0.5 4.2l-1.0 3.7l-0.3 3.3l-2.7 5.9l-3.7 3.7l-4.3 2.5l-4.5 2.6l-5.2 1.6l-5.1 1.5l-5.6 2.0l-5.5 2.2l-5.9 1.2l-6.0 0.2l-5.5 0.9l-6.1 2.4l-5.7 1.9l-4.9 1.3l-3.3 1.3" stroke="#98521e" stroke-width="1.7" opacity="0.23"/>
</g>
<g clip-path="url(#cA)">
<path d="M442.8 149.7l0.5 3.0l0.3 3.9l0.1 4.7l1.4 5.2l0.5 5.6l0.7 5.8l0.1 5.9l0.1 5.8l0.3 5.4l0.8 4.9l-0.1 5.7l0.1 5.6l-0.2 5.5l-1.1 5.3l-1.0 5.0l-1.1 4.8l-0.1 4.6l-1.5 4.1l-2.4 7.2l-2.6 6.2l-2.8 5.1l-2.4 4.7l-5.7 5.4l-4.0 3.0" stroke="#fcc890" stroke-width="1.5" opacity="0.14" transform="translate(2 0.6)"/><path d="M442.8 149.7l0.5 3.0l0.3 3.9l0.1 4.7l1.4 5.2l0.5 5.6l0.7 5.8l0.1 5.9l0.1 5.8l0.3 5.4l0.8 4.9l-0.1 5.7l0.1 5.6l-0.2 5.5l-1.1 5.3l-1.0 5.0l-1.1 4.8l-0.1 4.6l-1.5 4.1l-2.4 7.2l-2.6 6.2l-2.8 5.1l-2.4 4.7l-5.7 5.4l-4.0 3.0" stroke="#98521e" stroke-width="1.4" opacity="0.23"/>
<path d="M440.3 150.0l0.5 3.0l-0.1 4.0l-0.1 4.7l0.6 5.2l1.1 5.6l0.6 5.8l0.5 5.8l0.8 5.7l-0.2 5.4l0.1 4.8l-0.2 5.6l-0.8 5.5l-0.6 5.4l0.1 5.3l-0.1 5.1l-0.5 4.8l-0.4 4.5l-1.1 4.1l-2.7 6.9l-2.5 5.9l-3.2 4.6l-2.5 4.0l-4.5 5.9l-3.9 2.6" stroke="#fcc890" stroke-width="2.2" opacity="0.31" transform="translate(2 0.6)"/><path d="M440.3 150.0l0.5 3.0l-0.1 4.0l-0.1 4.7l0.6 5.2l1.1 5.6l0.6 5.8l0.5 5.8l0.8 5.7l-0.2 5.4l0.1 4.8l-0.2 5.6l-0.8 5.5l-0.6 5.4l0.1 5.3l-0.1 5.1l-0.5 4.8l-0.4 4.5l-1.1 4.1l-2.7 6.9l-2.5 5.9l-3.2 4.6l-2.5 4.0l-4.5 5.9l-3.9 2.6" stroke="#98521e" stroke-width="2.0" opacity="0.52"/>
<path d="M436.8 150.3l0.3 3.0l0.0 4.0l0.7 4.7l0.4 5.2l0.3 5.6l0.4 5.8l1.2 5.7l0.5 5.6l0.6 5.3l-0.7 4.7l0.2 5.5l0.3 5.5l-0.7 5.3l-0.9 5.1l-0.1 5.0l-0.7 4.6l-0.3 4.4l-1.4 3.7l-1.9 6.8l-2.3 5.7l-2.6 4.7l-2.3 3.7l-5.2 4.5l-3.1 2.9" stroke="#fcc890" stroke-width="1.5" opacity="0.12" transform="translate(2 0.6)"/><path d="M436.8 150.3l0.3 3.0l0.0 4.0l0.7 4.7l0.4 5.2l0.3 5.6l0.4 5.8l1.2 5.7l0.5 5.6l0.6 5.3l-0.7 4.7l0.2 5.5l0.3 5.5l-0.7 5.3l-0.9 5.1l-0.1 5.0l-0.7 4.6l-0.3 4.4l-1.4 3.7l-1.9 6.8l-2.3 5.7l-2.6 4.7l-2.3 3.7l-5.2 4.5l-3.1 2.9" stroke="#98521e" stroke-width="1.4" opacity="0.21"/>
</g>
<g clip-path="url(#cA)">
<path d="M474.8 189.6l0.5 3.1l1.1 4.2l1.0 5.0l0.2 5.7l0.6 5.9l0.9 5.8l1.2 5.5l1.1 4.8l0.0 5.9l0.7 5.5l1.5 5.3l-0.4 5.4l-0.1 5.3l-0.6 5.4l-0.5 5.8l-1.9 5.7l-1.6 5.9l-2.7 5.3l-2.9 4.6l-2.9 4.4l-6.8 5.2l-7.4 2.4l-5.1 0.7" stroke="#fcc890" stroke-width="1.5" opacity="0.12" transform="translate(2 0.6)"/><path d="M474.8 189.6l0.5 3.1l1.1 4.2l1.0 5.0l0.2 5.7l0.6 5.9l0.9 5.8l1.2 5.5l1.1 4.8l0.0 5.9l0.7 5.5l1.5 5.3l-0.4 5.4l-0.1 5.3l-0.6 5.4l-0.5 5.8l-1.9 5.7l-1.6 5.9l-2.7 5.3l-2.9 4.6l-2.9 4.4l-6.8 5.2l-7.4 2.4l-5.1 0.7" stroke="#98521e" stroke-width="1.4" opacity="0.20"/>
<path d="M471.9 190.0l0.9 3.1l0.0 4.3l0.8 5.0l1.1 5.5l0.4 5.9l0.9 5.8l0.7 5.5l1.0 4.8l0.3 5.9l0.9 5.5l1.2 5.2l0.1 5.2l-0.3 5.1l-0.1 5.1l-0.6 5.5l-1.3 5.7l-2.2 5.5l-2.1 5.3l-2.5 4.6l-3.2 3.2l-6.2 4.4l-6.7 2.5l-5.0 0.7" stroke="#fcc890" stroke-width="2.2" opacity="0.27" transform="translate(2 0.6)"/><path d="M471.9 190.0l0.9 3.1l0.0 4.3l0.8 5.0l1.1 5.5l0.4 5.9l0.9 5.8l0.7 5.5l1.0 4.8l0.3 5.9l0.9 5.5l1.2 5.2l0.1 5.2l-0.3 5.1l-0.1 5.1l-0.6 5.5l-1.3 5.7l-2.2 5.5l-2.1 5.3l-2.5 4.6l-3.2 3.2l-6.2 4.4l-6.7 2.5l-5.0 0.7" stroke="#98521e" stroke-width="2.0" opacity="0.45"/>
<path d="M468.2 190.6l0.7 3.1l0.6 4.2l1.5 4.9l0.3 5.7l1.2 5.8l1.0 5.8l0.6 5.5l0.0 4.9l0.4 5.9l0.7 5.5l0.6 5.2l0.9 4.9l-0.2 4.7l0.4 4.8l-0.9 5.1l-1.7 5.4l-2.0 5.3l-2.7 4.8l-1.8 4.6l-1.7 3.3l-5.5 4.3l-6.5 1.8l-4.9 0.8" stroke="#fcc890" stroke-width="1.5" opacity="0.11" transform="translate(2 0.6)"/><path d="M468.2 190.6l0.7 3.1l0.6 4.2l1.5 4.9l0.3 5.7l1.2 5.8l1.0 5.8l0.6 5.5l0.0 4.9l0.4 5.9l0.7 5.5l0.6 5.2l0.9 4.9l-0.2 4.7l0.4 4.8l-0.9 5.1l-1.7 5.4l-2.0 5.3l-2.7 4.8l-1.8 4.6l-1.7 3.3l-5.5 4.3l-6.5 1.8l-4.9 0.8" stroke="#98521e" stroke-width="1.4" opacity="0.18"/>
</g>
<g clip-path="url(#cA)">
<path d="M513.6 300.7l-0.3 2.9l-1.5 3.4l-0.9 4.2l-0.8 4.8l-0.4 5.3l-1.4 5.5l-1.1 5.9l-1.5 6.0l-1.6 6.1l-1.0 6.3l-1.7 4.4l-0.9 4.9l-2.2 4.7l-2.2 4.9l-1.7 5.1l-1.7 5.3l-1.5 5.4l-1.9 5.3l-1.7 5.4l-2.2 5.1l-2.4 5.0l-1.8 5.1l-1.3 5.1l-2.1 4.6l-2.5 5.1l-1.4 5.3l-2.3 4.8l-2.7 4.4l-1.8 4.7l-1.7 4.7l-2.1 4.5l-1.6 4.8l-2.2 4.6l-2.2 4.8l-2.1 5.1l-1.4 5.6l-0.8 4.5l-1.7 4.4l-1.3 4.7l-0.3 5.0l-1.1 4.9l-1.0 5.1l-1.0 5.1l-0.7 5.2l-1.3 5.2l-0.5 5.3l-1.4 5.2l-1.3 5.2l-0.5 5.3l-0.6 5.2l-0.6 5.2l-0.3 5.1l-0.7 5.0l-0.3 5.1l-0.4 5.1l-0.4 5.2l-1.2 5.1l0.1 5.2l-0.1 5.2l-0.4 5.1l-0.9 5.1l-0.5 5.1l-0.8 5.0l0.4 5.0l-0.5 4.8l0.1 4.7l-0.8 4.6l0.6 4.5l-0.9 5.8l-0.3 5.9l-0.1 6.0l-0.3 5.9l0.5 5.8l0.1 5.5l-0.7 5.2l0.2 4.9l0.2 4.5l-0.4 4.0l-0.4 3.5l0.0 2.8" stroke="#fcc890" stroke-width="1.5" opacity="0.25" transform="translate(2 0.6)"/><path d="M513.6 300.7l-0.3 2.9l-1.5 3.4l-0.9 4.2l-0.8 4.8l-0.4 5.3l-1.4 5.5l-1.1 5.9l-1.5 6.0l-1.6 6.1l-1.0 6.3l-1.7 4.4l-0.9 4.9l-2.2 4.7l-2.2 4.9l-1.7 5.1l-1.7 5.3l-1.5 5.4l-1.9 5.3l-1.7 5.4l-2.2 5.1l-2.4 5.0l-1.8 5.1l-1.3 5.1l-2.1 4.6l-2.5 5.1l-1.4 5.3l-2.3 4.8l-2.7 4.4l-1.8 4.7l-1.7 4.7l-2.1 4.5l-1.6 4.8l-2.2 4.6l-2.2 4.8l-2.1 5.1l-1.4 5.6l-0.8 4.5l-1.7 4.4l-1.3 4.7l-0.3 5.0l-1.1 4.9l-1.0 5.1l-1.0 5.1l-0.7 5.2l-1.3 5.2l-0.5 5.3l-1.4 5.2l-1.3 5.2l-0.5 5.3l-0.6 5.2l-0.6 5.2l-0.3 5.1l-0.7 5.0l-0.3 5.1l-0.4 5.1l-0.4 5.2l-1.2 5.1l0.1 5.2l-0.1 5.2l-0.4 5.1l-0.9 5.1l-0.5 5.1l-0.8 5.0l0.4 5.0l-0.5 4.8l0.1 4.7l-0.8 4.6l0.6 4.5l-0.9 5.8l-0.3 5.9l-0.1 6.0l-0.3 5.9l0.5 5.8l0.1 5.5l-0.7 5.2l0.2 4.9l0.2 4.5l-0.4 4.0l-0.4 3.5l0.0 2.8" stroke="#98521e" stroke-width="1.4" opacity="0.41"/>
<path d="M510.2 300.0l-1.2 2.8l-0.5 3.6l-0.6 4.2l-0.7 4.8l-0.7 5.2l-0.5 5.6l-0.9 5.9l-1.6 5.9l-1.5 6.1l-1.6 6.1l-1.9 4.2l-0.9 4.8l-1.5 4.9l-2.2 4.8l-2.1 5.0l-2.2 5.1l-1.6 5.4l-1.4 5.5l-2.4 5.1l-1.5 5.4l-1.9 5.2l-2.5 4.8l-1.5 5.0l-2.0 4.6l-1.9 5.3l-1.6 5.2l-2.1 4.8l-2.3 4.6l-2.1 4.6l-2.2 4.5l-2.1 4.6l-1.9 4.7l-2.0 4.8l-1.5 5.2l-2.3 5.1l-1.5 5.7l-1.3 4.4l-0.9 4.7l-1.6 4.6l-1.3 4.9l-1.1 5.0l-0.7 5.2l-0.6 5.2l-0.8 5.2l-1.8 5.1l-0.2 5.4l-1.1 5.3l-0.9 5.3l-0.6 5.3l-0.9 5.2l-0.3 5.2l-1.3 5.0l-0.1 5.1l-0.2 5.2l-1.0 5.1l-0.8 5.2l-1.0 5.2l-0.3 5.2l-0.7 5.2l-0.3 5.2l0.1 5.2l0.2 5.1l-0.3 5.0l0.1 4.9l-0.2 4.8l-0.4 4.7l-0.5 4.6l0.2 4.5l-1.0 5.9l-0.2 6.0l-0.1 6.0l0.0 5.9l-0.3 5.7l-0.4 5.5l-0.2 5.3l-0.1 4.9l-0.0 4.5l-0.2 4.0l-0.1 3.5l-0.7 2.8" stroke="#fcc890" stroke-width="2.2" opacity="0.55" transform="translate(2 0.6)"/><path d="M510.2 300.0l-1.2 2.8l-0.5 3.6l-0.6 4.2l-0.7 4.8l-0.7 5.2l-0.5 5.6l-0.9 5.9l-1.6 5.9l-1.5 6.1l-1.6 6.1l-1.9 4.2l-0.9 4.8l-1.5 4.9l-2.2 4.8l-2.1 5.0l-2.2 5.1l-1.6 5.4l-1.4 5.5l-2.4 5.1l-1.5 5.4l-1.9 5.2l-2.5 4.8l-1.5 5.0l-2.0 4.6l-1.9 5.3l-1.6 5.2l-2.1 4.8l-2.3 4.6l-2.1 4.6l-2.2 4.5l-2.1 4.6l-1.9 4.7l-2.0 4.8l-1.5 5.2l-2.3 5.1l-1.5 5.7l-1.3 4.4l-0.9 4.7l-1.6 4.6l-1.3 4.9l-1.1 5.0l-0.7 5.2l-0.6 5.2l-0.8 5.2l-1.8 5.1l-0.2 5.4l-1.1 5.3l-0.9 5.3l-0.6 5.3l-0.9 5.2l-0.3 5.2l-1.3 5.0l-0.1 5.1l-0.2 5.2l-1.0 5.1l-0.8 5.2l-1.0 5.2l-0.3 5.2l-0.7 5.2l-0.3 5.2l0.1 5.2l0.2 5.1l-0.3 5.0l0.1 4.9l-0.2 4.8l-0.4 4.7l-0.5 4.6l0.2 4.5l-1.0 5.9l-0.2 6.0l-0.1 6.0l0.0 5.9l-0.3 5.7l-0.4 5.5l-0.2 5.3l-0.1 4.9l-0.0 4.5l-0.2 4.0l-0.1 3.5l-0.7 2.8" stroke="#98521e" stroke-width="2.0" opacity="0.91"/>
<path d="M506.6 299.4l-0.7 2.9l-0.8 3.6l-0.4 4.3l-0.8 4.7l-1.0 5.1l-1.0 5.5l-0.4 5.9l-1.9 5.8l-1.5 5.9l-1.0 6.1l-1.6 4.3l-1.7 4.5l-1.3 4.9l-1.8 4.9l-1.3 5.3l-2.5 5.0l-1.7 5.3l-1.7 5.3l-2.1 5.2l-1.9 5.2l-1.7 5.2l-1.8 5.1l-2.1 4.8l-1.7 4.7l-2.3 5.1l-2.2 4.9l-2.4 4.6l-2.4 4.5l-1.5 4.8l-2.6 4.4l-2.2 4.6l-1.7 4.9l-2.1 4.9l-2.2 5.1l-1.1 5.7l-1.9 5.7l-0.9 4.6l-0.9 4.7l-2.0 4.6l-1.5 4.8l-0.3 5.2l-0.8 5.2l-1.5 5.1l-1.3 5.2l-0.5 5.4l-0.9 5.3l-0.9 5.3l-0.8 5.3l-0.5 5.3l-1.4 5.1l-1.1 5.1l-0.0 5.2l-1.1 5.0l0.0 5.2l-0.2 5.2l-0.7 5.2l-0.2 5.2l-0.3 5.2l-0.1 5.2l-1.2 5.1l-0.6 5.1l-0.7 5.1l0.1 5.0l-0.5 4.9l-0.3 4.8l-0.4 4.7l0.5 4.6l-0.2 4.5l-0.5 5.9l0.2 6.0l-0.3 6.0l-0.2 5.9l0.1 5.8l-0.4 5.5l-0.4 5.3l-0.3 4.9l-0.1 4.5l-0.5 4.0l0.4 3.5l-0.5 2.8" stroke="#fcc890" stroke-width="1.5" opacity="0.22" transform="translate(2 0.6)"/><path d="M506.6 299.4l-0.7 2.9l-0.8 3.6l-0.4 4.3l-0.8 4.7l-1.0 5.1l-1.0 5.5l-0.4 5.9l-1.9 5.8l-1.5 5.9l-1.0 6.1l-1.6 4.3l-1.7 4.5l-1.3 4.9l-1.8 4.9l-1.3 5.3l-2.5 5.0l-1.7 5.3l-1.7 5.3l-2.1 5.2l-1.9 5.2l-1.7 5.2l-1.8 5.1l-2.1 4.8l-1.7 4.7l-2.3 5.1l-2.2 4.9l-2.4 4.6l-2.4 4.5l-1.5 4.8l-2.6 4.4l-2.2 4.6l-1.7 4.9l-2.1 4.9l-2.2 5.1l-1.1 5.7l-1.9 5.7l-0.9 4.6l-0.9 4.7l-2.0 4.6l-1.5 4.8l-0.3 5.2l-0.8 5.2l-1.5 5.1l-1.3 5.2l-0.5 5.4l-0.9 5.3l-0.9 5.3l-0.8 5.3l-0.5 5.3l-1.4 5.1l-1.1 5.1l-0.0 5.2l-1.1 5.0l0.0 5.2l-0.2 5.2l-0.7 5.2l-0.2 5.2l-0.3 5.2l-0.1 5.2l-1.2 5.1l-0.6 5.1l-0.7 5.1l0.1 5.0l-0.5 4.9l-0.3 4.8l-0.4 4.7l0.5 4.6l-0.2 4.5l-0.5 5.9l0.2 6.0l-0.3 6.0l-0.2 5.9l0.1 5.8l-0.4 5.5l-0.4 5.3l-0.3 4.9l-0.1 4.5l-0.5 4.0l0.4 3.5l-0.5 2.8" stroke="#98521e" stroke-width="1.4" opacity="0.36"/>
</g>
<g clip-path="url(#cA)">
<path d="M522.7 330.5l-0.4 2.9l-0.2 3.8l-1.4 4.2l-1.0 4.9l-1.1 5.3l-0.3 5.8l-1.0 5.9l-0.9 6.0l-1.4 5.9l-1.5 5.7l-1.2 4.8l-1.8 4.7l-1.9 4.8l-1.3 5.1l-1.9 5.0l-1.6 5.2l-1.9 5.1l-1.4 5.3l-2.5 4.9l-2.1 5.0l-1.9 5.0l-1.2 5.2l-1.5 5.0l-2.0 4.8l-1.8 4.8l-1.9 4.7l-1.3 4.9l-1.5 4.8l-1.3 4.9l-1.8 4.8l-1.3 5.1l-1.6 5.2l-2.4 5.1l-2.0 5.5l-0.3 4.6l-1.1 4.4l-1.5 4.3l-0.4 4.6l-1.8 4.3l-1.0 4.6l-1.0 4.7l-0.7 4.8l-1.3 4.8l-0.5 5.1l-1.3 5.1l-0.2 5.4l-1.3 5.4l-0.2 5.7l-0.5 5.9l-0.6 6.1l-0.5 4.3l-0.8 4.6l0.0 4.9l-0.1 5.2l-0.2 5.4l-0.6 5.5l0.0 5.7l-0.5 5.8l-0.3 5.8l-0.7 5.9l-0.5 5.9l0.6 5.9l0.2 5.8l-1.1 5.7l0.3 5.6l-0.5 5.4l-0.5 5.2l-0.3 4.9l-0.1 4.6l0.8 4.4l-0.6 4.0l0.1 3.6l-0.5 3.2l0.7 2.8" stroke="#fcc890" stroke-width="1.5" opacity="0.21" transform="translate(2 0.6)"/><path d="M522.7 330.5l-0.4 2.9l-0.2 3.8l-1.4 4.2l-1.0 4.9l-1.1 5.3l-0.3 5.8l-1.0 5.9l-0.9 6.0l-1.4 5.9l-1.5 5.7l-1.2 4.8l-1.8 4.7l-1.9 4.8l-1.3 5.1l-1.9 5.0l-1.6 5.2l-1.9 5.1l-1.4 5.3l-2.5 4.9l-2.1 5.0l-1.9 5.0l-1.2 5.2l-1.5 5.0l-2.0 4.8l-1.8 4.8l-1.9 4.7l-1.3 4.9l-1.5 4.8l-1.3 4.9l-1.8 4.8l-1.3 5.1l-1.6 5.2l-2.4 5.1l-2.0 5.5l-0.3 4.6l-1.1 4.4l-1.5 4.3l-0.4 4.6l-1.8 4.3l-1.0 4.6l-1.0 4.7l-0.7 4.8l-1.3 4.8l-0.5 5.1l-1.3 5.1l-0.2 5.4l-1.3 5.4l-0.2 5.7l-0.5 5.9l-0.6 6.1l-0.5 4.3l-0.8 4.6l0.0 4.9l-0.1 5.2l-0.2 5.4l-0.6 5.5l0.0 5.7l-0.5 5.8l-0.3 5.8l-0.7 5.9l-0.5 5.9l0.6 5.9l0.2 5.8l-1.1 5.7l0.3 5.6l-0.5 5.4l-0.5 5.2l-0.3 4.9l-0.1 4.6l0.8 4.4l-0.6 4.0l0.1 3.6l-0.5 3.2l0.7 2.8" stroke="#98521e" stroke-width="1.4" opacity="0.35"/>
<path d="M519.4 329.9l0.2 3.1l-1.0 3.7l-0.5 4.4l-0.7 4.9l-1.4 5.3l-1.4 5.6l-1.0 5.8l-1.1 5.9l-0.7 6.0l-2.0 5.5l-0.8 4.8l-1.3 4.8l-1.7 4.8l-2.3 4.8l-1.8 5.0l-1.4 5.2l-1.5 5.2l-1.7 5.2l-2.4 4.9l-1.7 5.2l-1.4 5.2l-1.5 5.1l-1.6 5.0l-1.6 4.9l-2.6 4.4l-1.1 5.0l-1.4 4.8l-1.8 4.7l-1.8 4.8l-2.2 4.8l-1.6 5.1l-1.8 5.2l-1.3 5.5l-1.6 5.7l-1.6 4.3l-1.3 4.3l-0.8 4.5l-0.5 4.6l-1.2 4.5l-0.8 4.7l-1.1 4.7l-0.8 4.8l-1.6 4.8l-0.6 5.1l-1.5 5.1l-0.6 5.4l-1.0 5.5l-1.0 5.7l-0.4 6.0l-0.4 6.2l-0.1 4.4l-0.8 4.6l0.3 5.0l-0.0 5.2l-1.2 5.3l-0.3 5.6l0.3 5.7l-0.3 5.8l0.1 5.9l-1.1 5.9l0.5 5.9l-0.5 5.9l0.2 5.8l-0.2 5.7l-0.3 5.5l-0.1 5.4l-0.7 5.2l0.4 4.9l-0.5 4.6l0.0 4.3l-0.8 4.0l-0.0 3.6l0.1 3.2l-0.3 2.7" stroke="#fcc890" stroke-width="2.2" opacity="0.47" transform="translate(2 0.6)"/><path d="M519.4 329.9l0.2 3.1l-1.0 3.7l-0.5 4.4l-0.7 4.9l-1.4 5.3l-1.4 5.6l-1.0 5.8l-1.1 5.9l-0.7 6.0l-2.0 5.5l-0.8 4.8l-1.3 4.8l-1.7 4.8l-2.3 4.8l-1.8 5.0l-1.4 5.2l-1.5 5.2l-1.7 5.2l-2.4 4.9l-1.7 5.2l-1.4 5.2l-1.5 5.1l-1.6 5.0l-1.6 4.9l-2.6 4.4l-1.1 5.0l-1.4 4.8l-1.8 4.7l-1.8 4.8l-2.2 4.8l-1.6 5.1l-1.8 5.2l-1.3 5.5l-1.6 5.7l-1.6 4.3l-1.3 4.3l-0.8 4.5l-0.5 4.6l-1.2 4.5l-0.8 4.7l-1.1 4.7l-0.8 4.8l-1.6 4.8l-0.6 5.1l-1.5 5.1l-0.6 5.4l-1.0 5.5l-1.0 5.7l-0.4 6.0l-0.4 6.2l-0.1 4.4l-0.8 4.6l0.3 5.0l-0.0 5.2l-1.2 5.3l-0.3 5.6l0.3 5.7l-0.3 5.8l0.1 5.9l-1.1 5.9l0.5 5.9l-0.5 5.9l0.2 5.8l-0.2 5.7l-0.3 5.5l-0.1 5.4l-0.7 5.2l0.4 4.9l-0.5 4.6l0.0 4.3l-0.8 4.0l-0.0 3.6l0.1 3.2l-0.3 2.7" stroke="#98521e" stroke-width="2.0" opacity="0.78"/>
<path d="M516.6 329.4l-0.9 2.9l-0.3 3.8l-1.3 4.3l-0.4 5.0l-1.4 5.2l-0.9 5.6l-0.5 5.9l-0.9 5.9l-1.4 5.7l-1.4 5.6l-1.2 4.6l-1.7 4.6l-1.5 4.9l-1.6 4.9l-1.5 5.1l-2.2 4.9l-1.6 5.2l-1.8 5.1l-1.5 5.3l-1.8 5.1l-1.8 5.1l-1.8 5.0l-2.5 4.6l-1.5 4.9l-1.7 4.7l-1.2 4.9l-1.8 4.7l-2.3 4.6l-1.4 5.0l-1.8 5.0l-1.8 5.1l-1.0 5.5l-1.9 5.4l-1.3 5.8l-0.8 4.5l-0.8 4.5l-1.1 4.4l-1.7 4.3l-1.7 4.4l-0.9 4.7l-1.0 4.7l-1.0 4.8l-0.7 5.0l-1.2 5.0l-1.2 5.2l-0.5 5.5l-0.4 5.6l-1.0 5.7l-0.2 6.0l-0.9 6.1l-0.7 4.4l-0.3 4.7l0.1 5.0l-0.9 5.2l-0.3 5.4l-0.5 5.6l0.2 5.7l-0.3 5.8l0.2 5.9l-0.4 5.9l-0.4 5.9l-0.2 5.9l-0.3 5.8l-0.5 5.7l0.3 5.6l-0.0 5.4l-0.3 5.2l0.2 4.9l-0.0 4.6l0.0 4.3l-0.9 4.0l-0.3 3.6l0.4 3.2l-0.3 2.7" stroke="#fcc890" stroke-width="1.5" opacity="0.19" transform="translate(2 0.6)"/><path d="M516.6 329.4l-0.9 2.9l-0.3 3.8l-1.3 4.3l-0.4 5.0l-1.4 5.2l-0.9 5.6l-0.5 5.9l-0.9 5.9l-1.4 5.7l-1.4 5.6l-1.2 4.6l-1.7 4.6l-1.5 4.9l-1.6 4.9l-1.5 5.1l-2.2 4.9l-1.6 5.2l-1.8 5.1l-1.5 5.3l-1.8 5.1l-1.8 5.1l-1.8 5.0l-2.5 4.6l-1.5 4.9l-1.7 4.7l-1.2 4.9l-1.8 4.7l-2.3 4.6l-1.4 5.0l-1.8 5.0l-1.8 5.1l-1.0 5.5l-1.9 5.4l-1.3 5.8l-0.8 4.5l-0.8 4.5l-1.1 4.4l-1.7 4.3l-1.7 4.4l-0.9 4.7l-1.0 4.7l-1.0 4.8l-0.7 5.0l-1.2 5.0l-1.2 5.2l-0.5 5.5l-0.4 5.6l-1.0 5.7l-0.2 6.0l-0.9 6.1l-0.7 4.4l-0.3 4.7l0.1 5.0l-0.9 5.2l-0.3 5.4l-0.5 5.6l0.2 5.7l-0.3 5.8l0.2 5.9l-0.4 5.9l-0.4 5.9l-0.2 5.9l-0.3 5.8l-0.5 5.7l0.3 5.6l-0.0 5.4l-0.3 5.2l0.2 4.9l-0.0 4.6l0.0 4.3l-0.9 4.0l-0.3 3.6l0.4 3.2l-0.3 2.7" stroke="#98521e" stroke-width="1.4" opacity="0.31"/>
</g>
<g clip-path="url(#cA)">
<path d="M533.6 350.5l-0.4 2.9l-1.2 3.6l-0.7 4.4l0.0 5.0l-1.3 5.3l-0.6 5.7l-1.1 5.8l-0.6 6.0l-1.3 5.8l-1.7 5.6l-0.7 4.7l-1.1 4.7l-1.8 4.5l-0.8 4.9l-2.0 4.6l-1.8 4.8l-1.1 5.1l-1.4 5.1l-1.2 5.3l-2.2 5.2l-1.7 5.4l-1.1 5.8l-1.0 4.5l-1.0 4.6l-0.7 4.8l-1.6 4.7l-0.8 5.0l-1.9 4.8l-0.7 5.2l-0.8 5.2l-1.4 5.1l-0.9 5.2l-1.1 5.2l-1.5 5.1l-1.3 5.1l-0.6 5.2l-1.8 4.9l-0.6 5.1l-1.4 4.9l0.1 5.1l-0.7 5.0l-1.3 4.9l-0.5 5.0l-1.0 4.9l-0.6 5.0l0.3 5.1l-0.2 5.0l-0.8 5.0l-0.3 5.0l-0.7 5.0l-0.8 5.0l-0.1 5.0l-0.2 5.0l-1.1 4.9l-0.6 5.1l0.3 5.4l0.2 5.6l-0.5 5.7l-0.8 5.8l-0.6 5.8l0.2 5.8l-0.0 5.7l0.0 5.5l-0.1 5.3l-0.7 5.0l-0.5 4.7l-0.0 4.3l0.2 3.9l0.1 3.4l-0.9 2.8" stroke="#fcc890" stroke-width="1.5" opacity="0.19" transform="translate(2 0.6)"/><path d="M533.6 350.5l-0.4 2.9l-1.2 3.6l-0.7 4.4l0.0 5.0l-1.3 5.3l-0.6 5.7l-1.1 5.8l-0.6 6.0l-1.3 5.8l-1.7 5.6l-0.7 4.7l-1.1 4.7l-1.8 4.5l-0.8 4.9l-2.0 4.6l-1.8 4.8l-1.1 5.1l-1.4 5.1l-1.2 5.3l-2.2 5.2l-1.7 5.4l-1.1 5.8l-1.0 4.5l-1.0 4.6l-0.7 4.8l-1.6 4.7l-0.8 5.0l-1.9 4.8l-0.7 5.2l-0.8 5.2l-1.4 5.1l-0.9 5.2l-1.1 5.2l-1.5 5.1l-1.3 5.1l-0.6 5.2l-1.8 4.9l-0.6 5.1l-1.4 4.9l0.1 5.1l-0.7 5.0l-1.3 4.9l-0.5 5.0l-1.0 4.9l-0.6 5.0l0.3 5.1l-0.2 5.0l-0.8 5.0l-0.3 5.0l-0.7 5.0l-0.8 5.0l-0.1 5.0l-0.2 5.0l-1.1 4.9l-0.6 5.1l0.3 5.4l0.2 5.6l-0.5 5.7l-0.8 5.8l-0.6 5.8l0.2 5.8l-0.0 5.7l0.0 5.5l-0.1 5.3l-0.7 5.0l-0.5 4.7l-0.0 4.3l0.2 3.9l0.1 3.4l-0.9 2.8" stroke="#98521e" stroke-width="1.4" opacity="0.32"/>
<path d="M530.5 350.1l-1.2 2.8l-0.0 3.8l-0.7 4.4l-0.6 4.9l-1.1 5.3l-1.1 5.6l-0.3 5.9l-1.0 5.9l-1.2 5.8l-1.5 5.6l-0.7 4.7l-0.9 4.7l-1.2 4.7l-1.6 4.6l-1.9 4.6l-1.1 5.0l-1.5 5.0l-1.3 5.1l-1.3 5.3l-1.4 5.4l-1.7 5.5l-2.2 5.5l-1.1 4.4l-1.5 4.5l-0.4 4.9l-1.8 4.7l-1.1 5.0l-1.3 5.0l-0.6 5.2l-1.8 5.0l-1.5 5.1l-1.2 5.2l-0.7 5.3l-0.9 5.3l-1.1 5.2l-1.0 5.1l-0.8 5.1l-0.6 5.1l-1.2 4.9l-0.8 5.0l-0.8 5.0l-0.3 5.1l-1.1 4.9l-0.6 5.0l-1.0 5.0l0.0 5.1l-0.3 5.0l-0.8 5.0l-0.0 5.0l-0.7 5.0l0.1 5.0l-0.3 5.0l-1.3 4.9l-0.4 5.0l0.2 5.2l-0.1 5.4l-0.2 5.6l-0.6 5.7l-1.0 5.8l0.0 5.8l0.1 5.8l-0.2 5.7l-0.9 5.5l-0.4 5.3l-0.6 5.0l-0.2 4.7l0.2 4.3l-0.4 3.9l-0.1 3.4l-0.5 2.8" stroke="#fcc890" stroke-width="2.2" opacity="0.43" transform="translate(2 0.6)"/><path d="M530.5 350.1l-1.2 2.8l-0.0 3.8l-0.7 4.4l-0.6 4.9l-1.1 5.3l-1.1 5.6l-0.3 5.9l-1.0 5.9l-1.2 5.8l-1.5 5.6l-0.7 4.7l-0.9 4.7l-1.2 4.7l-1.6 4.6l-1.9 4.6l-1.1 5.0l-1.5 5.0l-1.3 5.1l-1.3 5.3l-1.4 5.4l-1.7 5.5l-2.2 5.5l-1.1 4.4l-1.5 4.5l-0.4 4.9l-1.8 4.7l-1.1 5.0l-1.3 5.0l-0.6 5.2l-1.8 5.0l-1.5 5.1l-1.2 5.2l-0.7 5.3l-0.9 5.3l-1.1 5.2l-1.0 5.1l-0.8 5.1l-0.6 5.1l-1.2 4.9l-0.8 5.0l-0.8 5.0l-0.3 5.1l-1.1 4.9l-0.6 5.0l-1.0 5.0l0.0 5.1l-0.3 5.0l-0.8 5.0l-0.0 5.0l-0.7 5.0l0.1 5.0l-0.3 5.0l-1.3 4.9l-0.4 5.0l0.2 5.2l-0.1 5.4l-0.2 5.6l-0.6 5.7l-1.0 5.8l0.0 5.8l0.1 5.8l-0.2 5.7l-0.9 5.5l-0.4 5.3l-0.6 5.0l-0.2 4.7l0.2 4.3l-0.4 3.9l-0.1 3.4l-0.5 2.8" stroke="#98521e" stroke-width="2.0" opacity="0.72"/>
<path d="M526.1 349.4l-0.0 3.0l-0.1 3.8l-1.0 4.3l-0.6 4.9l-0.9 5.3l-0.5 5.6l-0.6 5.8l-1.6 5.7l-1.3 5.7l-1.3 5.5l-1.1 4.5l-1.3 4.5l-1.3 4.6l-0.7 4.8l-1.7 4.6l-1.0 5.0l-1.1 5.1l-2.0 4.9l-1.2 5.3l-1.3 5.5l-2.4 5.3l-1.5 5.8l-1.5 4.4l-1.3 4.6l-0.3 4.9l-0.9 4.9l-1.6 4.8l-1.8 4.9l-1.3 5.1l-0.6 5.3l-1.7 5.1l-0.9 5.3l-1.0 5.3l-0.6 5.3l-1.6 5.1l-0.5 5.3l-1.1 5.1l-1.0 5.0l-0.5 5.1l-1.1 5.0l-0.8 5.0l-1.1 5.0l-1.1 5.0l0.1 5.1l-0.5 5.0l-1.0 5.0l-0.1 5.1l-0.4 5.0l-0.5 5.0l-0.2 5.0l-0.4 5.0l-0.4 5.0l-0.1 5.0l-0.2 5.0l-1.2 5.1l-0.6 5.4l-0.8 5.6l-0.5 5.7l0.4 5.9l0.1 5.9l-0.7 5.8l0.2 5.7l-0.4 5.5l0.0 5.3l-0.4 5.0l-0.9 4.7l0.4 4.3l-0.3 3.9l0.2 3.4l-0.6 2.8" stroke="#fcc890" stroke-width="1.5" opacity="0.17" transform="translate(2 0.6)"/><path d="M526.1 349.4l-0.0 3.0l-0.1 3.8l-1.0 4.3l-0.6 4.9l-0.9 5.3l-0.5 5.6l-0.6 5.8l-1.6 5.7l-1.3 5.7l-1.3 5.5l-1.1 4.5l-1.3 4.5l-1.3 4.6l-0.7 4.8l-1.7 4.6l-1.0 5.0l-1.1 5.1l-2.0 4.9l-1.2 5.3l-1.3 5.5l-2.4 5.3l-1.5 5.8l-1.5 4.4l-1.3 4.6l-0.3 4.9l-0.9 4.9l-1.6 4.8l-1.8 4.9l-1.3 5.1l-0.6 5.3l-1.7 5.1l-0.9 5.3l-1.0 5.3l-0.6 5.3l-1.6 5.1l-0.5 5.3l-1.1 5.1l-1.0 5.0l-0.5 5.1l-1.1 5.0l-0.8 5.0l-1.1 5.0l-1.1 5.0l0.1 5.1l-0.5 5.0l-1.0 5.0l-0.1 5.1l-0.4 5.0l-0.5 5.0l-0.2 5.0l-0.4 5.0l-0.4 5.0l-0.1 5.0l-0.2 5.0l-1.2 5.1l-0.6 5.4l-0.8 5.6l-0.5 5.7l0.4 5.9l0.1 5.9l-0.7 5.8l0.2 5.7l-0.4 5.5l0.0 5.3l-0.4 5.0l-0.9 4.7l0.4 4.3l-0.3 3.9l0.2 3.4l-0.6 2.8" stroke="#98521e" stroke-width="1.4" opacity="0.29"/>
</g>
<g clip-path="url(#cA)">
<path d="M563.5 380.7l-1.3 2.8l-1.0 3.6l-0.1 4.4l-1.4 4.7l-1.3 5.1l-0.2 5.7l-1.2 5.7l-1.2 5.8l-1.5 5.8l-1.0 5.8l-1.0 5.6l-1.6 5.2l-1.1 5.1l-1.1 5.0l-1.7 4.8l-1.3 4.8l-1.4 4.8l-2.1 4.6l-1.5 4.8l-2.0 4.8l-1.1 5.2l-1.6 5.2l-1.9 5.3l-1.3 5.7l-0.4 4.5l-1.6 4.2l-0.8 4.5l-0.7 4.5l-0.7 4.6l-0.8 4.6l-1.6 4.5l-1.0 4.7l-1.4 4.8l-0.4 5.1l-1.4 5.1l-0.9 5.3l-1.2 5.4l-0.4 5.7l-0.6 5.9l-0.2 6.2l-0.4 4.3l-0.4 4.6l-0.8 4.9l-0.7 5.1l0.0 5.4l-0.8 5.5l-0.7 5.7l-0.5 5.8l0.4 5.9l-0.9 5.9l-0.6 5.9l0.5 5.9l-0.1 5.8l-0.3 5.7l0.1 5.6l-0.6 5.4l-0.4 5.2l-0.4 4.9l-0.7 4.6l0.0 4.3l0.2 4.0l0.1 3.6l-0.7 3.2l-0.3 2.7" stroke="#fcc890" stroke-width="1.5" opacity="0.16" transform="translate(2 0.6)"/><path d="M563.5 380.7l-1.3 2.8l-1.0 3.6l-0.1 4.4l-1.4 4.7l-1.3 5.1l-0.2 5.7l-1.2 5.7l-1.2 5.8l-1.5 5.8l-1.0 5.8l-1.0 5.6l-1.6 5.2l-1.1 5.1l-1.1 5.0l-1.7 4.8l-1.3 4.8l-1.4 4.8l-2.1 4.6l-1.5 4.8l-2.0 4.8l-1.1 5.2l-1.6 5.2l-1.9 5.3l-1.3 5.7l-0.4 4.5l-1.6 4.2l-0.8 4.5l-0.7 4.5l-0.7 4.6l-0.8 4.6l-1.6 4.5l-1.0 4.7l-1.4 4.8l-0.4 5.1l-1.4 5.1l-0.9 5.3l-1.2 5.4l-0.4 5.7l-0.6 5.9l-0.2 6.2l-0.4 4.3l-0.4 4.6l-0.8 4.9l-0.7 5.1l0.0 5.4l-0.8 5.5l-0.7 5.7l-0.5 5.8l0.4 5.9l-0.9 5.9l-0.6 5.9l0.5 5.9l-0.1 5.8l-0.3 5.7l0.1 5.6l-0.6 5.4l-0.4 5.2l-0.4 4.9l-0.7 4.6l0.0 4.3l0.2 4.0l0.1 3.6l-0.7 3.2l-0.3 2.7" stroke="#98521e" stroke-width="1.4" opacity="0.26"/>
<path d="M559.6 379.9l-1.0 2.8l-0.4 3.7l-0.1 4.4l-0.4 4.9l-1.3 5.1l-1.0 5.5l-1.2 5.7l-1.1 5.8l-1.4 5.8l-1.5 5.6l-0.7 5.6l-0.8 5.3l-2.0 4.8l-1.6 4.8l-1.5 4.8l-0.8 5.0l-1.7 4.7l-1.6 4.8l-1.2 5.0l-2.0 4.8l-2.1 4.9l-1.2 5.3l-2.1 5.3l-1.7 5.6l-1.2 4.3l-0.9 4.4l-1.2 4.4l-0.6 4.6l-0.9 4.6l-0.5 4.7l-0.9 4.7l-0.9 4.8l-0.9 4.9l-1.5 4.9l-0.7 5.2l-0.5 5.4l-1.6 5.4l-1.1 5.7l-0.5 6.0l-0.1 6.2l-0.1 4.4l-1.3 4.6l-0.4 4.9l-0.0 5.2l0.1 5.4l-1.1 5.5l-0.5 5.7l-0.7 5.8l0.2 5.9l0.3 5.9l-1.2 5.9l0.4 5.9l-0.4 5.8l0.1 5.7l-1.2 5.5l-0.4 5.4l0.2 5.2l-0.5 4.9l0.5 4.7l-0.4 4.3l-0.9 4.0l-0.4 3.6l0.3 3.2l0.0 2.7" stroke="#fcc890" stroke-width="2.2" opacity="0.35" transform="translate(2 0.6)"/><path d="M559.6 379.9l-1.0 2.8l-0.4 3.7l-0.1 4.4l-0.4 4.9l-1.3 5.1l-1.0 5.5l-1.2 5.7l-1.1 5.8l-1.4 5.8l-1.5 5.6l-0.7 5.6l-0.8 5.3l-2.0 4.8l-1.6 4.8l-1.5 4.8l-0.8 5.0l-1.7 4.7l-1.6 4.8l-1.2 5.0l-2.0 4.8l-2.1 4.9l-1.2 5.3l-2.1 5.3l-1.7 5.6l-1.2 4.3l-0.9 4.4l-1.2 4.4l-0.6 4.6l-0.9 4.6l-0.5 4.7l-0.9 4.7l-0.9 4.8l-0.9 4.9l-1.5 4.9l-0.7 5.2l-0.5 5.4l-1.6 5.4l-1.1 5.7l-0.5 6.0l-0.1 6.2l-0.1 4.4l-1.3 4.6l-0.4 4.9l-0.0 5.2l0.1 5.4l-1.1 5.5l-0.5 5.7l-0.7 5.8l0.2 5.9l0.3 5.9l-1.2 5.9l0.4 5.9l-0.4 5.8l0.1 5.7l-1.2 5.5l-0.4 5.4l0.2 5.2l-0.5 4.9l0.5 4.7l-0.4 4.3l-0.9 4.0l-0.4 3.6l0.3 3.2l0.0 2.7" stroke="#98521e" stroke-width="2.0" opacity="0.59"/>
<path d="M556.2 379.3l-0.0 3.0l-0.9 3.6l-0.9 4.2l-1.3 4.7l-0.6 5.2l-0.4 5.6l-1.7 5.6l-1.6 5.7l-0.6 5.9l-1.6 5.6l-0.9 5.5l-0.9 5.2l-1.3 4.9l-1.3 4.8l-1.1 4.8l-1.5 4.7l-1.5 4.7l-1.9 4.7l-1.6 4.8l-1.6 5.0l-1.9 5.0l-1.9 5.2l-1.7 5.5l-1.5 5.8l-0.1 4.6l-0.5 4.5l-1.4 4.3l-1.6 4.3l-1.2 4.5l-0.9 4.6l-0.7 4.8l-1.0 4.8l-0.6 5.0l-1.0 5.1l-1.4 5.1l-0.5 5.5l-0.7 5.6l-1.3 5.7l-0.4 6.0l-0.2 6.2l-0.8 4.3l-0.8 4.6l-0.5 4.9l-0.2 5.2l-0.9 5.4l0.3 5.6l0.1 5.7l-0.9 5.8l-0.1 5.9l-0.6 5.9l-0.3 5.9l-0.8 5.8l-0.5 5.8l0.0 5.7l-0.3 5.6l0.4 5.4l-0.9 5.1l-0.5 4.9l0.3 4.7l0.0 4.3l-0.5 4.0l0.6 3.6l-0.1 3.2l0.2 2.7" stroke="#fcc890" stroke-width="1.5" opacity="0.14" transform="translate(2 0.6)"/><path d="M556.2 379.3l-0.0 3.0l-0.9 3.6l-0.9 4.2l-1.3 4.7l-0.6 5.2l-0.4 5.6l-1.7 5.6l-1.6 5.7l-0.6 5.9l-1.6 5.6l-0.9 5.5l-0.9 5.2l-1.3 4.9l-1.3 4.8l-1.1 4.8l-1.5 4.7l-1.5 4.7l-1.9 4.7l-1.6 4.8l-1.6 5.0l-1.9 5.0l-1.9 5.2l-1.7 5.5l-1.5 5.8l-0.1 4.6l-0.5 4.5l-1.4 4.3l-1.6 4.3l-1.2 4.5l-0.9 4.6l-0.7 4.8l-1.0 4.8l-0.6 5.0l-1.0 5.1l-1.4 5.1l-0.5 5.5l-0.7 5.6l-1.3 5.7l-0.4 6.0l-0.2 6.2l-0.8 4.3l-0.8 4.6l-0.5 4.9l-0.2 5.2l-0.9 5.4l0.3 5.6l0.1 5.7l-0.9 5.8l-0.1 5.9l-0.6 5.9l-0.3 5.9l-0.8 5.8l-0.5 5.8l0.0 5.7l-0.3 5.6l0.4 5.4l-0.9 5.1l-0.5 4.9l0.3 4.7l0.0 4.3l-0.5 4.0l0.6 3.6l-0.1 3.2l0.2 2.7" stroke="#98521e" stroke-width="1.4" opacity="0.23"/>
</g>
<g clip-path="url(#cA)">
<path d="M473.3 421.0l-1.3 2.8l-0.5 4.0l-1.8 4.4l-1.0 5.2l-1.4 5.6l-2.3 5.6l-1.7 5.8l-1.5 5.8l-2.1 5.4l-1.6 5.2l-1.9 4.8l-1.4 4.7l-0.9 4.7l-1.1 4.6l-1.3 4.6l-1.3 4.7l-2.1 4.7l-1.1 5.2l-1.2 5.6l-0.8 6.2l-1.2 4.0l-1.0 4.2l-0.2 4.5l-0.3 4.6l-0.8 4.6l-1.1 4.7l-0.8 4.9l-0.2 5.1l-0.2 5.1l-0.5 5.2l-1.3 5.2l-0.9 5.3l-0.5 5.4l-0.7 5.5l0.3 5.6l-0.6 5.6l-0.8 4.6l-0.3 5.0l-0.5 5.2l-0.3 5.4l0.2 5.6l-0.3 5.7l0.2 5.8l-0.5 5.8l-0.5 5.8l-0.4 5.8l0.6 5.7l-0.5 5.5l0.1 5.4l0.2 5.1l-0.6 4.8l-0.6 4.5l-0.2 4.1l0.2 3.7l0.7 3.3l-0.8 2.7" stroke="#fcc890" stroke-width="1.5" opacity="0.14" transform="translate(2 0.6)"/><path d="M473.3 421.0l-1.3 2.8l-0.5 4.0l-1.8 4.4l-1.0 5.2l-1.4 5.6l-2.3 5.6l-1.7 5.8l-1.5 5.8l-2.1 5.4l-1.6 5.2l-1.9 4.8l-1.4 4.7l-0.9 4.7l-1.1 4.6l-1.3 4.6l-1.3 4.7l-2.1 4.7l-1.1 5.2l-1.2 5.6l-0.8 6.2l-1.2 4.0l-1.0 4.2l-0.2 4.5l-0.3 4.6l-0.8 4.6l-1.1 4.7l-0.8 4.9l-0.2 5.1l-0.2 5.1l-0.5 5.2l-1.3 5.2l-0.9 5.3l-0.5 5.4l-0.7 5.5l0.3 5.6l-0.6 5.6l-0.8 4.6l-0.3 5.0l-0.5 5.2l-0.3 5.4l0.2 5.6l-0.3 5.7l0.2 5.8l-0.5 5.8l-0.5 5.8l-0.4 5.8l0.6 5.7l-0.5 5.5l0.1 5.4l0.2 5.1l-0.6 4.8l-0.6 4.5l-0.2 4.1l0.2 3.7l0.7 3.3l-0.8 2.7" stroke="#98521e" stroke-width="1.4" opacity="0.23"/>
<path d="M470.1 420.0l-0.6 3.1l-1.2 3.8l-1.8 4.4l-0.9 5.3l-1.4 5.5l-1.6 5.8l-1.7 5.8l-2.5 5.5l-1.3 5.7l-2.3 5.0l-1.1 5.0l-2.0 4.5l-1.0 4.7l-1.4 4.5l-1.2 4.6l-1.8 4.6l-0.9 5.1l-1.5 5.2l-0.9 5.8l-2.0 6.0l-0.8 4.1l-0.2 4.4l-0.9 4.4l-0.8 4.5l-0.8 4.7l-0.3 4.8l-0.9 4.9l-0.5 5.0l-0.5 5.1l-0.8 5.2l-0.4 5.3l-0.5 5.4l-0.8 5.4l0.2 5.6l0.1 5.6l-0.2 5.6l-1.0 4.6l-0.1 5.0l0.1 5.3l-0.1 5.5l-0.1 5.6l-0.3 5.7l-1.0 5.8l0.1 5.9l-0.4 5.8l-0.5 5.8l-0.7 5.7l-0.0 5.6l0.7 5.4l-0.6 5.1l-0.2 4.8l-0.0 4.5l0.2 4.2l-0.1 3.7l-0.1 3.3l0.3 2.8" stroke="#fcc890" stroke-width="2.2" opacity="0.31" transform="translate(2 0.6)"/><path d="M470.1 420.0l-0.6 3.1l-1.2 3.8l-1.8 4.4l-0.9 5.3l-1.4 5.5l-1.6 5.8l-1.7 5.8l-2.5 5.5l-1.3 5.7l-2.3 5.0l-1.1 5.0l-2.0 4.5l-1.0 4.7l-1.4 4.5l-1.2 4.6l-1.8 4.6l-0.9 5.1l-1.5 5.2l-0.9 5.8l-2.0 6.0l-0.8 4.1l-0.2 4.4l-0.9 4.4l-0.8 4.5l-0.8 4.7l-0.3 4.8l-0.9 4.9l-0.5 5.0l-0.5 5.1l-0.8 5.2l-0.4 5.3l-0.5 5.4l-0.8 5.4l0.2 5.6l0.1 5.6l-0.2 5.6l-1.0 4.6l-0.1 5.0l0.1 5.3l-0.1 5.5l-0.1 5.6l-0.3 5.7l-1.0 5.8l0.1 5.9l-0.4 5.8l-0.5 5.8l-0.7 5.7l-0.0 5.6l0.7 5.4l-0.6 5.1l-0.2 4.8l-0.0 4.5l0.2 4.2l-0.1 3.7l-0.1 3.3l0.3 2.8" stroke="#98521e" stroke-width="2.0" opacity="0.52"/>
<path d="M466.3 418.9l-0.7 3.0l-1.4 3.8l-0.6 4.7l-1.7 5.0l-1.8 5.4l-2.1 5.6l-1.1 6.0l-1.5 5.8l-1.5 5.6l-2.1 5.0l-2.0 4.7l-1.4 4.6l-0.8 4.7l-1.2 4.6l-2.0 4.4l-1.2 4.8l-1.9 4.9l-0.9 5.5l-0.9 5.9l-1.9 6.2l-0.9 4.2l-0.6 4.3l-1.0 4.4l-0.6 4.6l-0.5 4.7l-0.3 4.9l-0.6 4.9l-0.5 5.1l-1.1 5.1l-0.0 5.3l-0.9 5.3l-0.9 5.4l-0.3 5.5l0.1 5.6l-0.9 5.5l-0.8 5.6l0.6 4.8l-0.7 5.0l0.4 5.3l-0.5 5.4l-0.8 5.6l-0.4 5.7l0.0 5.8l0.1 5.9l-0.6 5.8l0.1 5.8l-0.1 5.7l0.1 5.6l0.3 5.4l-0.1 5.1l-0.9 4.8l-0.3 4.5l-0.2 4.1l0.4 3.7l-0.7 3.2l0.5 2.8" stroke="#fcc890" stroke-width="1.5" opacity="0.12" transform="translate(2 0.6)"/><path d="M466.3 418.9l-0.7 3.0l-1.4 3.8l-0.6 4.7l-1.7 5.0l-1.8 5.4l-2.1 5.6l-1.1 6.0l-1.5 5.8l-1.5 5.6l-2.1 5.0l-2.0 4.7l-1.4 4.6l-0.8 4.7l-1.2 4.6l-2.0 4.4l-1.2 4.8l-1.9 4.9l-0.9 5.5l-0.9 5.9l-1.9 6.2l-0.9 4.2l-0.6 4.3l-1.0 4.4l-0.6 4.6l-0.5 4.7l-0.3 4.9l-0.6 4.9l-0.5 5.1l-1.1 5.1l-0.0 5.3l-0.9 5.3l-0.9 5.4l-0.3 5.5l0.1 5.6l-0.9 5.5l-0.8 5.6l0.6 4.8l-0.7 5.0l0.4 5.3l-0.5 5.4l-0.8 5.6l-0.4 5.7l0.0 5.8l0.1 5.9l-0.6 5.8l0.1 5.8l-0.1 5.7l0.1 5.6l0.3 5.4l-0.1 5.1l-0.9 4.8l-0.3 4.5l-0.2 4.1l0.4 3.7l-0.7 3.2l0.5 2.8" stroke="#98521e" stroke-width="1.4" opacity="0.21"/>
</g>
<g clip-path="url(#cA)">
<path d="M489.1 300.8l-1.1 2.8l-0.3 3.8l-0.8 4.3l-1.1 4.8l-1.9 5.1l-1.5 5.5l-1.9 5.6l-1.8 5.7l-1.4 5.9l-1.2 5.8l-1.0 5.7l-1.4 5.2l-1.3 5.1l-1.4 5.1l-1.8 4.9l-1.9 4.9l-1.3 5.1l-2.2 4.8l-2.0 4.9l-1.4 5.0l-1.8 4.9l-0.7 5.2l-1.1 5.0l-1.2 5.0l-1.9 4.7l-0.6 5.0l-0.8 4.8l-1.3 4.6l-0.8 4.7l-0.8 4.8l-1.6 4.7l-0.6 5.0l-1.6 4.9l-0.5 5.3l-0.5 5.5l-1.3 5.6l-0.5 4.3l-1.1 4.2l-0.1 4.3l-1.1 4.2l-0.0 4.4l-0.6 4.4l-0.1 4.5l-0.7 4.6l-0.3 4.8l-1.0 4.9l0.0 5.2l-0.3 5.4l-0.5 5.7l-0.3 6.0l-0.8 6.3l-0.3 6.7l-0.0 4.1l-0.8 4.4l0.0 4.7l-0.7 4.9l-0.5 5.1l-0.2 5.3l0.1 5.5l-0.5 5.6l-0.7 5.7l-0.4 5.8l-0.4 5.9l0.7 6.0l-0.7 5.9l-0.1 5.9l-0.1 5.9l-0.6 5.8l0.4 5.7l0.1 5.6l-0.6 5.4l0.4 5.2l-1.0 5.0l-0.2 4.7l0.4 4.5l-0.5 4.2l-0.7 3.8l0.3 3.5l-0.5 3.1l0.1 2.7" stroke="#fcc890" stroke-width="1.5" opacity="0.12" transform="translate(2 0.6)"/><path d="M489.1 300.8l-1.1 2.8l-0.3 3.8l-0.8 4.3l-1.1 4.8l-1.9 5.1l-1.5 5.5l-1.9 5.6l-1.8 5.7l-1.4 5.9l-1.2 5.8l-1.0 5.7l-1.4 5.2l-1.3 5.1l-1.4 5.1l-1.8 4.9l-1.9 4.9l-1.3 5.1l-2.2 4.8l-2.0 4.9l-1.4 5.0l-1.8 4.9l-0.7 5.2l-1.1 5.0l-1.2 5.0l-1.9 4.7l-0.6 5.0l-0.8 4.8l-1.3 4.6l-0.8 4.7l-0.8 4.8l-1.6 4.7l-0.6 5.0l-1.6 4.9l-0.5 5.3l-0.5 5.5l-1.3 5.6l-0.5 4.3l-1.1 4.2l-0.1 4.3l-1.1 4.2l-0.0 4.4l-0.6 4.4l-0.1 4.5l-0.7 4.6l-0.3 4.8l-1.0 4.9l0.0 5.2l-0.3 5.4l-0.5 5.7l-0.3 6.0l-0.8 6.3l-0.3 6.7l-0.0 4.1l-0.8 4.4l0.0 4.7l-0.7 4.9l-0.5 5.1l-0.2 5.3l0.1 5.5l-0.5 5.6l-0.7 5.7l-0.4 5.8l-0.4 5.9l0.7 6.0l-0.7 5.9l-0.1 5.9l-0.1 5.9l-0.6 5.8l0.4 5.7l0.1 5.6l-0.6 5.4l0.4 5.2l-1.0 5.0l-0.2 4.7l0.4 4.5l-0.5 4.2l-0.7 3.8l0.3 3.5l-0.5 3.1l0.1 2.7" stroke="#98521e" stroke-width="1.4" opacity="0.20"/>
<path d="M486.5 300.1l-1.5 2.7l-0.4 3.8l-1.2 4.2l-1.5 4.7l-1.8 5.1l-1.8 5.4l-0.8 5.9l-1.2 5.9l-1.8 5.8l-1.2 5.8l-1.3 5.6l-2.4 4.9l-0.9 5.2l-1.6 5.0l-1.6 5.0l-1.8 4.9l-1.6 5.0l-2.1 4.8l-1.8 4.9l-0.9 5.2l-1.8 4.9l-1.4 5.0l-0.9 5.1l-1.4 5.0l-0.9 5.0l-1.6 4.7l-1.7 4.6l-0.4 4.9l-0.9 4.8l-0.8 4.8l-1.4 4.7l-0.9 4.9l-0.4 5.2l-1.4 5.2l-0.3 5.5l-1.7 5.6l-0.2 4.4l-0.5 4.3l-0.8 4.2l-1.1 4.2l-0.8 4.3l-0.1 4.4l0.2 4.6l-0.1 4.7l-0.4 4.8l-1.4 4.9l-1.0 5.1l-0.1 5.4l0.0 5.7l-0.8 6.0l-0.2 6.3l-0.4 6.7l-0.9 4.1l0.5 4.4l-0.5 4.7l-0.6 4.9l-0.2 5.1l-0.6 5.3l-0.4 5.5l0.7 5.7l0.2 5.8l-0.1 5.8l-0.9 5.9l0.1 5.9l-0.6 5.9l-0.2 5.9l0.2 5.9l-0.9 5.8l0.3 5.7l-0.5 5.5l0.1 5.4l0.1 5.2l-0.1 5.0l-0.1 4.7l-0.9 4.4l-0.1 4.2l0.3 3.9l-0.1 3.5l-1.0 3.1l-0.3 2.7" stroke="#fcc890" stroke-width="2.2" opacity="0.27" transform="translate(2 0.6)"/><path d="M486.5 300.1l-1.5 2.7l-0.4 3.8l-1.2 4.2l-1.5 4.7l-1.8 5.1l-1.8 5.4l-0.8 5.9l-1.2 5.9l-1.8 5.8l-1.2 5.8l-1.3 5.6l-2.4 4.9l-0.9 5.2l-1.6 5.0l-1.6 5.0l-1.8 4.9l-1.6 5.0l-2.1 4.8l-1.8 4.9l-0.9 5.2l-1.8 4.9l-1.4 5.0l-0.9 5.1l-1.4 5.0l-0.9 5.0l-1.6 4.7l-1.7 4.6l-0.4 4.9l-0.9 4.8l-0.8 4.8l-1.4 4.7l-0.9 4.9l-0.4 5.2l-1.4 5.2l-0.3 5.5l-1.7 5.6l-0.2 4.4l-0.5 4.3l-0.8 4.2l-1.1 4.2l-0.8 4.3l-0.1 4.4l0.2 4.6l-0.1 4.7l-0.4 4.8l-1.4 4.9l-1.0 5.1l-0.1 5.4l0.0 5.7l-0.8 6.0l-0.2 6.3l-0.4 6.7l-0.9 4.1l0.5 4.4l-0.5 4.7l-0.6 4.9l-0.2 5.1l-0.6 5.3l-0.4 5.5l0.7 5.7l0.2 5.8l-0.1 5.8l-0.9 5.9l0.1 5.9l-0.6 5.9l-0.2 5.9l0.2 5.9l-0.9 5.8l0.3 5.7l-0.5 5.5l0.1 5.4l0.1 5.2l-0.1 5.0l-0.1 4.7l-0.9 4.4l-0.1 4.2l0.3 3.9l-0.1 3.5l-1.0 3.1l-0.3 2.7" stroke="#98521e" stroke-width="2.0" opacity="0.45"/>
<path d="M482.4 299.0l-0.9 2.9l-1.3 3.5l-0.5 4.4l-1.4 4.7l-1.3 5.2l-0.8 5.7l-2.1 5.5l-0.9 6.0l-1.3 5.9l-1.7 5.7l-2.3 5.3l-1.9 5.0l-1.6 4.9l-1.4 5.0l-1.1 5.1l-1.5 5.0l-1.9 4.9l-0.8 5.2l-2.2 4.8l-1.0 5.2l-1.2 5.1l-1.8 4.9l-1.1 5.1l-1.6 5.0l-1.4 4.9l-1.4 4.8l-1.4 4.7l-0.4 4.9l-1.0 4.8l-0.8 4.8l-1.0 4.8l-1.7 4.8l-0.8 5.1l-0.2 5.4l-1.2 5.4l-0.8 5.7l-0.6 4.4l-0.3 4.4l-0.5 4.3l-1.4 4.2l-0.2 4.4l-0.3 4.4l-0.9 4.5l-0.3 4.7l-0.2 4.8l-0.8 4.9l-0.7 5.2l-0.4 5.4l-0.1 5.7l-0.5 6.0l-0.2 6.4l-0.8 6.7l-0.2 4.1l0.2 4.4l-0.2 4.7l-1.0 4.9l-0.1 5.2l-0.8 5.3l0.2 5.5l0.2 5.7l-0.2 5.8l0.0 5.9l-0.9 5.9l-0.8 5.9l-0.4 5.9l0.5 5.9l0.3 5.9l-0.8 5.8l-0.7 5.7l-0.2 5.5l-0.2 5.4l0.3 5.2l-0.4 5.0l-0.4 4.7l0.6 4.5l-0.4 4.2l0.3 3.9l-0.6 3.5l-0.1 3.1l-0.6 2.7" stroke="#fcc890" stroke-width="1.5" opacity="0.11" transform="translate(2 0.6)"/><path d="M482.4 299.0l-0.9 2.9l-1.3 3.5l-0.5 4.4l-1.4 4.7l-1.3 5.2l-0.8 5.7l-2.1 5.5l-0.9 6.0l-1.3 5.9l-1.7 5.7l-2.3 5.3l-1.9 5.0l-1.6 4.9l-1.4 5.0l-1.1 5.1l-1.5 5.0l-1.9 4.9l-0.8 5.2l-2.2 4.8l-1.0 5.2l-1.2 5.1l-1.8 4.9l-1.1 5.1l-1.6 5.0l-1.4 4.9l-1.4 4.8l-1.4 4.7l-0.4 4.9l-1.0 4.8l-0.8 4.8l-1.0 4.8l-1.7 4.8l-0.8 5.1l-0.2 5.4l-1.2 5.4l-0.8 5.7l-0.6 4.4l-0.3 4.4l-0.5 4.3l-1.4 4.2l-0.2 4.4l-0.3 4.4l-0.9 4.5l-0.3 4.7l-0.2 4.8l-0.8 4.9l-0.7 5.2l-0.4 5.4l-0.1 5.7l-0.5 6.0l-0.2 6.4l-0.8 6.7l-0.2 4.1l0.2 4.4l-0.2 4.7l-1.0 4.9l-0.1 5.2l-0.8 5.3l0.2 5.5l0.2 5.7l-0.2 5.8l0.0 5.9l-0.9 5.9l-0.8 5.9l-0.4 5.9l0.5 5.9l0.3 5.9l-0.8 5.8l-0.7 5.7l-0.2 5.5l-0.2 5.4l0.3 5.2l-0.4 5.0l-0.4 4.7l0.6 4.5l-0.4 4.2l0.3 3.9l-0.6 3.5l-0.1 3.1l-0.6 2.7" stroke="#98521e" stroke-width="1.4" opacity="0.18"/>
</g>
<g clip-path="url(#cA)">
<path d="M548.3 330.2l-0.6 2.7l-0.3 3.3l-0.5 3.8l-0.3 4.2l-0.2 4.6l-0.2 5.0l0.4 5.3l0.0 5.5l-0.4 5.6l-1.2 5.7l-0.2 5.8l-0.7 5.8l-0.1 5.9l-0.3 5.8l-0.2 5.7l-1.1 5.4l-0.6 5.2l-0.7 4.9l-1.1 5.2l-0.5 5.2l-0.4 5.1l-1.1 4.9l-1.4 4.8l-1.1 4.8l-0.6 4.9l-0.9 4.8l-1.6 4.7l-0.7 4.9l-1.4 4.8l-1.3 4.9l-1.5 4.9l-0.7 5.2l-0.7 5.4l-1.2 5.4l-0.3 4.6l-0.8 4.6l-0.8 4.7l-0.8 4.8l-0.5 4.9l-0.4 5.0l-0.5 5.0l-1.3 4.9l-0.4 5.1l-0.9 5.1l-0.3 5.2l-0.1 5.2l-0.9 5.1l-0.2 5.2l-1.3 5.1l-0.6 5.1l-0.5 5.1l-0.3 5.1l-0.8 5.0l-0.1 5.0l-0.9 5.1l-0.4 5.3l-0.3 5.5l0.4 5.7l-0.6 5.7l-0.3 5.8l0.1 5.8l-0.5 5.8l-0.2 5.8l-0.1 5.7l-0.0 5.6l-0.1 5.4l-0.1 5.2l-1.1 4.9l-0.2 4.7l0.0 4.4l0.0 4.0l-0.1 3.6l-0.3 3.2l0.3 2.8" stroke="#fcc890" stroke-width="1.5" opacity="0.12" transform="translate(2 0.6)"/><path d="M548.3 330.2l-0.6 2.7l-0.3 3.3l-0.5 3.8l-0.3 4.2l-0.2 4.6l-0.2 5.0l0.4 5.3l0.0 5.5l-0.4 5.6l-1.2 5.7l-0.2 5.8l-0.7 5.8l-0.1 5.9l-0.3 5.8l-0.2 5.7l-1.1 5.4l-0.6 5.2l-0.7 4.9l-1.1 5.2l-0.5 5.2l-0.4 5.1l-1.1 4.9l-1.4 4.8l-1.1 4.8l-0.6 4.9l-0.9 4.8l-1.6 4.7l-0.7 4.9l-1.4 4.8l-1.3 4.9l-1.5 4.9l-0.7 5.2l-0.7 5.4l-1.2 5.4l-0.3 4.6l-0.8 4.6l-0.8 4.7l-0.8 4.8l-0.5 4.9l-0.4 5.0l-0.5 5.0l-1.3 4.9l-0.4 5.1l-0.9 5.1l-0.3 5.2l-0.1 5.2l-0.9 5.1l-0.2 5.2l-1.3 5.1l-0.6 5.1l-0.5 5.1l-0.3 5.1l-0.8 5.0l-0.1 5.0l-0.9 5.1l-0.4 5.3l-0.3 5.5l0.4 5.7l-0.6 5.7l-0.3 5.8l0.1 5.8l-0.5 5.8l-0.2 5.8l-0.1 5.7l-0.0 5.6l-0.1 5.4l-0.1 5.2l-1.1 4.9l-0.2 4.7l0.0 4.4l0.0 4.0l-0.1 3.6l-0.3 3.2l0.3 2.8" stroke="#98521e" stroke-width="1.4" opacity="0.20"/>
<path d="M544.5 330.0l0.4 2.8l0.2 3.3l-0.6 3.8l0.1 4.3l-0.3 4.6l-0.6 4.9l-0.5 5.2l-0.1 5.5l-0.5 5.6l0.1 5.8l-0.1 5.8l-1.1 5.8l-0.2 5.8l-1.1 5.7l0.0 5.6l-1.2 5.3l-0.1 5.2l-1.1 4.8l-0.9 5.2l-0.2 5.2l-1.1 5.0l-1.5 4.8l-1.3 4.8l-0.9 4.8l-0.4 4.9l-0.9 4.8l-1.1 4.8l-0.6 4.9l-1.8 4.7l-0.6 5.1l-1.7 4.9l-0.6 5.3l-1.6 5.2l-0.8 5.6l-0.9 4.5l-0.9 4.6l-0.2 4.8l-0.7 4.8l-0.6 4.9l-0.6 4.9l-0.6 5.0l-0.3 5.1l-0.6 5.1l-1.3 5.0l0.1 5.2l-0.3 5.2l-1.1 5.1l-0.7 5.2l-0.7 5.1l-0.3 5.2l-0.9 5.1l-0.5 5.1l-0.3 5.1l-0.2 5.0l-0.7 5.1l0.1 5.4l-0.5 5.5l-1.0 5.6l-0.5 5.7l0.5 5.9l-0.5 5.8l-0.7 5.8l0.3 5.8l-0.0 5.7l-0.1 5.6l-0.3 5.4l-0.3 5.2l0.2 5.0l-1.1 4.6l-0.1 4.4l-0.2 4.0l-0.3 3.6l-0.1 3.2l-0.1 2.7" stroke="#fcc890" stroke-width="2.2" opacity="0.27" transform="translate(2 0.6)"/><path d="M544.5 330.0l0.4 2.8l0.2 3.3l-0.6 3.8l0.1 4.3l-0.3 4.6l-0.6 4.9l-0.5 5.2l-0.1 5.5l-0.5 5.6l0.1 5.8l-0.1 5.8l-1.1 5.8l-0.2 5.8l-1.1 5.7l0.0 5.6l-1.2 5.3l-0.1 5.2l-1.1 4.8l-0.9 5.2l-0.2 5.2l-1.1 5.0l-1.5 4.8l-1.3 4.8l-0.9 4.8l-0.4 4.9l-0.9 4.8l-1.1 4.8l-0.6 4.9l-1.8 4.7l-0.6 5.1l-1.7 4.9l-0.6 5.3l-1.6 5.2l-0.8 5.6l-0.9 4.5l-0.9 4.6l-0.2 4.8l-0.7 4.8l-0.6 4.9l-0.6 4.9l-0.6 5.0l-0.3 5.1l-0.6 5.1l-1.3 5.0l0.1 5.2l-0.3 5.2l-1.1 5.1l-0.7 5.2l-0.7 5.1l-0.3 5.2l-0.9 5.1l-0.5 5.1l-0.3 5.1l-0.2 5.0l-0.7 5.1l0.1 5.4l-0.5 5.5l-1.0 5.6l-0.5 5.7l0.5 5.9l-0.5 5.8l-0.7 5.8l0.3 5.8l-0.0 5.7l-0.1 5.6l-0.3 5.4l-0.3 5.2l0.2 5.0l-1.1 4.6l-0.1 4.4l-0.2 4.0l-0.3 3.6l-0.1 3.2l-0.1 2.7" stroke="#98521e" stroke-width="2.0" opacity="0.45"/>
<path d="M541.9 329.8l-0.4 2.8l-0.3 3.3l0.1 3.8l-0.4 4.2l-0.9 4.6l-0.6 4.9l0.0 5.2l0.2 5.5l0.0 5.6l-0.9 5.7l0.1 5.8l-0.9 5.8l0.1 5.8l-0.6 5.7l-0.3 5.6l-0.9 5.3l-0.4 5.2l-0.6 4.8l-1.6 5.1l-0.7 5.1l-1.2 4.9l-0.7 4.9l-1.4 4.7l-0.7 4.8l-1.2 4.7l-1.2 4.7l-1.2 4.8l-1.1 4.8l-1.4 4.8l-0.8 5.1l-1.4 5.0l-0.1 5.4l-1.2 5.4l-1.5 5.5l-0.8 4.6l-0.4 4.7l0.1 4.9l-0.6 4.8l-1.2 4.8l-0.5 5.0l-0.7 5.0l-0.5 5.1l-0.3 5.1l-0.9 5.1l-0.3 5.2l-1.0 5.1l-0.9 5.1l-0.6 5.2l-0.2 5.2l-0.2 5.2l-0.6 5.1l-0.6 5.1l-0.5 5.1l-0.0 5.1l-0.3 5.2l-1.0 5.3l0.1 5.6l-0.2 5.7l-0.8 5.7l-0.1 5.8l-0.9 5.8l-0.3 5.8l0.3 5.8l-0.6 5.7l-0.5 5.5l-0.2 5.4l0.5 5.2l-0.5 4.9l-0.7 4.7l0.1 4.4l-0.6 4.0l0.4 3.6l0.1 3.2l-0.8 2.7" stroke="#fcc890" stroke-width="1.5" opacity="0.11" transform="translate(2 0.6)"/><path d="M541.9 329.8l-0.4 2.8l-0.3 3.3l0.1 3.8l-0.4 4.2l-0.9 4.6l-0.6 4.9l0.0 5.2l0.2 5.5l0.0 5.6l-0.9 5.7l0.1 5.8l-0.9 5.8l0.1 5.8l-0.6 5.7l-0.3 5.6l-0.9 5.3l-0.4 5.2l-0.6 4.8l-1.6 5.1l-0.7 5.1l-1.2 4.9l-0.7 4.9l-1.4 4.7l-0.7 4.8l-1.2 4.7l-1.2 4.7l-1.2 4.8l-1.1 4.8l-1.4 4.8l-0.8 5.1l-1.4 5.0l-0.1 5.4l-1.2 5.4l-1.5 5.5l-0.8 4.6l-0.4 4.7l0.1 4.9l-0.6 4.8l-1.2 4.8l-0.5 5.0l-0.7 5.0l-0.5 5.1l-0.3 5.1l-0.9 5.1l-0.3 5.2l-1.0 5.1l-0.9 5.1l-0.6 5.2l-0.2 5.2l-0.2 5.2l-0.6 5.1l-0.6 5.1l-0.5 5.1l-0.0 5.1l-0.3 5.2l-1.0 5.3l0.1 5.6l-0.2 5.7l-0.8 5.7l-0.1 5.8l-0.9 5.8l-0.3 5.8l0.3 5.8l-0.6 5.7l-0.5 5.5l-0.2 5.4l0.5 5.2l-0.5 4.9l-0.7 4.7l0.1 4.4l-0.6 4.0l0.4 3.6l0.1 3.2l-0.8 2.7" stroke="#98521e" stroke-width="1.4" opacity="0.18"/>
</g>
<g clip-path="url(#cB)">
<path d="M657.6 100.8l0.0 0.6l1.1 5.2l1.0 4.0l0.2 5.6l1.7 6.1l1.1 6.5l0.7 6.2l2.0 5.0l1.5 5.5l1.6 5.1l2.0 4.5l2.2 3.8l1.8 3.1l4.8 5.8l5.3 1.9l3.7 0.1l4.0 -2.1l4.5 -2.9l2.7 -2.7l3.0 -3.7l3.5 -3.8l2.4 -4.6l2.1 -4.4l1.3 -4.7l1.2 -5.2l1.4 -5.5l0.9 -5.5l0.5 -5.1l0.9 -5.9l0.2 -5.7l0.5 -4.9l-0.2 -3.5" stroke="#fcc890" stroke-width="1.5" opacity="0.19" transform="translate(2 0.6)"/><path d="M657.6 100.8l0.0 0.6l1.1 5.2l1.0 4.0l0.2 5.6l1.7 6.1l1.1 6.5l0.7 6.2l2.0 5.0l1.5 5.5l1.6 5.1l2.0 4.5l2.2 3.8l1.8 3.1l4.8 5.8l5.3 1.9l3.7 0.1l4.0 -2.1l4.5 -2.9l2.7 -2.7l3.0 -3.7l3.5 -3.8l2.4 -4.6l2.1 -4.4l1.3 -4.7l1.2 -5.2l1.4 -5.5l0.9 -5.5l0.5 -5.1l0.9 -5.9l0.2 -5.7l0.5 -4.9l-0.2 -3.5" stroke="#98521e" stroke-width="1.4" opacity="0.32"/>
<path d="M654.8 99.9l-0.2 1.4l0.3 5.6l0.7 4.2l0.7 5.6l1.4 6.2l1.1 6.5l1.3 6.2l2.0 5.2l1.3 5.7l1.6 5.3l2.8 4.4l2.2 4.0l1.9 3.7l5.5 6.4l6.5 2.5l4.8 -0.7l5.3 -1.0l4.8 -3.8l3.1 -3.0l3.5 -3.6l3.4 -4.2l2.6 -4.8l2.0 -4.9l2.0 -4.9l1.7 -5.5l0.5 -5.8l0.3 -5.6l1.3 -5.0l0.1 -6.0l0.8 -5.7l0.6 -4.9l0.1 -3.4" stroke="#fcc890" stroke-width="2.2" opacity="0.43" transform="translate(2 0.6)"/><path d="M654.8 99.9l-0.2 1.4l0.3 5.6l0.7 4.2l0.7 5.6l1.4 6.2l1.1 6.5l1.3 6.2l2.0 5.2l1.3 5.7l1.6 5.3l2.8 4.4l2.2 4.0l1.9 3.7l5.5 6.4l6.5 2.5l4.8 -0.7l5.3 -1.0l4.8 -3.8l3.1 -3.0l3.5 -3.6l3.4 -4.2l2.6 -4.8l2.0 -4.9l2.0 -4.9l1.7 -5.5l0.5 -5.8l0.3 -5.6l1.3 -5.0l0.1 -6.0l0.8 -5.7l0.6 -4.9l0.1 -3.4" stroke="#98521e" stroke-width="2.0" opacity="0.72"/>
<path d="M651.4 98.8l-0.3 2.5l0.7 6.0l0.8 4.4l1.2 5.5l1.1 6.3l0.7 6.7l1.4 6.3l1.3 5.6l1.8 5.7l1.9 5.3l2.0 4.9l2.6 4.2l2.5 4.1l6.7 6.2l7.4 3.1l5.9 -0.2l6.1 -1.5l5.7 -3.6l3.5 -3.4l3.2 -4.2l3.2 -4.6l2.9 -5.0l2.4 -5.1l2.5 -5.2l1.4 -5.8l1.0 -5.8l1.1 -5.5l0.6 -5.0l1.0 -6.0l0.6 -5.8l0.1 -4.9l0.2 -3.4" stroke="#fcc890" stroke-width="1.5" opacity="0.17" transform="translate(2 0.6)"/><path d="M651.4 98.8l-0.3 2.5l0.7 6.0l0.8 4.4l1.2 5.5l1.1 6.3l0.7 6.7l1.4 6.3l1.3 5.6l1.8 5.7l1.9 5.3l2.0 4.9l2.6 4.2l2.5 4.1l6.7 6.2l7.4 3.1l5.9 -0.2l6.1 -1.5l5.7 -3.6l3.5 -3.4l3.2 -4.2l3.2 -4.6l2.9 -5.0l2.4 -5.1l2.5 -5.2l1.4 -5.8l1.0 -5.8l1.1 -5.5l0.6 -5.0l1.0 -6.0l0.6 -5.8l0.1 -4.9l0.2 -3.4" stroke="#98521e" stroke-width="1.4" opacity="0.29"/>
</g>
<g clip-path="url(#cB)">
<path d="M647.9 99.9l0.0 3.0l0.1 4.0l0.0 4.7l0.1 5.2l-0.1 5.6l0.4 5.8l0.9 5.8l0.8 5.6l0.4 5.2l0.4 4.7l1.5 5.5l1.0 5.7l0.9 5.6l1.0 5.4l2.1 4.8l1.6 4.5l2.2 3.7l1.8 2.8l3.3 3.8l3.9 2.6l4.3 2.2l4.8 0.4l4.4 0.6l5.1 -1.0l4.8 -2.0l5.1 -2.3l4.9 -4.0l3.4 -3.1l3.1 -4.2l2.7 -4.8l3.5 -4.7l2.7 -5.6l1.7 -6.3l1.3 -4.1l0.8 -4.9l0.8 -5.3l1.0 -5.6l0.3 -5.8l0.1 -5.7l-0.1 -5.4l0.7 -4.9l0.8 -4.3l-0.1 -3.6l1.6 -8.0l0.3 -1.8" stroke="#fcc890" stroke-width="1.5" opacity="0.07" transform="translate(2 0.6)"/><path d="M647.9 99.9l0.0 3.0l0.1 4.0l0.0 4.7l0.1 5.2l-0.1 5.6l0.4 5.8l0.9 5.8l0.8 5.6l0.4 5.2l0.4 4.7l1.5 5.5l1.0 5.7l0.9 5.6l1.0 5.4l2.1 4.8l1.6 4.5l2.2 3.7l1.8 2.8l3.3 3.8l3.9 2.6l4.3 2.2l4.8 0.4l4.4 0.6l5.1 -1.0l4.8 -2.0l5.1 -2.3l4.9 -4.0l3.4 -3.1l3.1 -4.2l2.7 -4.8l3.5 -4.7l2.7 -5.6l1.7 -6.3l1.3 -4.1l0.8 -4.9l0.8 -5.3l1.0 -5.6l0.3 -5.8l0.1 -5.7l-0.1 -5.4l0.7 -4.9l0.8 -4.3l-0.1 -3.6l1.6 -8.0l0.3 -1.8" stroke="#98521e" stroke-width="1.4" opacity="0.12"/>
<path d="M644.5 100.0l0.8 3.0l0.5 3.9l-0.3 4.7l-0.2 5.3l-0.0 5.6l0.7 5.8l-0.2 5.9l1.1 5.6l0.3 5.4l0.8 4.8l1.2 5.6l1.1 5.7l0.7 5.8l1.1 5.5l1.3 5.3l2.1 4.6l1.6 4.4l2.5 3.4l4.3 4.1l4.8 3.0l5.3 1.2l5.1 1.1l4.8 0.1l5.8 -0.1l5.6 -2.1l5.3 -3.3l5.5 -4.0l3.6 -3.4l2.7 -4.7l3.2 -4.7l3.0 -5.3l2.7 -5.8l2.3 -6.3l1.2 -4.3l0.7 -5.0l1.3 -5.3l0.8 -5.7l0.1 -5.8l0.3 -5.7l0.1 -5.4l0.9 -4.9l0.6 -4.3l0.5 -3.5l0.6 -8.1l-0.3 -1.9" stroke="#fcc890" stroke-width="2.2" opacity="0.16" transform="translate(2 0.6)"/><path d="M644.5 100.0l0.8 3.0l0.5 3.9l-0.3 4.7l-0.2 5.3l-0.0 5.6l0.7 5.8l-0.2 5.9l1.1 5.6l0.3 5.4l0.8 4.8l1.2 5.6l1.1 5.7l0.7 5.8l1.1 5.5l1.3 5.3l2.1 4.6l1.6 4.4l2.5 3.4l4.3 4.1l4.8 3.0l5.3 1.2l5.1 1.1l4.8 0.1l5.8 -0.1l5.6 -2.1l5.3 -3.3l5.5 -4.0l3.6 -3.4l2.7 -4.7l3.2 -4.7l3.0 -5.3l2.7 -5.8l2.3 -6.3l1.2 -4.3l0.7 -5.0l1.3 -5.3l0.8 -5.7l0.1 -5.8l0.3 -5.7l0.1 -5.4l0.9 -4.9l0.6 -4.3l0.5 -3.5l0.6 -8.1l-0.3 -1.9" stroke="#98521e" stroke-width="2.0" opacity="0.26"/>
<path d="M642.2 100.1l-0.1 3.0l0.4 3.9l-0.4 4.7l0.5 5.2l0.6 5.6l0.4 5.8l0.3 5.9l-0.5 5.8l1.0 5.4l0.6 5.0l0.3 5.9l1.5 5.7l1.1 5.8l1.7 5.5l1.1 5.5l1.8 4.9l2.3 4.4l2.4 4.1l4.9 4.5l5.2 3.8l5.8 1.9l5.6 1.2l5.4 0.1l6.3 -0.9l6.5 -1.8l5.8 -3.9l5.8 -4.4l3.5 -4.1l3.0 -4.8l4.0 -4.5l2.8 -5.7l3.3 -5.9l1.8 -6.8l1.8 -4.5l1.0 -5.2l0.7 -5.6l0.5 -5.8l0.0 -5.9l1.0 -5.7l0.8 -5.4l0.3 -4.9l0.1 -4.3l0.5 -3.4l0.8 -8.2l-0.2 -2.0" stroke="#fcc890" stroke-width="1.5" opacity="0.06" transform="translate(2 0.6)"/><path d="M642.2 100.1l-0.1 3.0l0.4 3.9l-0.4 4.7l0.5 5.2l0.6 5.6l0.4 5.8l0.3 5.9l-0.5 5.8l1.0 5.4l0.6 5.0l0.3 5.9l1.5 5.7l1.1 5.8l1.7 5.5l1.1 5.5l1.8 4.9l2.3 4.4l2.4 4.1l4.9 4.5l5.2 3.8l5.8 1.9l5.6 1.2l5.4 0.1l6.3 -0.9l6.5 -1.8l5.8 -3.9l5.8 -4.4l3.5 -4.1l3.0 -4.8l4.0 -4.5l2.8 -5.7l3.3 -5.9l1.8 -6.8l1.8 -4.5l1.0 -5.2l0.7 -5.6l0.5 -5.8l0.0 -5.9l1.0 -5.7l0.8 -5.4l0.3 -4.9l0.1 -4.3l0.5 -3.4l0.8 -8.2l-0.2 -2.0" stroke="#98521e" stroke-width="1.4" opacity="0.10"/>
</g>
<g clip-path="url(#cB)">
<path d="M639.4 99.9l0.4 2.9l0.1 3.4l0.0 3.9l-0.3 4.3l-0.5 4.7l0.4 5.0l-0.3 5.3l-0.1 5.6l0.8 5.8l0.4 5.9l-0.3 6.0l0.7 6.1l0.5 6.1l0.4 6.0l-0.4 6.0l-0.3 5.8l0.9 5.6l0.8 5.3l0.0 5.1l0.5 4.7l-0.3 4.4l0.8 6.4l1.1 5.9l1.3 5.5l0.8 5.3l1.7 4.8l1.7 4.7l0.9 4.8l1.3 4.6l1.8 4.5l0.7 4.9l1.8 4.8l1.3 5.1l0.1 5.6l1.0 4.8l-0.1 4.9l0.6 4.8l0.2 4.8l0.7 4.8l0.1 4.9l-0.2 4.9l0.3 5.0l0.7 5.0l-0.7 5.1l-0.3 5.2l0.4 5.3l0.4 5.5l-0.2 5.6l-0.2 5.8l-0.2 4.7l-0.2 4.7l0.8 4.8l-0.1 4.8l-0.7 4.9l-0.3 4.9l0.1 5.0l-0.3 5.1l-0.1 5.1l0.4 5.2l0.1 5.3l-0.7 5.3l-0.2 5.4l-0.0 5.5l-0.6 5.5l0.2 5.6l-0.5 5.7l0.2 5.8l-0.1 5.8l-0.2 4.6l-0.6 4.9l-0.1 5.1l0.3 5.3l-0.6 5.5l0.7 5.6l-0.3 5.7l-0.0 5.8l-0.1 5.8l0.1 5.9l0.6 5.9l-0.3 5.8l-0.4 5.8l-0.4 5.7l0.2 5.5l0.3 5.4l0.6 5.2l0.4 5.0l0.0 4.8l0.0 4.5l0.0 4.2l0.2 3.9l-0.2 3.5l0.1 3.1l0.1 2.7" stroke="#fcc890" stroke-width="2.2" opacity="0.18" transform="translate(2 0.6)"/><path d="M639.4 99.9l0.4 2.9l0.1 3.4l0.0 3.9l-0.3 4.3l-0.5 4.7l0.4 5.0l-0.3 5.3l-0.1 5.6l0.8 5.8l0.4 5.9l-0.3 6.0l0.7 6.1l0.5 6.1l0.4 6.0l-0.4 6.0l-0.3 5.8l0.9 5.6l0.8 5.3l0.0 5.1l0.5 4.7l-0.3 4.4l0.8 6.4l1.1 5.9l1.3 5.5l0.8 5.3l1.7 4.8l1.7 4.7l0.9 4.8l1.3 4.6l1.8 4.5l0.7 4.9l1.8 4.8l1.3 5.1l0.1 5.6l1.0 4.8l-0.1 4.9l0.6 4.8l0.2 4.8l0.7 4.8l0.1 4.9l-0.2 4.9l0.3 5.0l0.7 5.0l-0.7 5.1l-0.3 5.2l0.4 5.3l0.4 5.5l-0.2 5.6l-0.2 5.8l-0.2 4.7l-0.2 4.7l0.8 4.8l-0.1 4.8l-0.7 4.9l-0.3 4.9l0.1 5.0l-0.3 5.1l-0.1 5.1l0.4 5.2l0.1 5.3l-0.7 5.3l-0.2 5.4l-0.0 5.5l-0.6 5.5l0.2 5.6l-0.5 5.7l0.2 5.8l-0.1 5.8l-0.2 4.6l-0.6 4.9l-0.1 5.1l0.3 5.3l-0.6 5.5l0.7 5.6l-0.3 5.7l-0.0 5.8l-0.1 5.8l0.1 5.9l0.6 5.9l-0.3 5.8l-0.4 5.8l-0.4 5.7l0.2 5.5l0.3 5.4l0.6 5.2l0.4 5.0l0.0 4.8l0.0 4.5l0.0 4.2l0.2 3.9l-0.2 3.5l0.1 3.1l0.1 2.7" stroke="#98521e" stroke-width="2.0" opacity="0.29"/>
<path d="M636.6 100.0l0.2 2.9l-0.5 3.4l0.3 3.9l0.3 4.3l-0.4 4.7l-0.4 5.1l0.0 5.3l0.6 5.6l0.5 5.8l-0.3 5.9l0.6 6.0l0.5 6.1l-0.7 6.1l0.1 6.0l0.4 5.9l0.9 5.8l0.4 5.6l0.2 5.4l0.7 5.1l-0.4 4.8l0.8 4.3l0.6 6.5l0.7 6.1l0.9 5.7l1.9 5.1l1.2 5.0l1.8 4.7l1.6 4.6l1.1 4.7l1.2 4.7l0.5 4.9l0.7 4.9l0.7 5.1l1.2 5.3l0.6 4.7l0.3 4.8l0.4 4.7l0.8 4.7l0.2 4.8l0.6 4.8l-0.1 4.9l0.4 4.9l-0.3 5.0l0.3 5.1l-0.3 5.2l0.2 5.3l0.0 5.5l0.2 5.6l0.3 5.8l0.4 4.6l0.2 4.7l-0.4 4.7l0.3 4.8l-0.8 4.9l0.0 4.9l-0.8 5.0l-0.2 5.1l-0.4 5.1l0.6 5.2l-1.0 5.2l-0.1 5.3l-0.2 5.4l0.4 5.5l-1.0 5.5l0.2 5.6l0.2 5.7l-0.8 5.8l0.6 5.9l-0.4 4.6l-0.5 4.9l-0.1 5.1l0.4 5.3l0.3 5.5l-0.6 5.6l-0.3 5.7l0.1 5.8l0.2 5.8l0.7 5.9l-0.7 5.9l-0.0 5.8l0.5 5.8l0.4 5.7l-0.0 5.5l-0.1 5.4l0.3 5.2l-0.1 5.0l-0.2 4.8l-0.3 4.5l-0.3 4.2l-0.0 3.9l0.1 3.5l-0.0 3.1l0.5 2.7" stroke="#fcc890" stroke-width="3.1" opacity="0.39" transform="translate(2 0.6)"/><path d="M636.6 100.0l0.2 2.9l-0.5 3.4l0.3 3.9l0.3 4.3l-0.4 4.7l-0.4 5.1l0.0 5.3l0.6 5.6l0.5 5.8l-0.3 5.9l0.6 6.0l0.5 6.1l-0.7 6.1l0.1 6.0l0.4 5.9l0.9 5.8l0.4 5.6l0.2 5.4l0.7 5.1l-0.4 4.8l0.8 4.3l0.6 6.5l0.7 6.1l0.9 5.7l1.9 5.1l1.2 5.0l1.8 4.7l1.6 4.6l1.1 4.7l1.2 4.7l0.5 4.9l0.7 4.9l0.7 5.1l1.2 5.3l0.6 4.7l0.3 4.8l0.4 4.7l0.8 4.7l0.2 4.8l0.6 4.8l-0.1 4.9l0.4 4.9l-0.3 5.0l0.3 5.1l-0.3 5.2l0.2 5.3l0.0 5.5l0.2 5.6l0.3 5.8l0.4 4.6l0.2 4.7l-0.4 4.7l0.3 4.8l-0.8 4.9l0.0 4.9l-0.8 5.0l-0.2 5.1l-0.4 5.1l0.6 5.2l-1.0 5.2l-0.1 5.3l-0.2 5.4l0.4 5.5l-1.0 5.5l0.2 5.6l0.2 5.7l-0.8 5.8l0.6 5.9l-0.4 4.6l-0.5 4.9l-0.1 5.1l0.4 5.3l0.3 5.5l-0.6 5.6l-0.3 5.7l0.1 5.8l0.2 5.8l0.7 5.9l-0.7 5.9l-0.0 5.8l0.5 5.8l0.4 5.7l-0.0 5.5l-0.1 5.4l0.3 5.2l-0.1 5.0l-0.2 4.8l-0.3 4.5l-0.3 4.2l-0.0 3.9l0.1 3.5l-0.0 3.1l0.5 2.7" stroke="#98521e" stroke-width="2.8" opacity="0.65"/>
<path d="M632.4 100.1l-0.0 2.8l0.7 3.4l-0.2 3.9l0.3 4.3l0.1 4.7l-0.5 5.1l-0.2 5.3l0.6 5.6l-0.0 5.8l-0.1 5.9l0.6 6.0l0.6 6.1l-0.3 6.1l0.2 6.1l0.5 6.0l0.1 5.8l0.5 5.6l0.2 5.4l-0.2 5.2l1.2 4.7l-0.1 4.5l1.1 6.5l0.9 6.1l1.5 5.7l1.4 5.3l1.0 5.2l1.7 4.7l0.7 4.9l1.7 4.5l1.5 4.5l1.2 4.6l1.1 4.7l0.8 4.9l1.4 5.1l0.2 4.7l0.9 4.7l0.1 4.7l-0.3 4.8l0.8 4.7l0.2 4.8l-0.2 4.9l0.5 4.9l-0.1 5.0l-0.4 5.1l-0.1 5.2l0.2 5.3l0.9 5.4l0.3 5.6l-0.6 5.7l-0.6 4.6l0.5 4.7l0.1 4.7l-0.1 4.8l-0.5 4.8l-0.6 4.9l0.5 5.0l-0.1 5.1l-0.6 5.1l0.1 5.2l-0.7 5.2l-0.1 5.3l-0.2 5.4l-0.0 5.5l-0.4 5.6l0.2 5.6l-0.3 5.7l-0.7 5.8l0.1 5.9l-0.3 4.6l0.8 4.9l-0.6 5.1l-0.0 5.3l0.2 5.5l0.1 5.6l-0.2 5.7l-0.4 5.8l0.0 5.8l-0.2 5.9l0.9 5.9l-0.1 5.8l0.6 5.8l-0.3 5.7l-0.2 5.5l0.5 5.4l-0.7 5.2l-0.3 5.0l0.6 4.8l-0.6 4.5l0.2 4.2l0.5 3.9l-0.5 3.5l0.3 3.1l-0.1 2.7" stroke="#fcc890" stroke-width="2.2" opacity="0.16" transform="translate(2 0.6)"/><path d="M632.4 100.1l-0.0 2.8l0.7 3.4l-0.2 3.9l0.3 4.3l0.1 4.7l-0.5 5.1l-0.2 5.3l0.6 5.6l-0.0 5.8l-0.1 5.9l0.6 6.0l0.6 6.1l-0.3 6.1l0.2 6.1l0.5 6.0l0.1 5.8l0.5 5.6l0.2 5.4l-0.2 5.2l1.2 4.7l-0.1 4.5l1.1 6.5l0.9 6.1l1.5 5.7l1.4 5.3l1.0 5.2l1.7 4.7l0.7 4.9l1.7 4.5l1.5 4.5l1.2 4.6l1.1 4.7l0.8 4.9l1.4 5.1l0.2 4.7l0.9 4.7l0.1 4.7l-0.3 4.8l0.8 4.7l0.2 4.8l-0.2 4.9l0.5 4.9l-0.1 5.0l-0.4 5.1l-0.1 5.2l0.2 5.3l0.9 5.4l0.3 5.6l-0.6 5.7l-0.6 4.6l0.5 4.7l0.1 4.7l-0.1 4.8l-0.5 4.8l-0.6 4.9l0.5 5.0l-0.1 5.1l-0.6 5.1l0.1 5.2l-0.7 5.2l-0.1 5.3l-0.2 5.4l-0.0 5.5l-0.4 5.6l0.2 5.6l-0.3 5.7l-0.7 5.8l0.1 5.9l-0.3 4.6l0.8 4.9l-0.6 5.1l-0.0 5.3l0.2 5.5l0.1 5.6l-0.2 5.7l-0.4 5.8l0.0 5.8l-0.2 5.9l0.9 5.9l-0.1 5.8l0.6 5.8l-0.3 5.7l-0.2 5.5l0.5 5.4l-0.7 5.2l-0.3 5.0l0.6 4.8l-0.6 4.5l0.2 4.2l0.5 3.9l-0.5 3.5l0.3 3.1l-0.1 2.7" stroke="#98521e" stroke-width="2.0" opacity="0.26"/>
</g>
<g clip-path="url(#cB)">
<path d="M672.1 239.8l1.4 3.1l1.4 4.6l1.7 5.4l2.5 5.5l1.8 5.6l1.6 5.0l2.0 5.0l2.6 4.4l1.5 4.9l2.2 5.0l1.4 5.8l1.1 5.0l0.0 5.7l1.1 5.9l0.3 5.8l-0.5 5.4l0.1 4.5l0.8 3.2" stroke="#fcc890" stroke-width="1.5" opacity="0.16" transform="translate(2 0.6)"/><path d="M672.1 239.8l1.4 3.1l1.4 4.6l1.7 5.4l2.5 5.5l1.8 5.6l1.6 5.0l2.0 5.0l2.6 4.4l1.5 4.9l2.2 5.0l1.4 5.8l1.1 5.0l0.0 5.7l1.1 5.9l0.3 5.8l-0.5 5.4l0.1 4.5l0.8 3.2" stroke="#98521e" stroke-width="1.4" opacity="0.26"/>
<path d="M669.5 240.8l0.7 3.4l1.8 4.4l1.8 5.3l2.6 5.4l2.4 5.4l1.8 5.0l1.6 5.3l2.5 4.5l1.3 4.9l2.0 4.9l1.4 5.6l0.5 4.8l-0.0 5.6l1.2 5.8l0.3 5.8l0.1 5.3l0.1 4.5l0.5 3.2" stroke="#fcc890" stroke-width="2.2" opacity="0.35" transform="translate(2 0.6)"/><path d="M669.5 240.8l0.7 3.4l1.8 4.4l1.8 5.3l2.6 5.4l2.4 5.4l1.8 5.0l1.6 5.3l2.5 4.5l1.3 4.9l2.0 4.9l1.4 5.6l0.5 4.8l-0.0 5.6l1.2 5.8l0.3 5.8l0.1 5.3l0.1 4.5l0.5 3.2" stroke="#98521e" stroke-width="2.0" opacity="0.59"/>
<path d="M665.5 242.4l1.7 3.0l1.4 4.6l1.6 5.4l2.2 5.6l2.9 5.2l1.9 4.9l2.1 5.1l1.3 5.0l1.9 4.5l2.2 4.5l1.7 5.3l1.0 4.6l0.6 5.4l-0.3 5.8l-0.2 5.8l0.7 5.3l0.5 4.5l-0.2 3.3" stroke="#fcc890" stroke-width="1.5" opacity="0.14" transform="translate(2 0.6)"/><path d="M665.5 242.4l1.7 3.0l1.4 4.6l1.6 5.4l2.2 5.6l2.9 5.2l1.9 4.9l2.1 5.1l1.3 5.0l1.9 4.5l2.2 4.5l1.7 5.3l1.0 4.6l0.6 5.4l-0.3 5.8l-0.2 5.8l0.7 5.3l0.5 4.5l-0.2 3.3" stroke="#98521e" stroke-width="1.4" opacity="0.23"/>
</g>
<g clip-path="url(#cB)">
<path d="M714.5 249.1l-1.1 4.1l-2.6 5.3l-2.8 6.2l-3.1 6.0l-2.3 5.3l-1.8 6.2l-2.7 5.5l-1.5 5.0l-2.0 3.2" stroke="#fcc890" stroke-width="1.5" opacity="0.16" transform="translate(2 0.6)"/><path d="M714.5 249.1l-1.1 4.1l-2.6 5.3l-2.8 6.2l-3.1 6.0l-2.3 5.3l-1.8 6.2l-2.7 5.5l-1.5 5.0l-2.0 3.2" stroke="#98521e" stroke-width="1.4" opacity="0.26"/>
<path d="M711.5 247.8l-1.2 4.0l-2.5 5.4l-2.7 6.2l-2.5 6.3l-2.2 5.4l-2.2 6.1l-2.7 5.6l-2.4 4.7l-1.5 3.4" stroke="#fcc890" stroke-width="2.2" opacity="0.35" transform="translate(2 0.6)"/><path d="M711.5 247.8l-1.2 4.0l-2.5 5.4l-2.7 6.2l-2.5 6.3l-2.2 5.4l-2.2 6.1l-2.7 5.6l-2.4 4.7l-1.5 3.4" stroke="#98521e" stroke-width="2.0" opacity="0.59"/>
<path d="M708.8 246.6l-1.7 3.8l-2.0 5.6l-2.7 6.3l-2.8 6.2l-2.9 5.2l-1.9 6.3l-2.2 5.8l-2.3 4.7l-1.9 3.2" stroke="#fcc890" stroke-width="1.5" opacity="0.14" transform="translate(2 0.6)"/><path d="M708.8 246.6l-1.7 3.8l-2.0 5.6l-2.7 6.3l-2.8 6.2l-2.9 5.2l-1.9 6.3l-2.2 5.8l-2.3 4.7l-1.9 3.2" stroke="#98521e" stroke-width="1.4" opacity="0.23"/>
</g>
<g clip-path="url(#cB)">
<path d="M702.2 203.0l-3.0 1.9l-4.1 2.6l-4.7 3.0l-4.8 3.4l-3.6 4.3l-3.1 3.8l-3.0 3.5l-1.8 4.2l-2.0 4.2l-0.7 4.9l-1.4 5.2l-0.6 6.1l-0.7 3.9l-0.3 4.3l0.1 4.6l0.1 4.8l0.6 5.0l0.7 5.1l-0.1 5.3l0.8 5.4l-0.2 5.5l0.7 5.5l0.2 4.6l1.2 4.7l0.4 4.9l0.8 4.9l0.6 5.0l0.5 5.1l1.0 5.1l0.5 5.2l0.6 5.2l0.4 5.2l0.5 5.1l1.4 5.0l0.2 5.0l1.1 4.8l0.5 4.8l0.0 4.8l0.0 4.8l-0.4 4.8l0.3 4.8l-0.0 4.9l0.1 5.1l1.2 5.2l0.6 5.4l0.2 5.7l1.1 4.4l0.6 4.7l0.1 4.9l0.9 5.0l-0.0 5.2l0.8 5.2l0.2 5.3l1.0 5.3l0.2 5.4l0.8 5.3l1.1 5.2l0.9 5.1l0.9 5.0l-0.1 5.0l1.1 4.6l0.2 4.5l0.8 5.8l0.7 5.8l1.3 5.6l0.5 5.6l1.0 5.4l1.2 5.2l1.2 5.0l1.1 4.8l0.4 4.7l0.6 4.3l1.0 4.0l-0.0 3.8l2.1 7.5l0.6 6.1l1.4 4.6l1.1 3.6l0.3 2.9" stroke="#fcc890" stroke-width="1.5" opacity="0.09" transform="translate(2 0.6)"/><path d="M702.2 203.0l-3.0 1.9l-4.1 2.6l-4.7 3.0l-4.8 3.4l-3.6 4.3l-3.1 3.8l-3.0 3.5l-1.8 4.2l-2.0 4.2l-0.7 4.9l-1.4 5.2l-0.6 6.1l-0.7 3.9l-0.3 4.3l0.1 4.6l0.1 4.8l0.6 5.0l0.7 5.1l-0.1 5.3l0.8 5.4l-0.2 5.5l0.7 5.5l0.2 4.6l1.2 4.7l0.4 4.9l0.8 4.9l0.6 5.0l0.5 5.1l1.0 5.1l0.5 5.2l0.6 5.2l0.4 5.2l0.5 5.1l1.4 5.0l0.2 5.0l1.1 4.8l0.5 4.8l0.0 4.8l0.0 4.8l-0.4 4.8l0.3 4.8l-0.0 4.9l0.1 5.1l1.2 5.2l0.6 5.4l0.2 5.7l1.1 4.4l0.6 4.7l0.1 4.9l0.9 5.0l-0.0 5.2l0.8 5.2l0.2 5.3l1.0 5.3l0.2 5.4l0.8 5.3l1.1 5.2l0.9 5.1l0.9 5.0l-0.1 5.0l1.1 4.6l0.2 4.5l0.8 5.8l0.7 5.8l1.3 5.6l0.5 5.6l1.0 5.4l1.2 5.2l1.2 5.0l1.1 4.8l0.4 4.7l0.6 4.3l1.0 4.0l-0.0 3.8l2.1 7.5l0.6 6.1l1.4 4.6l1.1 3.6l0.3 2.9" stroke="#98521e" stroke-width="1.4" opacity="0.15"/>
<path d="M700.3 200.4l-3.3 1.4l-3.6 3.3l-4.8 3.1l-5.1 3.3l-4.0 4.5l-3.3 4.2l-2.7 4.1l-2.2 4.3l-2.0 4.5l-1.6 5.0l-1.4 5.5l-0.1 6.4l-0.8 4.1l0.5 4.4l-0.6 4.7l0.8 4.8l-0.5 5.1l0.7 5.2l0.3 5.3l0.1 5.4l0.8 5.4l0.8 5.5l0.8 4.6l0.2 4.8l0.9 4.8l-0.1 5.1l0.3 5.1l0.7 5.1l0.8 5.1l0.9 5.1l0.5 5.2l1.6 5.0l0.8 5.1l0.1 5.1l0.8 4.9l0.4 4.8l-0.1 4.8l0.3 4.7l0.2 4.7l0.0 4.8l0.7 4.8l-0.3 5.0l0.2 5.1l1.1 5.2l0.6 5.4l0.5 5.7l-0.2 4.5l1.1 4.6l0.5 4.9l0.2 5.1l1.1 5.1l0.5 5.2l-0.1 5.4l0.7 5.3l1.1 5.3l0.8 5.3l0.2 5.3l0.3 5.2l1.5 4.9l0.1 4.9l0.9 4.7l0.3 4.5l1.2 5.8l0.3 5.8l1.2 5.6l0.8 5.6l0.7 5.4l1.2 5.2l0.7 5.1l0.7 4.9l1.0 4.6l1.1 4.3l0.6 4.1l0.4 3.8l1.7 7.6l0.9 6.1l1.1 4.7l0.3 3.8l0.8 2.8" stroke="#fcc890" stroke-width="2.2" opacity="0.20" transform="translate(2 0.6)"/><path d="M700.3 200.4l-3.3 1.4l-3.6 3.3l-4.8 3.1l-5.1 3.3l-4.0 4.5l-3.3 4.2l-2.7 4.1l-2.2 4.3l-2.0 4.5l-1.6 5.0l-1.4 5.5l-0.1 6.4l-0.8 4.1l0.5 4.4l-0.6 4.7l0.8 4.8l-0.5 5.1l0.7 5.2l0.3 5.3l0.1 5.4l0.8 5.4l0.8 5.5l0.8 4.6l0.2 4.8l0.9 4.8l-0.1 5.1l0.3 5.1l0.7 5.1l0.8 5.1l0.9 5.1l0.5 5.2l1.6 5.0l0.8 5.1l0.1 5.1l0.8 4.9l0.4 4.8l-0.1 4.8l0.3 4.7l0.2 4.7l0.0 4.8l0.7 4.8l-0.3 5.0l0.2 5.1l1.1 5.2l0.6 5.4l0.5 5.7l-0.2 4.5l1.1 4.6l0.5 4.9l0.2 5.1l1.1 5.1l0.5 5.2l-0.1 5.4l0.7 5.3l1.1 5.3l0.8 5.3l0.2 5.3l0.3 5.2l1.5 4.9l0.1 4.9l0.9 4.7l0.3 4.5l1.2 5.8l0.3 5.8l1.2 5.6l0.8 5.6l0.7 5.4l1.2 5.2l0.7 5.1l0.7 4.9l1.0 4.6l1.1 4.3l0.6 4.1l0.4 3.8l1.7 7.6l0.9 6.1l1.1 4.7l0.3 3.8l0.8 2.8" stroke="#98521e" stroke-width="2.0" opacity="0.33"/>
<path d="M697.9 197.2l-2.6 2.2l-4.0 2.7l-5.0 3.0l-5.0 3.9l-4.6 4.4l-3.3 4.9l-2.7 4.6l-2.4 4.5l-2.0 4.8l-2.2 5.1l-0.5 6.0l-0.6 6.5l-0.4 4.3l0.1 4.5l-0.4 4.7l0.2 4.9l0.5 5.1l0.5 5.2l0.1 5.4l0.7 5.4l0.6 5.5l0.5 5.5l-0.0 4.7l0.2 4.9l0.2 5.0l0.7 5.0l0.6 5.1l0.8 5.1l0.5 5.1l1.0 5.1l1.2 5.1l0.6 5.1l0.4 5.1l0.9 4.9l0.6 4.9l0.6 4.8l0.1 4.7l-0.1 4.7l0.4 4.7l0.6 4.7l0.0 4.9l0.3 5.0l-0.3 5.1l0.4 5.3l0.6 5.5l0.9 5.7l0.2 4.5l1.1 4.6l0.9 4.8l-0.3 5.1l1.3 5.1l0.2 5.3l0.2 5.3l1.4 5.2l0.0 5.4l1.3 5.2l0.4 5.3l0.3 5.2l0.6 5.0l0.8 4.9l0.5 4.7l0.8 4.5l1.2 5.8l0.8 5.8l1.3 5.6l0.9 5.6l0.5 5.5l1.1 5.2l0.8 5.1l1.3 4.8l0.7 4.6l0.4 4.4l0.9 4.0l1.1 3.6l0.7 7.8l0.7 6.2l1.2 4.8l0.7 3.7l0.4 2.9" stroke="#fcc890" stroke-width="1.5" opacity="0.08" transform="translate(2 0.6)"/><path d="M697.9 197.2l-2.6 2.2l-4.0 2.7l-5.0 3.0l-5.0 3.9l-4.6 4.4l-3.3 4.9l-2.7 4.6l-2.4 4.5l-2.0 4.8l-2.2 5.1l-0.5 6.0l-0.6 6.5l-0.4 4.3l0.1 4.5l-0.4 4.7l0.2 4.9l0.5 5.1l0.5 5.2l0.1 5.4l0.7 5.4l0.6 5.5l0.5 5.5l-0.0 4.7l0.2 4.9l0.2 5.0l0.7 5.0l0.6 5.1l0.8 5.1l0.5 5.1l1.0 5.1l1.2 5.1l0.6 5.1l0.4 5.1l0.9 4.9l0.6 4.9l0.6 4.8l0.1 4.7l-0.1 4.7l0.4 4.7l0.6 4.7l0.0 4.9l0.3 5.0l-0.3 5.1l0.4 5.3l0.6 5.5l0.9 5.7l0.2 4.5l1.1 4.6l0.9 4.8l-0.3 5.1l1.3 5.1l0.2 5.3l0.2 5.3l1.4 5.2l0.0 5.4l1.3 5.2l0.4 5.3l0.3 5.2l0.6 5.0l0.8 4.9l0.5 4.7l0.8 4.5l1.2 5.8l0.8 5.8l1.3 5.6l0.9 5.6l0.5 5.5l1.1 5.2l0.8 5.1l1.3 4.8l0.7 4.6l0.4 4.4l0.9 4.0l1.1 3.6l0.7 7.8l0.7 6.2l1.2 4.8l0.7 3.7l0.4 2.9" stroke="#98521e" stroke-width="1.4" opacity="0.13"/>
</g>
<g clip-path="url(#cB)">
<path d="M708.1 198.4l1.6 2.7l2.4 3.6l2.0 5.0l2.5 5.7l2.1 6.6l2.1 7.2l0.6 4.1l1.2 4.2l0.8 4.5l-0.0 4.9l0.2 5.0l1.1 5.1l-0.1 5.3l0.6 5.4l-0.3 5.5l-0.0 5.5l0.1 5.5l-0.4 5.5l0.4 4.8l-0.3 4.9l0.3 5.0l-0.0 5.1l-1.1 5.1l-0.1 5.2l-1.2 5.1l0.2 5.3l-0.6 5.1l-0.6 5.1l-0.8 5.0l-0.2 5.0l-0.6 4.8l-0.8 4.7l-0.1 5.4l-0.1 5.3l-1.0 5.2l0.3 5.2l0.0 5.1l-1.1 5.0l-0.5 5.0l0.1 4.9l0.0 4.9l-0.6 4.8l-0.7 4.7l-0.0 4.7l0.1 5.4l-0.8 5.1l-1.0 4.9l-0.2 4.9l-0.7 4.7l-1.1 4.7l-0.4 4.8l-0.7 4.9l-0.1 5.1l-0.8 5.3l0.1 4.9l0.2 5.3l-1.0 5.5l-0.7 5.8l0.2 5.9l0.0 5.8l-0.5 5.6l-0.1 5.3l-0.2 4.9l-0.9 4.3l0.2 3.7l-0.8 2.9" stroke="#fcc890" stroke-width="1.5" opacity="0.08" transform="translate(2 0.6)"/><path d="M708.1 198.4l1.6 2.7l2.4 3.6l2.0 5.0l2.5 5.7l2.1 6.6l2.1 7.2l0.6 4.1l1.2 4.2l0.8 4.5l-0.0 4.9l0.2 5.0l1.1 5.1l-0.1 5.3l0.6 5.4l-0.3 5.5l-0.0 5.5l0.1 5.5l-0.4 5.5l0.4 4.8l-0.3 4.9l0.3 5.0l-0.0 5.1l-1.1 5.1l-0.1 5.2l-1.2 5.1l0.2 5.3l-0.6 5.1l-0.6 5.1l-0.8 5.0l-0.2 5.0l-0.6 4.8l-0.8 4.7l-0.1 5.4l-0.1 5.3l-1.0 5.2l0.3 5.2l0.0 5.1l-1.1 5.0l-0.5 5.0l0.1 4.9l0.0 4.9l-0.6 4.8l-0.7 4.7l-0.0 4.7l0.1 5.4l-0.8 5.1l-1.0 4.9l-0.2 4.9l-0.7 4.7l-1.1 4.7l-0.4 4.8l-0.7 4.9l-0.1 5.1l-0.8 5.3l0.1 4.9l0.2 5.3l-1.0 5.5l-0.7 5.8l0.2 5.9l0.0 5.8l-0.5 5.6l-0.1 5.3l-0.2 4.9l-0.9 4.3l0.2 3.7l-0.8 2.9" stroke="#98521e" stroke-width="1.4" opacity="0.13"/>
<path d="M704.6 200.2l1.9 2.7l2.4 3.6l2.9 4.4l2.0 5.7l2.1 6.3l2.2 7.0l1.0 3.9l0.6 4.3l0.3 4.5l0.6 4.7l0.5 5.0l0.4 5.1l0.5 5.3l-0.3 5.4l0.7 5.4l-0.4 5.5l-0.2 5.5l-0.2 5.4l-0.0 4.7l-0.0 4.9l-0.5 4.9l0.3 5.1l-1.1 5.1l0.0 5.2l-0.5 5.2l-0.9 5.1l-0.7 5.1l-0.3 5.1l-0.5 5.0l-0.5 5.0l-1.1 4.8l-0.1 4.7l-0.9 5.3l-0.6 5.3l0.4 5.3l-0.7 5.2l-0.4 5.1l0.3 5.1l-0.8 4.9l0.1 4.9l0.2 4.9l-1.0 4.7l-0.3 4.7l0.2 4.7l-1.0 5.3l-0.8 5.1l-0.6 4.9l-0.5 4.8l-0.9 4.7l-0.3 4.8l-0.6 4.8l-0.1 5.0l-0.7 5.1l-0.1 5.4l-0.8 4.8l0.4 5.3l-1.1 5.5l0.0 5.8l-0.7 5.8l-0.6 5.8l-0.3 5.6l-0.2 5.3l-0.4 4.9l-0.3 4.4l0.1 3.7l-0.7 2.9" stroke="#fcc890" stroke-width="2.2" opacity="0.17" transform="translate(2 0.6)"/><path d="M704.6 200.2l1.9 2.7l2.4 3.6l2.9 4.4l2.0 5.7l2.1 6.3l2.2 7.0l1.0 3.9l0.6 4.3l0.3 4.5l0.6 4.7l0.5 5.0l0.4 5.1l0.5 5.3l-0.3 5.4l0.7 5.4l-0.4 5.5l-0.2 5.5l-0.2 5.4l-0.0 4.7l-0.0 4.9l-0.5 4.9l0.3 5.1l-1.1 5.1l0.0 5.2l-0.5 5.2l-0.9 5.1l-0.7 5.1l-0.3 5.1l-0.5 5.0l-0.5 5.0l-1.1 4.8l-0.1 4.7l-0.9 5.3l-0.6 5.3l0.4 5.3l-0.7 5.2l-0.4 5.1l0.3 5.1l-0.8 4.9l0.1 4.9l0.2 4.9l-1.0 4.7l-0.3 4.7l0.2 4.7l-1.0 5.3l-0.8 5.1l-0.6 4.9l-0.5 4.8l-0.9 4.7l-0.3 4.8l-0.6 4.8l-0.1 5.0l-0.7 5.1l-0.1 5.4l-0.8 4.8l0.4 5.3l-1.1 5.5l0.0 5.8l-0.7 5.8l-0.6 5.8l-0.3 5.6l-0.2 5.3l-0.4 4.9l-0.3 4.4l0.1 3.7l-0.7 2.9" stroke="#98521e" stroke-width="2.0" opacity="0.29"/>
<path d="M701.6 201.8l1.9 2.8l2.1 3.8l2.3 4.6l2.7 5.1l2.7 5.8l1.9 6.8l0.7 3.7l0.9 4.1l0.0 4.5l0.4 4.7l0.4 4.9l0.7 5.1l0.0 5.2l0.5 5.3l0.1 5.4l-0.5 5.4l0.6 5.4l-0.4 5.4l0.1 4.7l-0.7 4.8l-0.1 4.9l-0.9 5.0l-0.4 5.1l-0.4 5.1l0.2 5.2l-0.8 5.1l-1.0 5.1l-0.5 5.1l-0.4 5.1l-0.2 5.0l-0.7 4.9l-0.6 4.7l-0.1 5.4l-0.2 5.3l0.1 5.3l-0.3 5.2l0.0 5.1l-0.9 5.0l-0.1 5.0l-0.6 4.9l-0.8 4.8l-0.3 4.7l-0.7 4.6l-0.4 4.6l0.3 5.4l-0.5 5.1l-0.2 5.0l-0.5 4.8l-1.1 4.7l-0.4 4.8l-0.4 4.8l-0.2 5.0l-1.0 5.1l-0.7 5.4l0.1 4.9l0.0 5.3l-0.6 5.6l-0.6 5.8l-1.0 5.8l-0.2 5.8l0.1 5.7l-0.3 5.3l0.1 4.9l-0.5 4.4l0.1 3.7l-0.4 2.9" stroke="#fcc890" stroke-width="1.5" opacity="0.07" transform="translate(2 0.6)"/><path d="M701.6 201.8l1.9 2.8l2.1 3.8l2.3 4.6l2.7 5.1l2.7 5.8l1.9 6.8l0.7 3.7l0.9 4.1l0.0 4.5l0.4 4.7l0.4 4.9l0.7 5.1l0.0 5.2l0.5 5.3l0.1 5.4l-0.5 5.4l0.6 5.4l-0.4 5.4l0.1 4.7l-0.7 4.8l-0.1 4.9l-0.9 5.0l-0.4 5.1l-0.4 5.1l0.2 5.2l-0.8 5.1l-1.0 5.1l-0.5 5.1l-0.4 5.1l-0.2 5.0l-0.7 4.9l-0.6 4.7l-0.1 5.4l-0.2 5.3l0.1 5.3l-0.3 5.2l0.0 5.1l-0.9 5.0l-0.1 5.0l-0.6 4.9l-0.8 4.8l-0.3 4.7l-0.7 4.6l-0.4 4.6l0.3 5.4l-0.5 5.1l-0.2 5.0l-0.5 4.8l-1.1 4.7l-0.4 4.8l-0.4 4.8l-0.2 5.0l-1.0 5.1l-0.7 5.4l0.1 4.9l0.0 5.3l-0.6 5.6l-0.6 5.8l-1.0 5.8l-0.2 5.8l0.1 5.7l-0.3 5.3l0.1 4.9l-0.5 4.4l0.1 3.7l-0.4 2.9" stroke="#98521e" stroke-width="1.4" opacity="0.11"/>
</g>
<g clip-path="url(#cB)">
<path d="M704.9 440.6l0.6 3.6l0.3 5.0l1.2 5.9l1.0 6.4l0.6 6.5l0.8 6.1l0.5 5.3l1.6 6.6l1.0 6.6l1.6 5.9l0.4 5.1l0.2 3.7" stroke="#fcc890" stroke-width="1.5" opacity="0.18" transform="translate(2 0.6)"/><path d="M704.9 440.6l0.6 3.6l0.3 5.0l1.2 5.9l1.0 6.4l0.6 6.5l0.8 6.1l0.5 5.3l1.6 6.6l1.0 6.6l1.6 5.9l0.4 5.1l0.2 3.7" stroke="#98521e" stroke-width="1.4" opacity="0.29"/>
<path d="M702.1 441.0l0.3 3.6l0.4 5.0l0.5 6.0l1.6 6.3l0.5 6.6l1.2 6.1l0.2 5.4l1.3 6.7l1.1 6.6l1.6 5.9l0.4 5.1l1.1 3.5" stroke="#fcc890" stroke-width="2.2" opacity="0.39" transform="translate(2 0.6)"/><path d="M702.1 441.0l0.3 3.6l0.4 5.0l0.5 6.0l1.6 6.3l0.5 6.6l1.2 6.1l0.2 5.4l1.3 6.7l1.1 6.6l1.6 5.9l0.4 5.1l1.1 3.5" stroke="#98521e" stroke-width="2.0" opacity="0.65"/>
<path d="M698.3 441.5l0.6 3.6l0.7 5.0l0.7 6.0l0.6 6.5l0.7 6.5l1.3 6.1l0.5 5.4l1.4 6.8l1.8 6.5l1.0 6.1l0.5 5.1l1.2 3.5" stroke="#fcc890" stroke-width="1.5" opacity="0.16" transform="translate(2 0.6)"/><path d="M698.3 441.5l0.6 3.6l0.7 5.0l0.7 6.0l0.6 6.5l0.7 6.5l1.3 6.1l0.5 5.4l1.4 6.8l1.8 6.5l1.0 6.1l0.5 5.1l1.2 3.5" stroke="#98521e" stroke-width="1.4" opacity="0.26"/>
</g>
<g clip-path="url(#cB)">
<path d="M715.4 441.2l-0.2 3.6l-0.1 5.0l-0.6 5.9l-0.0 6.4l-0.8 6.5l-0.1 6.1l-0.1 5.2l0.6 6.6l0.2 6.5l0.7 5.9l-0.2 5.1l0.8 3.6" stroke="#fcc890" stroke-width="1.5" opacity="0.14" transform="translate(2 0.6)"/><path d="M715.4 441.2l-0.2 3.6l-0.1 5.0l-0.6 5.9l-0.0 6.4l-0.8 6.5l-0.1 6.1l-0.1 5.2l0.6 6.6l0.2 6.5l0.7 5.9l-0.2 5.1l0.8 3.6" stroke="#98521e" stroke-width="1.4" opacity="0.23"/>
<path d="M711.9 441.0l-0.7 3.6l0.2 5.0l-0.7 5.9l-0.0 6.5l-0.6 6.5l0.0 6.2l-0.4 5.3l0.4 6.8l0.9 6.6l0.8 6.0l0.5 5.0l-0.4 3.7" stroke="#fcc890" stroke-width="2.2" opacity="0.31" transform="translate(2 0.6)"/><path d="M711.9 441.0l-0.7 3.6l0.2 5.0l-0.7 5.9l-0.0 6.5l-0.6 6.5l0.0 6.2l-0.4 5.3l0.4 6.8l0.9 6.6l0.8 6.0l0.5 5.0l-0.4 3.7" stroke="#98521e" stroke-width="2.0" opacity="0.52"/>
<path d="M708.6 440.8l-0.4 3.6l0.0 5.0l-0.9 5.9l-0.1 6.5l-0.3 6.5l-0.8 6.2l0.5 5.5l-0.2 6.9l1.1 6.7l0.8 6.0l-0.2 5.1l0.6 3.6" stroke="#fcc890" stroke-width="1.5" opacity="0.12" transform="translate(2 0.6)"/><path d="M708.6 440.8l-0.4 3.6l0.0 5.0l-0.9 5.9l-0.1 6.5l-0.3 6.5l-0.8 6.2l0.5 5.5l-0.2 6.9l1.1 6.7l0.8 6.0l-0.2 5.1l0.6 3.6" stroke="#98521e" stroke-width="1.4" opacity="0.21"/>
</g>
<g clip-path="url(#cB)">
<path d="M743.0 100.1l-0.4 2.7l0.6 3.2l0.1 3.6l0.2 4.0l-0.7 4.4l-0.5 4.7l-0.3 5.0l0.4 5.2l-0.0 5.4l0.0 5.6l-0.6 5.7l-0.2 5.8l0.3 5.8l-0.6 5.8l-0.3 5.8l0.3 5.7l-0.5 5.6l0.1 5.5l0.3 5.3l0.4 5.1l-0.4 5.0l-0.3 5.0l0.3 5.0l0.5 5.0l0.6 5.0l0.4 5.0l0.2 5.0l-0.4 5.0l0.7 5.0l0.8 5.0l-0.4 5.0l-0.1 5.0l0.3 5.0l0.1 5.0l1.0 5.0l0.7 5.0l0.0 5.0l-0.5 5.0l-0.3 5.0l-0.3 5.0l0.7 5.0l-0.3 5.0l0.1 5.0l-0.7 5.0l0.2 5.0l-0.6 5.0l0.4 5.1l-0.7 5.0l-0.7 5.0l-0.6 5.0l0.2 5.0l-0.8 5.0l-0.5 5.0l0.4 5.0l-0.5 5.0l-0.2 5.0l-0.2 5.0l-0.5 5.0l-0.6 5.0l0.1 5.0l0.7 5.0l-0.3 5.0l-0.0 5.1l0.0 5.1l0.5 5.1l-0.1 5.1l0.1 5.1l0.7 5.1l0.1 5.1l0.0 5.1l-0.1 5.1l0.9 5.0l-0.4 5.1l-0.1 5.0l0.9 4.9l-0.4 4.9l0.0 4.9l0.3 4.8l-0.1 4.8l0.4 4.7l0.1 5.5l0.5 5.7l0.2 5.8l-0.1 5.9l-0.9 5.9l0.3 5.9l-0.8 5.8l-0.4 5.7l0.7 5.5l-0.7 5.3l-0.4 5.1l-0.4 4.8l0.6 4.5l-0.6 4.1l0.0 3.7l-0.3 3.2l-0.1 2.8" stroke="#fcc890" stroke-width="1.7" opacity="0.12" transform="translate(2 0.6)"/><path d="M743.0 100.1l-0.4 2.7l0.6 3.2l0.1 3.6l0.2 4.0l-0.7 4.4l-0.5 4.7l-0.3 5.0l0.4 5.2l-0.0 5.4l0.0 5.6l-0.6 5.7l-0.2 5.8l0.3 5.8l-0.6 5.8l-0.3 5.8l0.3 5.7l-0.5 5.6l0.1 5.5l0.3 5.3l0.4 5.1l-0.4 5.0l-0.3 5.0l0.3 5.0l0.5 5.0l0.6 5.0l0.4 5.0l0.2 5.0l-0.4 5.0l0.7 5.0l0.8 5.0l-0.4 5.0l-0.1 5.0l0.3 5.0l0.1 5.0l1.0 5.0l0.7 5.0l0.0 5.0l-0.5 5.0l-0.3 5.0l-0.3 5.0l0.7 5.0l-0.3 5.0l0.1 5.0l-0.7 5.0l0.2 5.0l-0.6 5.0l0.4 5.1l-0.7 5.0l-0.7 5.0l-0.6 5.0l0.2 5.0l-0.8 5.0l-0.5 5.0l0.4 5.0l-0.5 5.0l-0.2 5.0l-0.2 5.0l-0.5 5.0l-0.6 5.0l0.1 5.0l0.7 5.0l-0.3 5.0l-0.0 5.1l0.0 5.1l0.5 5.1l-0.1 5.1l0.1 5.1l0.7 5.1l0.1 5.1l0.0 5.1l-0.1 5.1l0.9 5.0l-0.4 5.1l-0.1 5.0l0.9 4.9l-0.4 4.9l0.0 4.9l0.3 4.8l-0.1 4.8l0.4 4.7l0.1 5.5l0.5 5.7l0.2 5.8l-0.1 5.9l-0.9 5.9l0.3 5.9l-0.8 5.8l-0.4 5.7l0.7 5.5l-0.7 5.3l-0.4 5.1l-0.4 4.8l0.6 4.5l-0.6 4.1l0.0 3.7l-0.3 3.2l-0.1 2.8" stroke="#98521e" stroke-width="1.5" opacity="0.20"/>
<path d="M740.0 100.0l0.5 2.8l-0.6 3.2l-0.1 3.6l-0.3 4.0l0.0 4.4l-0.5 4.7l0.3 5.0l-0.3 5.2l-0.2 5.4l-0.2 5.6l-0.4 5.7l-0.0 5.8l0.4 5.8l0.2 5.8l0.0 5.8l-0.7 5.7l-0.4 5.6l-0.0 5.5l-0.2 5.3l-0.1 5.1l0.6 5.0l-0.4 5.0l0.4 5.0l-0.1 5.0l1.0 5.0l-0.0 5.0l0.3 5.0l0.0 5.0l-0.0 5.0l0.2 5.0l0.5 5.0l1.0 5.0l0.1 5.0l0.7 5.0l0.1 5.0l-0.5 5.0l-0.1 5.0l-0.2 5.0l0.1 5.0l0.9 5.0l0.1 5.0l-0.4 5.0l-0.7 5.0l0.3 5.0l0.2 5.0l-0.6 5.0l-0.5 5.0l-0.6 5.0l-0.5 5.0l0.2 5.0l-0.1 5.0l-0.1 5.0l-0.8 5.0l-0.1 5.0l-0.6 5.0l-0.2 5.0l-0.5 5.0l-0.1 5.0l-0.6 5.0l0.3 5.0l0.7 5.0l-0.3 5.0l0.3 5.1l-0.5 5.1l0.3 5.1l0.8 5.1l-0.4 5.1l0.1 5.1l0.1 5.1l0.8 5.1l0.0 5.1l0.8 5.0l0.4 5.0l-0.1 5.0l-0.4 5.0l-0.1 4.9l0.4 4.8l0.1 4.8l0.6 4.7l-0.3 4.7l-0.4 5.5l0.4 5.7l-0.6 5.8l0.6 5.9l-0.6 5.9l0.4 5.9l-0.1 5.8l-0.1 5.7l-0.0 5.5l-0.2 5.3l-0.5 5.1l0.0 4.8l0.1 4.5l-0.2 4.1l-0.7 3.7l0.3 3.3l0.2 2.8" stroke="#fcc890" stroke-width="2.4" opacity="0.27" transform="translate(2 0.6)"/><path d="M740.0 100.0l0.5 2.8l-0.6 3.2l-0.1 3.6l-0.3 4.0l0.0 4.4l-0.5 4.7l0.3 5.0l-0.3 5.2l-0.2 5.4l-0.2 5.6l-0.4 5.7l-0.0 5.8l0.4 5.8l0.2 5.8l0.0 5.8l-0.7 5.7l-0.4 5.6l-0.0 5.5l-0.2 5.3l-0.1 5.1l0.6 5.0l-0.4 5.0l0.4 5.0l-0.1 5.0l1.0 5.0l-0.0 5.0l0.3 5.0l0.0 5.0l-0.0 5.0l0.2 5.0l0.5 5.0l1.0 5.0l0.1 5.0l0.7 5.0l0.1 5.0l-0.5 5.0l-0.1 5.0l-0.2 5.0l0.1 5.0l0.9 5.0l0.1 5.0l-0.4 5.0l-0.7 5.0l0.3 5.0l0.2 5.0l-0.6 5.0l-0.5 5.0l-0.6 5.0l-0.5 5.0l0.2 5.0l-0.1 5.0l-0.1 5.0l-0.8 5.0l-0.1 5.0l-0.6 5.0l-0.2 5.0l-0.5 5.0l-0.1 5.0l-0.6 5.0l0.3 5.0l0.7 5.0l-0.3 5.0l0.3 5.1l-0.5 5.1l0.3 5.1l0.8 5.1l-0.4 5.1l0.1 5.1l0.1 5.1l0.8 5.1l0.0 5.1l0.8 5.0l0.4 5.0l-0.1 5.0l-0.4 5.0l-0.1 4.9l0.4 4.8l0.1 4.8l0.6 4.7l-0.3 4.7l-0.4 5.5l0.4 5.7l-0.6 5.8l0.6 5.9l-0.6 5.9l0.4 5.9l-0.1 5.8l-0.1 5.7l-0.0 5.5l-0.2 5.3l-0.5 5.1l0.0 4.8l0.1 4.5l-0.2 4.1l-0.7 3.7l0.3 3.3l0.2 2.8" stroke="#98521e" stroke-width="2.2" opacity="0.45"/>
<path d="M736.4 99.9l-0.3 2.7l0.1 3.2l0.0 3.6l0.2 4.0l-0.3 4.4l0.2 4.7l-0.1 5.0l-0.8 5.2l-0.6 5.4l0.7 5.6l0.0 5.7l0.3 5.8l-1.0 5.8l-0.5 5.8l0.5 5.8l-0.7 5.7l-0.0 5.7l0.5 5.5l-0.5 5.4l0.0 5.1l-0.1 5.0l1.0 5.0l-0.5 5.0l-0.1 5.0l0.1 5.0l0.9 5.0l-0.1 5.0l0.8 5.0l0.3 5.0l0.7 5.0l0.1 5.0l0.6 5.0l-0.6 5.0l1.0 4.9l-0.4 5.0l0.1 5.0l0.2 5.0l0.4 5.0l0.5 5.0l-0.6 5.0l0.5 5.0l0.2 5.0l-0.1 5.0l-0.1 5.0l-0.7 5.0l-0.7 5.0l0.1 5.0l-0.3 5.0l-0.3 5.0l-0.7 5.0l-0.7 5.0l-0.3 5.0l-0.8 5.0l0.3 5.1l-0.3 5.0l-0.2 5.0l-0.6 5.0l0.3 5.0l-0.6 5.0l-0.5 5.0l0.4 5.1l-0.5 5.1l0.5 5.1l0.3 5.1l-0.4 5.1l-0.2 5.2l0.1 5.1l1.2 5.1l-0.0 5.1l0.8 5.1l0.2 5.1l-0.2 5.1l0.5 5.0l-0.4 5.0l0.6 4.9l-0.1 4.9l0.5 4.8l-0.4 4.8l0.2 4.7l0.5 4.6l-0.5 5.5l-0.3 5.7l-0.2 5.8l0.0 5.8l-0.2 5.8l0.4 5.8l-0.6 5.8l0.2 5.7l0.0 5.5l0.4 5.3l-0.9 5.1l-0.6 4.8l0.3 4.5l0.1 4.1l0.3 3.7l0.1 3.3l0.0 2.8" stroke="#fcc890" stroke-width="1.7" opacity="0.11" transform="translate(2 0.6)"/><path d="M736.4 99.9l-0.3 2.7l0.1 3.2l0.0 3.6l0.2 4.0l-0.3 4.4l0.2 4.7l-0.1 5.0l-0.8 5.2l-0.6 5.4l0.7 5.6l0.0 5.7l0.3 5.8l-1.0 5.8l-0.5 5.8l0.5 5.8l-0.7 5.7l-0.0 5.7l0.5 5.5l-0.5 5.4l0.0 5.1l-0.1 5.0l1.0 5.0l-0.5 5.0l-0.1 5.0l0.1 5.0l0.9 5.0l-0.1 5.0l0.8 5.0l0.3 5.0l0.7 5.0l0.1 5.0l0.6 5.0l-0.6 5.0l1.0 4.9l-0.4 5.0l0.1 5.0l0.2 5.0l0.4 5.0l0.5 5.0l-0.6 5.0l0.5 5.0l0.2 5.0l-0.1 5.0l-0.1 5.0l-0.7 5.0l-0.7 5.0l0.1 5.0l-0.3 5.0l-0.3 5.0l-0.7 5.0l-0.7 5.0l-0.3 5.0l-0.8 5.0l0.3 5.1l-0.3 5.0l-0.2 5.0l-0.6 5.0l0.3 5.0l-0.6 5.0l-0.5 5.0l0.4 5.1l-0.5 5.1l0.5 5.1l0.3 5.1l-0.4 5.1l-0.2 5.2l0.1 5.1l1.2 5.1l-0.0 5.1l0.8 5.1l0.2 5.1l-0.2 5.1l0.5 5.0l-0.4 5.0l0.6 4.9l-0.1 4.9l0.5 4.8l-0.4 4.8l0.2 4.7l0.5 4.6l-0.5 5.5l-0.3 5.7l-0.2 5.8l0.0 5.8l-0.2 5.8l0.4 5.8l-0.6 5.8l0.2 5.7l0.0 5.5l0.4 5.3l-0.9 5.1l-0.6 4.8l0.3 4.5l0.1 4.1l0.3 3.7l0.1 3.3l0.0 2.8" stroke="#98521e" stroke-width="1.5" opacity="0.18"/>
</g>
<g clip-path="url(#cB)">
<path d="M614.9 99.8l0.8 2.7l-0.0 3.2l-0.0 3.6l0.3 4.0l0.1 4.4l0.5 4.7l0.4 5.0l-0.2 5.2l0.8 5.4l0.0 5.6l1.0 5.6l0.6 5.8l-0.3 5.9l-0.1 5.9l0.7 5.8l1.0 5.7l0.4 5.6l0.2 5.5l0.7 5.3l-0.2 5.1l0.5 5.0l0.3 5.0l0.2 5.0l-0.2 5.0l0.1 5.0l0.4 5.0l0.6 5.0l0.4 5.0l-0.3 5.0l0.3 5.0l0.5 5.0l0.6 5.0l0.0 5.0l-0.2 5.0l-0.2 5.0l0.8 5.0l-0.4 5.0l0.0 5.0l0.7 5.0l0.1 5.0l-0.0 5.0l0.1 5.0l-0.8 5.0l0.3 5.0l0.4 5.0l-0.4 5.0l-0.1 5.0l-0.7 5.0l0.3 5.0l-0.7 5.0l-0.3 5.0l-0.5 5.0l-0.4 5.0l-0.0 5.0l0.1 5.0l0.5 5.0l-0.5 5.0l0.3 5.0l-0.1 5.0l0.0 5.0l0.2 5.0l-0.5 5.0l0.6 5.0l0.7 5.1l-0.1 5.1l0.3 5.1l-0.1 5.1l0.8 5.1l0.1 5.1l-0.3 5.1l-0.2 5.1l0.9 5.0l-0.3 5.1l0.3 5.0l0.8 4.9l-0.3 4.9l0.0 4.9l0.5 4.8l-0.3 4.8l0.4 4.7l0.1 5.6l0.0 5.7l-0.4 5.8l0.4 5.9l0.4 5.9l-0.8 5.8l0.1 5.8l0.0 5.7l-0.5 5.5l-0.3 5.3l0.1 5.1l-0.6 4.8l0.1 4.5l-0.7 4.1l-0.4 3.7l0.4 3.3l-0.4 2.7" stroke="#fcc890" stroke-width="1.5" opacity="0.12" transform="translate(2 0.6)"/><path d="M614.9 99.8l0.8 2.7l-0.0 3.2l-0.0 3.6l0.3 4.0l0.1 4.4l0.5 4.7l0.4 5.0l-0.2 5.2l0.8 5.4l0.0 5.6l1.0 5.6l0.6 5.8l-0.3 5.9l-0.1 5.9l0.7 5.8l1.0 5.7l0.4 5.6l0.2 5.5l0.7 5.3l-0.2 5.1l0.5 5.0l0.3 5.0l0.2 5.0l-0.2 5.0l0.1 5.0l0.4 5.0l0.6 5.0l0.4 5.0l-0.3 5.0l0.3 5.0l0.5 5.0l0.6 5.0l0.0 5.0l-0.2 5.0l-0.2 5.0l0.8 5.0l-0.4 5.0l0.0 5.0l0.7 5.0l0.1 5.0l-0.0 5.0l0.1 5.0l-0.8 5.0l0.3 5.0l0.4 5.0l-0.4 5.0l-0.1 5.0l-0.7 5.0l0.3 5.0l-0.7 5.0l-0.3 5.0l-0.5 5.0l-0.4 5.0l-0.0 5.0l0.1 5.0l0.5 5.0l-0.5 5.0l0.3 5.0l-0.1 5.0l0.0 5.0l0.2 5.0l-0.5 5.0l0.6 5.0l0.7 5.1l-0.1 5.1l0.3 5.1l-0.1 5.1l0.8 5.1l0.1 5.1l-0.3 5.1l-0.2 5.1l0.9 5.0l-0.3 5.1l0.3 5.0l0.8 4.9l-0.3 4.9l0.0 4.9l0.5 4.8l-0.3 4.8l0.4 4.7l0.1 5.6l0.0 5.7l-0.4 5.8l0.4 5.9l0.4 5.9l-0.8 5.8l0.1 5.8l0.0 5.7l-0.5 5.5l-0.3 5.3l0.1 5.1l-0.6 4.8l0.1 4.5l-0.7 4.1l-0.4 3.7l0.4 3.3l-0.4 2.7" stroke="#98521e" stroke-width="1.4" opacity="0.20"/>
<path d="M612.2 100.0l0.1 2.8l-0.3 3.2l0.1 3.6l1.0 4.0l-0.3 4.4l0.0 4.7l0.9 4.9l0.7 5.2l-0.3 5.4l0.2 5.6l0.8 5.7l0.0 5.8l0.3 5.8l0.9 5.8l0.0 5.8l0.8 5.7l-0.2 5.7l0.3 5.5l0.2 5.3l0.7 5.1l0.5 5.0l0.4 5.0l0.3 5.0l-0.5 5.0l0.9 5.0l0.4 5.0l0.4 5.0l0.3 5.0l-0.6 5.0l0.3 5.0l0.3 5.0l0.4 5.0l-0.0 5.0l-0.4 5.0l0.8 5.0l-0.4 5.0l0.7 5.0l-0.5 5.0l-0.0 5.0l0.5 5.0l0.1 5.0l-0.5 5.0l0.4 5.0l0.1 5.0l-0.3 5.0l-0.4 5.0l-0.5 5.0l-0.4 5.0l-0.2 5.0l0.0 5.0l-0.2 5.0l0.7 5.0l-0.1 5.0l0.2 5.0l-0.4 5.0l-0.7 5.0l0.4 5.0l-0.4 5.0l-0.6 5.0l0.9 5.0l-0.5 5.0l0.7 5.0l0.5 5.1l-0.5 5.1l0.0 5.1l0.6 5.1l-0.1 5.1l0.5 5.1l0.5 5.1l0.8 5.1l-0.4 5.1l0.3 5.1l0.8 5.0l0.3 5.0l-0.4 5.0l0.7 4.9l-0.5 4.9l0.3 4.8l0.4 4.7l0.5 4.7l0.0 5.5l-0.7 5.7l0.5 5.8l-0.7 5.8l-0.6 5.9l-0.2 5.8l-0.1 5.8l0.3 5.7l0.3 5.5l-0.8 5.3l-0.2 5.1l-0.2 4.8l0.1 4.5l-0.2 4.1l-0.2 3.7l0.1 3.3l-0.2 2.8" stroke="#fcc890" stroke-width="2.2" opacity="0.27" transform="translate(2 0.6)"/><path d="M612.2 100.0l0.1 2.8l-0.3 3.2l0.1 3.6l1.0 4.0l-0.3 4.4l0.0 4.7l0.9 4.9l0.7 5.2l-0.3 5.4l0.2 5.6l0.8 5.7l0.0 5.8l0.3 5.8l0.9 5.8l0.0 5.8l0.8 5.7l-0.2 5.7l0.3 5.5l0.2 5.3l0.7 5.1l0.5 5.0l0.4 5.0l0.3 5.0l-0.5 5.0l0.9 5.0l0.4 5.0l0.4 5.0l0.3 5.0l-0.6 5.0l0.3 5.0l0.3 5.0l0.4 5.0l-0.0 5.0l-0.4 5.0l0.8 5.0l-0.4 5.0l0.7 5.0l-0.5 5.0l-0.0 5.0l0.5 5.0l0.1 5.0l-0.5 5.0l0.4 5.0l0.1 5.0l-0.3 5.0l-0.4 5.0l-0.5 5.0l-0.4 5.0l-0.2 5.0l0.0 5.0l-0.2 5.0l0.7 5.0l-0.1 5.0l0.2 5.0l-0.4 5.0l-0.7 5.0l0.4 5.0l-0.4 5.0l-0.6 5.0l0.9 5.0l-0.5 5.0l0.7 5.0l0.5 5.1l-0.5 5.1l0.0 5.1l0.6 5.1l-0.1 5.1l0.5 5.1l0.5 5.1l0.8 5.1l-0.4 5.1l0.3 5.1l0.8 5.0l0.3 5.0l-0.4 5.0l0.7 4.9l-0.5 4.9l0.3 4.8l0.4 4.7l0.5 4.7l0.0 5.5l-0.7 5.7l0.5 5.8l-0.7 5.8l-0.6 5.9l-0.2 5.8l-0.1 5.8l0.3 5.7l0.3 5.5l-0.8 5.3l-0.2 5.1l-0.2 4.8l0.1 4.5l-0.2 4.1l-0.2 3.7l0.1 3.3l-0.2 2.8" stroke="#98521e" stroke-width="2.0" opacity="0.45"/>
<path d="M609.0 100.2l-0.0 2.8l0.2 3.2l-0.0 3.6l0.4 4.0l0.1 4.4l-0.3 4.7l1.2 4.9l-0.3 5.2l0.9 5.4l0.4 5.5l0.7 5.7l0.2 5.8l0.1 5.8l-0.0 5.9l0.5 5.8l0.6 5.7l-0.2 5.7l0.3 5.5l0.6 5.3l0.0 5.1l0.7 5.0l-0.3 5.0l0.0 5.0l0.8 5.0l0.1 5.0l-0.2 5.0l0.5 5.0l0.5 5.0l0.6 5.0l-0.2 5.0l0.0 5.0l-0.2 5.0l0.4 5.0l-0.1 5.0l0.2 5.0l0.2 5.0l-0.1 5.0l0.9 5.0l0.7 5.0l-0.8 5.0l-0.2 5.0l0.8 5.0l0.3 5.0l-0.6 5.0l-0.5 5.0l-0.5 5.0l0.2 5.0l0.5 5.0l-0.6 5.0l0.1 5.0l-0.0 5.0l0.0 5.0l-0.3 5.0l-0.7 5.0l0.2 5.0l-0.7 5.0l0.0 5.0l0.3 5.0l-0.5 5.0l0.5 5.0l0.2 5.0l0.2 5.1l0.5 5.1l0.3 5.1l-0.5 5.2l0.6 5.1l0.2 5.1l0.3 5.1l-0.2 5.1l0.9 5.1l-0.5 5.1l0.4 5.0l0.6 5.0l0.4 5.0l0.3 4.9l0.2 4.9l0.5 4.8l0.2 4.8l-0.2 4.7l-0.0 4.6l0.2 5.5l0.2 5.7l-0.2 5.8l0.1 5.8l-0.4 5.8l-0.8 5.8l0.1 5.8l-0.4 5.6l-0.4 5.5l-0.3 5.3l0.3 5.1l0.2 4.8l0.1 4.5l-0.2 4.1l0.0 3.7l-0.5 3.3l0.2 2.8" stroke="#fcc890" stroke-width="1.5" opacity="0.11" transform="translate(2 0.6)"/><path d="M609.0 100.2l-0.0 2.8l0.2 3.2l-0.0 3.6l0.4 4.0l0.1 4.4l-0.3 4.7l1.2 4.9l-0.3 5.2l0.9 5.4l0.4 5.5l0.7 5.7l0.2 5.8l0.1 5.8l-0.0 5.9l0.5 5.8l0.6 5.7l-0.2 5.7l0.3 5.5l0.6 5.3l0.0 5.1l0.7 5.0l-0.3 5.0l0.0 5.0l0.8 5.0l0.1 5.0l-0.2 5.0l0.5 5.0l0.5 5.0l0.6 5.0l-0.2 5.0l0.0 5.0l-0.2 5.0l0.4 5.0l-0.1 5.0l0.2 5.0l0.2 5.0l-0.1 5.0l0.9 5.0l0.7 5.0l-0.8 5.0l-0.2 5.0l0.8 5.0l0.3 5.0l-0.6 5.0l-0.5 5.0l-0.5 5.0l0.2 5.0l0.5 5.0l-0.6 5.0l0.1 5.0l-0.0 5.0l0.0 5.0l-0.3 5.0l-0.7 5.0l0.2 5.0l-0.7 5.0l0.0 5.0l0.3 5.0l-0.5 5.0l0.5 5.0l0.2 5.0l0.2 5.1l0.5 5.1l0.3 5.1l-0.5 5.2l0.6 5.1l0.2 5.1l0.3 5.1l-0.2 5.1l0.9 5.1l-0.5 5.1l0.4 5.0l0.6 5.0l0.4 5.0l0.3 4.9l0.2 4.9l0.5 4.8l0.2 4.8l-0.2 4.7l-0.0 4.6l0.2 5.5l0.2 5.7l-0.2 5.8l0.1 5.8l-0.4 5.8l-0.8 5.8l0.1 5.8l-0.4 5.6l-0.4 5.5l-0.3 5.3l0.3 5.1l0.2 4.8l0.1 4.5l-0.2 4.1l0.0 3.7l-0.5 3.3l0.2 2.8" stroke="#98521e" stroke-width="1.4" opacity="0.18"/>
</g>
<g clip-path="url(#cB2)">
<path d="M623.1 712.2l0.5 -3.2l1.3 -3.8l2.1 -4.2l1.3 -5.1l1.6 -5.5l2.7 -5.4l2.5 -5.7l2.0 -5.9l2.4 -5.7l1.9 -5.7l2.1 -5.3l1.7 -4.9l1.8 -5.0l1.9 -5.1l2.4 -5.0l1.7 -5.2l1.7 -5.3l1.9 -5.1l2.3 -4.9l2.9 -4.3l2.9 -4.1l2.9 -3.9l3.1 -3.4l3.9 -3.9l3.8 -4.2l4.3 -3.8l4.5 -3.6l4.4 -3.7l5.2 -2.0l4.7 -2.7l5.0 -1.5l4.8 -1.0l4.7 -0.4l4.6 1.0l4.8 0.7l5.0 1.4l5.0 1.9l4.7 3.0l4.8 3.0l4.4 3.7l4.7 3.3l3.9 4.1l3.8 4.1l3.0 3.5l2.7 4.0l2.1 4.5l2.9 4.3l1.5 5.1l2.8 4.7l1.3 5.4l1.6 5.3l2.1 5.1l2.6 4.8l2.0 4.9l2.5 4.6l2.4 4.7l2.3 5.1l1.9 5.5l2.1 5.5l1.9 5.5l2.2 5.3l2.6 4.9l1.5 5.0l2.5 4.1l2.0 3.8l1.1 3.5l1.0 2.7" stroke="#fcc890" stroke-width="2.6" opacity="0.43" transform="translate(2 0.6)"/><path d="M623.1 712.2l0.5 -3.2l1.3 -3.8l2.1 -4.2l1.3 -5.1l1.6 -5.5l2.7 -5.4l2.5 -5.7l2.0 -5.9l2.4 -5.7l1.9 -5.7l2.1 -5.3l1.7 -4.9l1.8 -5.0l1.9 -5.1l2.4 -5.0l1.7 -5.2l1.7 -5.3l1.9 -5.1l2.3 -4.9l2.9 -4.3l2.9 -4.1l2.9 -3.9l3.1 -3.4l3.9 -3.9l3.8 -4.2l4.3 -3.8l4.5 -3.6l4.4 -3.7l5.2 -2.0l4.7 -2.7l5.0 -1.5l4.8 -1.0l4.7 -0.4l4.6 1.0l4.8 0.7l5.0 1.4l5.0 1.9l4.7 3.0l4.8 3.0l4.4 3.7l4.7 3.3l3.9 4.1l3.8 4.1l3.0 3.5l2.7 4.0l2.1 4.5l2.9 4.3l1.5 5.1l2.8 4.7l1.3 5.4l1.6 5.3l2.1 5.1l2.6 4.8l2.0 4.9l2.5 4.6l2.4 4.7l2.3 5.1l1.9 5.5l2.1 5.5l1.9 5.5l2.2 5.3l2.6 4.9l1.5 5.0l2.5 4.1l2.0 3.8l1.1 3.5l1.0 2.7" stroke="#98521e" stroke-width="2.4" opacity="0.72"/>
</g>
<g clip-path="url(#cB2)">
<path d="M636.9 712.0l1.7 -2.8l1.2 -4.0l1.8 -4.6l1.6 -5.3l2.1 -5.5l2.6 -5.6l1.9 -6.0l2.2 -5.8l2.8 -5.3l2.1 -5.2l2.7 -4.7l1.7 -5.3l2.3 -5.1l2.1 -5.1l1.6 -5.3l1.7 -5.1l2.3 -4.7l2.4 -4.5l2.5 -4.2l2.5 -3.9l3.9 -4.3l4.2 -4.2l4.6 -3.7l4.5 -3.7l4.9 -2.9l5.3 -1.4l4.8 -2.0l4.9 -0.4l4.7 1.1l4.8 1.7l4.8 2.3l5.1 2.3l4.7 3.3l4.8 3.5l4.2 4.1l4.0 4.2l3.0 3.6l2.5 4.2l2.6 4.4l2.5 4.7l1.8 5.1l1.9 5.2l2.1 5.2l2.3 5.1l2.1 5.1l1.0 5.4l2.0 5.2l2.0 5.6l1.9 5.9l2.2 5.8l2.7 5.5l2.1 5.5l1.4 5.3l1.4 4.7l1.8 3.7l1.3 2.9" stroke="#fcc890" stroke-width="2.6" opacity="0.39" transform="translate(2 0.6)"/><path d="M636.9 712.0l1.7 -2.8l1.2 -4.0l1.8 -4.6l1.6 -5.3l2.1 -5.5l2.6 -5.6l1.9 -6.0l2.2 -5.8l2.8 -5.3l2.1 -5.2l2.7 -4.7l1.7 -5.3l2.3 -5.1l2.1 -5.1l1.6 -5.3l1.7 -5.1l2.3 -4.7l2.4 -4.5l2.5 -4.2l2.5 -3.9l3.9 -4.3l4.2 -4.2l4.6 -3.7l4.5 -3.7l4.9 -2.9l5.3 -1.4l4.8 -2.0l4.9 -0.4l4.7 1.1l4.8 1.7l4.8 2.3l5.1 2.3l4.7 3.3l4.8 3.5l4.2 4.1l4.0 4.2l3.0 3.6l2.5 4.2l2.6 4.4l2.5 4.7l1.8 5.1l1.9 5.2l2.1 5.2l2.3 5.1l2.1 5.1l1.0 5.4l2.0 5.2l2.0 5.6l1.9 5.9l2.2 5.8l2.7 5.5l2.1 5.5l1.4 5.3l1.4 4.7l1.8 3.7l1.3 2.9" stroke="#98521e" stroke-width="2.4" opacity="0.65"/>
</g>
<g clip-path="url(#cB2)">
<path d="M650.0 711.8l1.3 -3.0l1.3 -4.1l2.5 -4.6l2.0 -5.4l2.8 -5.5l2.7 -5.7l2.4 -5.8l1.3 -5.9l2.3 -5.0l1.9 -5.5l2.0 -5.5l2.2 -5.4l1.7 -5.5l2.1 -5.2l2.5 -4.7l1.9 -4.8l2.5 -4.2l3.6 -4.2l4.3 -3.6l4.7 -2.9l4.6 -2.6l4.3 -2.7l4.5 -1.4l4.3 -0.8l4.4 0.7l4.7 0.9l4.3 2.8l4.8 2.4l3.9 4.0l4.0 3.8l3.3 4.4l3.3 3.5l2.5 4.5l2.6 4.7l1.4 5.5l1.6 5.5l2.3 5.4l1.9 5.5l2.4 5.3l2.3 5.0l2.3 5.5l2.5 5.7l1.7 6.1l1.9 5.8l2.4 5.3l1.8 4.8l1.5 4.1l1.3 3.0" stroke="#fcc890" stroke-width="2.6" opacity="0.47" transform="translate(2 0.6)"/><path d="M650.0 711.8l1.3 -3.0l1.3 -4.1l2.5 -4.6l2.0 -5.4l2.8 -5.5l2.7 -5.7l2.4 -5.8l1.3 -5.9l2.3 -5.0l1.9 -5.5l2.0 -5.5l2.2 -5.4l1.7 -5.5l2.1 -5.2l2.5 -4.7l1.9 -4.8l2.5 -4.2l3.6 -4.2l4.3 -3.6l4.7 -2.9l4.6 -2.6l4.3 -2.7l4.5 -1.4l4.3 -0.8l4.4 0.7l4.7 0.9l4.3 2.8l4.8 2.4l3.9 4.0l4.0 3.8l3.3 4.4l3.3 3.5l2.5 4.5l2.6 4.7l1.4 5.5l1.6 5.5l2.3 5.4l1.9 5.5l2.4 5.3l2.3 5.0l2.3 5.5l2.5 5.7l1.7 6.1l1.9 5.8l2.4 5.3l1.8 4.8l1.5 4.1l1.3 3.0" stroke="#98521e" stroke-width="2.4" opacity="0.78"/>
</g>
<g clip-path="url(#cB2)">
<path d="M666.6 712.1l0.4 -3.3l1.2 -4.3l1.8 -5.0l1.1 -5.8l2.1 -5.8l2.1 -5.8l1.7 -5.6l0.8 -5.3l1.4 -5.5l1.8 -5.3l2.5 -5.0l1.5 -5.1l1.8 -4.8l2.0 -4.5l3.0 -3.6l4.2 -4.7l5.0 -3.9l4.8 -3.7l5.3 -1.8l4.9 -0.8l4.9 0.9l5.4 1.6l5.2 3.3l4.7 4.3l4.2 4.7l2.7 3.8l1.8 4.5l1.9 4.7l2.2 4.9l1.8 5.2l1.3 5.5l2.0 5.3l2.0 4.9l1.2 5.8l2.2 5.8l1.4 6.0l1.7 5.7l1.7 5.1l0.6 4.5l0.5 3.3" stroke="#fcc890" stroke-width="2.6" opacity="0.35" transform="translate(2 0.6)"/><path d="M666.6 712.1l0.4 -3.3l1.2 -4.3l1.8 -5.0l1.1 -5.8l2.1 -5.8l2.1 -5.8l1.7 -5.6l0.8 -5.3l1.4 -5.5l1.8 -5.3l2.5 -5.0l1.5 -5.1l1.8 -4.8l2.0 -4.5l3.0 -3.6l4.2 -4.7l5.0 -3.9l4.8 -3.7l5.3 -1.8l4.9 -0.8l4.9 0.9l5.4 1.6l5.2 3.3l4.7 4.3l4.2 4.7l2.7 3.8l1.8 4.5l1.9 4.7l2.2 4.9l1.8 5.2l1.3 5.5l2.0 5.3l2.0 4.9l1.2 5.8l2.2 5.8l1.4 6.0l1.7 5.7l1.7 5.1l0.6 4.5l0.5 3.3" stroke="#98521e" stroke-width="2.4" opacity="0.59"/>
</g>
<g clip-path="url(#cB2)">
<path d="M672.9 712.0l0.7 -3.6l1.3 -4.9l1.3 -5.9l2.0 -6.2l1.2 -6.6l2.1 -6.0l1.7 -5.4l1.5 -5.8l1.4 -5.6l1.7 -5.3l2.5 -4.7l1.9 -4.7l2.7 -3.9l5.0 -4.8l4.8 -4.9l5.5 -3.4l5.7 -0.3l5.4 1.2l5.8 2.6l5.0 4.7l4.6 5.2l2.9 3.7l1.8 4.7l1.9 4.9l1.7 5.3l2.1 5.4l1.7 5.7l1.5 4.7l1.1 5.4l1.5 5.6l1.9 5.5l1.6 5.4l1.5 4.9l1.5 4.0l1.3 2.9" stroke="#fcc890" stroke-width="2.6" opacity="0.23" transform="translate(2 0.6)"/><path d="M672.9 712.0l0.7 -3.6l1.3 -4.9l1.3 -5.9l2.0 -6.2l1.2 -6.6l2.1 -6.0l1.7 -5.4l1.5 -5.8l1.4 -5.6l1.7 -5.3l2.5 -4.7l1.9 -4.7l2.7 -3.9l5.0 -4.8l4.8 -4.9l5.5 -3.4l5.7 -0.3l5.4 1.2l5.8 2.6l5.0 4.7l4.6 5.2l2.9 3.7l1.8 4.7l1.9 4.9l1.7 5.3l2.1 5.4l1.7 5.7l1.5 4.7l1.1 5.4l1.5 5.6l1.9 5.5l1.6 5.4l1.5 4.9l1.5 4.0l1.3 2.9" stroke="#98521e" stroke-width="2.4" opacity="0.39"/>
</g>
<g clip-path="url(#cB2)">
<path d="M677.2 711.9l1.0 -3.3l1.1 -4.7l2.5 -5.2l1.4 -6.1l1.7 -6.0l2.7 -5.3l1.5 -4.9l1.7 -6.0l1.4 -5.6l2.6 -4.8l2.4 -4.3l1.7 -4.4l4.0 -4.1l4.2 -3.7l4.4 -2.9l4.6 -0.6l4.5 0.8l4.8 2.2l3.9 4.2l4.1 4.1l2.4 4.0l2.2 4.5l2.2 5.0l1.8 5.5l1.7 5.9l1.1 4.9l1.6 5.5l1.5 5.9l0.7 6.0l0.8 5.5l1.2 4.5l0.5 3.4" stroke="#fcc890" stroke-width="2.6" opacity="0.43" transform="translate(2 0.6)"/><path d="M677.2 711.9l1.0 -3.3l1.1 -4.7l2.5 -5.2l1.4 -6.1l1.7 -6.0l2.7 -5.3l1.5 -4.9l1.7 -6.0l1.4 -5.6l2.6 -4.8l2.4 -4.3l1.7 -4.4l4.0 -4.1l4.2 -3.7l4.4 -2.9l4.6 -0.6l4.5 0.8l4.8 2.2l3.9 4.2l4.1 4.1l2.4 4.0l2.2 4.5l2.2 5.0l1.8 5.5l1.7 5.9l1.1 4.9l1.6 5.5l1.5 5.9l0.7 6.0l0.8 5.5l1.2 4.5l0.5 3.4" stroke="#98521e" stroke-width="2.4" opacity="0.72"/>
</g>
<g clip-path="url(#cB2)">
<path d="M689.2 711.9l0.4 -3.7l1.6 -5.0l0.8 -6.1l1.0 -6.3l1.2 -6.0l1.2 -5.0l2.1 -5.8l1.9 -5.0l1.8 -4.4l2.7 -3.4l3.9 -4.1l4.1 -3.2l4.1 -1.8l4.5 1.1l4.5 3.1l3.3 4.8l2.6 3.5l1.1 4.6l2.1 4.9l2.2 5.9l1.3 5.1l2.7 5.7l1.8 6.4l1.6 6.2l1.4 5.3l2.1 3.3" stroke="#fcc890" stroke-width="2.6" opacity="0.35" transform="translate(2 0.6)"/><path d="M689.2 711.9l0.4 -3.7l1.6 -5.0l0.8 -6.1l1.0 -6.3l1.2 -6.0l1.2 -5.0l2.1 -5.8l1.9 -5.0l1.8 -4.4l2.7 -3.4l3.9 -4.1l4.1 -3.2l4.1 -1.8l4.5 1.1l4.5 3.1l3.3 4.8l2.6 3.5l1.1 4.6l2.1 4.9l2.2 5.9l1.3 5.1l2.7 5.7l1.8 6.4l1.6 6.2l1.4 5.3l2.1 3.3" stroke="#98521e" stroke-width="2.4" opacity="0.59"/>
</g>
<g clip-path="url(#cB2)">
<path d="M693.7 712.2l0.9 -3.3l0.9 -4.9l1.2 -5.7l1.4 -5.8l1.6 -5.3l1.5 -4.3l2.1 -6.1l1.0 -4.8l2.4 -3.5l4.7 -4.2l4.5 -1.6l4.8 1.2l4.8 4.3l2.2 3.7l1.2 4.7l1.8 6.2l0.9 4.5l1.8 5.3l1.4 5.9l2.0 5.5l2.2 4.5l0.7 3.4" stroke="#fcc890" stroke-width="2.6" opacity="0.23" transform="translate(2 0.6)"/><path d="M693.7 712.2l0.9 -3.3l0.9 -4.9l1.2 -5.7l1.4 -5.8l1.6 -5.3l1.5 -4.3l2.1 -6.1l1.0 -4.8l2.4 -3.5l4.7 -4.2l4.5 -1.6l4.8 1.2l4.8 4.3l2.2 3.7l1.2 4.7l1.8 6.2l0.9 4.5l1.8 5.3l1.4 5.9l2.0 5.5l2.2 4.5l0.7 3.4" stroke="#98521e" stroke-width="2.4" opacity="0.39"/>
</g>
<g clip-path="url(#cB2)">
<path d="M674.6 576.1l-0.9 3.3l-1.5 4.4l-2.3 5.2l-2.2 5.9l-3.1 6.1l-1.6 4.2l-1.4 4.6l-1.8 4.7l-2.4 4.8l-1.4 5.3l-2.2 5.2l-1.0 5.7l-2.3 5.3l-1.4 4.7l-1.3 5.3l-1.5 5.6l-1.0 5.9l-1.7 5.7l-1.5 5.6l-1.2 5.2l-0.2 4.9l-1.3 3.8l-0.2 3.1" stroke="#fcc890" stroke-width="1.5" opacity="0.16" transform="translate(2 0.6)"/><path d="M674.6 576.1l-0.9 3.3l-1.5 4.4l-2.3 5.2l-2.2 5.9l-3.1 6.1l-1.6 4.2l-1.4 4.6l-1.8 4.7l-2.4 4.8l-1.4 5.3l-2.2 5.2l-1.0 5.7l-2.3 5.3l-1.4 4.7l-1.3 5.3l-1.5 5.6l-1.0 5.9l-1.7 5.7l-1.5 5.6l-1.2 5.2l-0.2 4.9l-1.3 3.8l-0.2 3.1" stroke="#98521e" stroke-width="1.4" opacity="0.26"/>
<path d="M672.5 575.2l-1.8 2.9l-2.2 4.2l-1.5 5.5l-1.9 6.1l-3.0 6.1l-1.6 4.2l-1.8 4.5l-1.2 5.0l-1.7 5.0l-1.6 5.2l-2.3 5.2l-2.5 5.3l-1.1 5.8l-1.6 4.8l-1.5 5.3l-1.0 5.8l-1.4 5.8l-1.6 5.8l-1.2 5.6l-1.3 5.2l-0.9 4.7l-0.6 4.0l-1.5 2.8" stroke="#fcc890" stroke-width="2.2" opacity="0.35" transform="translate(2 0.6)"/><path d="M672.5 575.2l-1.8 2.9l-2.2 4.2l-1.5 5.5l-1.9 6.1l-3.0 6.1l-1.6 4.2l-1.8 4.5l-1.2 5.0l-1.7 5.0l-1.6 5.2l-2.3 5.2l-2.5 5.3l-1.1 5.8l-1.6 4.8l-1.5 5.3l-1.0 5.8l-1.4 5.8l-1.6 5.8l-1.2 5.6l-1.3 5.2l-0.9 4.7l-0.6 4.0l-1.5 2.8" stroke="#98521e" stroke-width="2.0" opacity="0.59"/>
<path d="M668.9 573.7l-1.1 3.2l-2.3 4.1l-2.2 5.3l-2.1 6.1l-2.5 6.4l-2.0 4.1l-1.0 4.8l-1.9 4.7l-2.0 4.9l-1.6 5.3l-1.9 5.4l-2.1 5.4l-1.5 5.7l-1.0 5.0l-1.6 5.3l-1.0 5.8l-2.0 5.7l-1.5 5.8l-1.0 5.7l-1.8 5.1l-0.4 4.8l-1.4 3.8l-1.0 2.9" stroke="#fcc890" stroke-width="1.5" opacity="0.14" transform="translate(2 0.6)"/><path d="M668.9 573.7l-1.1 3.2l-2.3 4.1l-2.2 5.3l-2.1 6.1l-2.5 6.4l-2.0 4.1l-1.0 4.8l-1.9 4.7l-2.0 4.9l-1.6 5.3l-1.9 5.4l-2.1 5.4l-1.5 5.7l-1.0 5.0l-1.6 5.3l-1.0 5.8l-2.0 5.7l-1.5 5.8l-1.0 5.7l-1.8 5.1l-0.4 4.8l-1.4 3.8l-1.0 2.9" stroke="#98521e" stroke-width="1.4" opacity="0.23"/>
</g>
<g clip-path="url(#cB2)">
<path d="M603.4 599.5l-0.2 3.1l1.1 3.9l0.3 4.7l0.7 5.3l0.6 5.7l1.8 5.7l1.1 5.9l1.0 5.8l0.3 4.9l0.9 5.3l0.5 5.7l0.7 5.8l0.4 5.9l1.3 5.6l0.2 5.3l0.1 4.7l0.3 4.0l0.0 3.1" stroke="#fcc890" stroke-width="1.5" opacity="0.11" transform="translate(2 0.6)"/><path d="M603.4 599.5l-0.2 3.1l1.1 3.9l0.3 4.7l0.7 5.3l0.6 5.7l1.8 5.7l1.1 5.9l1.0 5.8l0.3 4.9l0.9 5.3l0.5 5.7l0.7 5.8l0.4 5.9l1.3 5.6l0.2 5.3l0.1 4.7l0.3 4.0l0.0 3.1" stroke="#98521e" stroke-width="1.4" opacity="0.18"/>
<path d="M600.5 599.9l0.3 3.0l0.7 3.9l0.2 4.8l0.4 5.3l1.2 5.6l0.6 5.9l1.0 5.9l1.0 5.7l1.2 4.7l0.4 5.4l1.2 5.6l0.6 5.9l0.1 5.9l1.0 5.6l0.0 5.3l0.2 4.7l0.7 3.9l1.0 2.9" stroke="#fcc890" stroke-width="2.2" opacity="0.23" transform="translate(2 0.6)"/><path d="M600.5 599.9l0.3 3.0l0.7 3.9l0.2 4.8l0.4 5.3l1.2 5.6l0.6 5.9l1.0 5.9l1.0 5.7l1.2 4.7l0.4 5.4l1.2 5.6l0.6 5.9l0.1 5.9l1.0 5.6l0.0 5.3l0.2 4.7l0.7 3.9l1.0 2.9" stroke="#98521e" stroke-width="2.0" opacity="0.39"/>
<path d="M596.4 600.6l1.1 2.9l0.5 4.0l0.0 4.8l1.1 5.2l0.3 5.7l1.1 5.8l1.6 5.8l0.1 5.8l1.3 4.7l1.0 5.3l-0.1 5.8l0.9 5.8l0.6 5.8l0.2 5.7l0.8 5.2l0.6 4.7l0.4 3.9l0.3 3.0" stroke="#fcc890" stroke-width="1.5" opacity="0.09" transform="translate(2 0.6)"/><path d="M596.4 600.6l1.1 2.9l0.5 4.0l0.0 4.8l1.1 5.2l0.3 5.7l1.1 5.8l1.6 5.8l0.1 5.8l1.3 4.7l1.0 5.3l-0.1 5.8l0.9 5.8l0.6 5.8l0.2 5.7l0.8 5.2l0.6 4.7l0.4 3.9l0.3 3.0" stroke="#98521e" stroke-width="1.4" opacity="0.16"/>
</g>
<g clip-path="url(#cB2)">
<path d="M792.9 584.3l1.0 2.9l0.4 3.9l1.2 4.4l1.4 5.0l1.3 5.4l1.9 5.6l0.7 6.1l1.0 6.1l1.7 5.9l0.8 4.7l0.7 5.2l0.5 5.6l0.3 5.8l1.1 5.8l1.1 5.8l0.3 5.7l1.4 5.3l-0.0 5.1l1.2 4.3l0.0 3.8l0.1 3.0" stroke="#fcc890" stroke-width="1.5" opacity="0.12" transform="translate(2 0.6)"/><path d="M792.9 584.3l1.0 2.9l0.4 3.9l1.2 4.4l1.4 5.0l1.3 5.4l1.9 5.6l0.7 6.1l1.0 6.1l1.7 5.9l0.8 4.7l0.7 5.2l0.5 5.6l0.3 5.8l1.1 5.8l1.1 5.8l0.3 5.7l1.4 5.3l-0.0 5.1l1.2 4.3l0.0 3.8l0.1 3.0" stroke="#98521e" stroke-width="1.4" opacity="0.20"/>
<path d="M790.3 584.9l0.0 3.1l1.5 3.6l1.5 4.3l0.8 5.1l0.8 5.5l1.4 5.7l1.0 6.0l1.7 5.9l0.9 5.9l0.5 4.7l1.1 5.1l0.7 5.5l0.9 5.7l0.3 5.9l0.9 5.8l1.2 5.6l0.8 5.4l0.9 4.9l-0.1 4.5l0.0 3.8l0.6 2.9" stroke="#fcc890" stroke-width="2.2" opacity="0.27" transform="translate(2 0.6)"/><path d="M790.3 584.9l0.0 3.1l1.5 3.6l1.5 4.3l0.8 5.1l0.8 5.5l1.4 5.7l1.0 6.0l1.7 5.9l0.9 5.9l0.5 4.7l1.1 5.1l0.7 5.5l0.9 5.7l0.3 5.9l0.9 5.8l1.2 5.6l0.8 5.4l0.9 4.9l-0.1 4.5l0.0 3.8l0.6 2.9" stroke="#98521e" stroke-width="2.0" opacity="0.45"/>
<path d="M786.8 585.7l0.1 3.1l0.7 3.8l1.1 4.4l1.1 5.0l1.6 5.3l1.3 5.7l1.4 5.8l1.3 5.9l0.7 5.9l0.8 4.6l0.6 5.1l0.7 5.5l1.6 5.6l0.6 5.9l1.2 5.8l0.0 5.8l0.9 5.4l0.6 5.0l1.1 4.4l0.1 3.8l0.8 2.9" stroke="#fcc890" stroke-width="1.5" opacity="0.11" transform="translate(2 0.6)"/><path d="M786.8 585.7l0.1 3.1l0.7 3.8l1.1 4.4l1.1 5.0l1.6 5.3l1.3 5.7l1.4 5.8l1.3 5.9l0.7 5.9l0.8 4.6l0.6 5.1l0.7 5.5l1.6 5.6l0.6 5.9l1.2 5.8l0.0 5.8l0.9 5.4l0.6 5.0l1.1 4.4l0.1 3.8l0.8 2.9" stroke="#98521e" stroke-width="1.4" opacity="0.18"/>
</g>
<g clip-path="url(#cB2)">
<path d="M817.7 584.9l0.2 3.0l-0.2 3.8l0.1 4.5l0.8 5.0l0.2 5.4l0.1 5.7l0.3 5.8l0.4 5.8l0.4 5.7l0.0 5.4l0.7 5.0l-0.0 5.4l1.1 5.6l1.0 5.8l-0.3 5.9l0.3 5.7l0.2 5.4l1.2 4.9l0.4 4.4l-0.3 3.8l0.7 2.9" stroke="#fcc890" stroke-width="1.5" opacity="0.11" transform="translate(2 0.6)"/><path d="M817.7 584.9l0.2 3.0l-0.2 3.8l0.1 4.5l0.8 5.0l0.2 5.4l0.1 5.7l0.3 5.8l0.4 5.8l0.4 5.7l0.0 5.4l0.7 5.0l-0.0 5.4l1.1 5.6l1.0 5.8l-0.3 5.9l0.3 5.7l0.2 5.4l1.2 4.9l0.4 4.4l-0.3 3.8l0.7 2.9" stroke="#98521e" stroke-width="1.4" opacity="0.18"/>
<path d="M815.4 585.0l0.4 2.9l-0.4 3.8l0.4 4.4l-0.2 5.0l0.2 5.4l0.6 5.7l0.3 5.8l0.3 5.8l0.5 5.7l0.6 5.4l-0.4 5.1l1.1 5.4l0.5 5.7l0.0 5.9l0.2 5.8l0.2 5.7l1.1 5.3l0.3 5.0l-0.1 4.5l0.9 3.7l0.5 2.9" stroke="#fcc890" stroke-width="2.2" opacity="0.23" transform="translate(2 0.6)"/><path d="M815.4 585.0l0.4 2.9l-0.4 3.8l0.4 4.4l-0.2 5.0l0.2 5.4l0.6 5.7l0.3 5.8l0.3 5.8l0.5 5.7l0.6 5.4l-0.4 5.1l1.1 5.4l0.5 5.7l0.0 5.9l0.2 5.8l0.2 5.7l1.1 5.3l0.3 5.0l-0.1 4.5l0.9 3.7l0.5 2.9" stroke="#98521e" stroke-width="2.0" opacity="0.39"/>
<path d="M811.6 585.2l0.1 3.0l-0.0 3.8l0.3 4.4l0.9 5.0l0.3 5.4l0.5 5.7l0.5 5.8l0.3 5.8l0.5 5.7l0.2 5.4l-0.2 5.1l0.6 5.4l0.5 5.7l0.7 5.8l-0.4 5.9l0.1 5.7l0.1 5.4l0.8 5.0l1.2 4.4l0.7 3.7l0.1 3.0" stroke="#fcc890" stroke-width="1.5" opacity="0.09" transform="translate(2 0.6)"/><path d="M811.6 585.2l0.1 3.0l-0.0 3.8l0.3 4.4l0.9 5.0l0.3 5.4l0.5 5.7l0.5 5.8l0.3 5.8l0.5 5.7l0.2 5.4l-0.2 5.1l0.6 5.4l0.5 5.7l0.7 5.8l-0.4 5.9l0.1 5.7l0.1 5.4l0.8 5.0l1.2 4.4l0.7 3.7l0.1 3.0" stroke="#98521e" stroke-width="1.4" opacity="0.16"/>
</g>
</g>
<rect x="587" y="107" width="1.5" height="580" fill="#8a4a20" opacity="0.6"/>
<rect x="588.5" y="107" width="1.2" height="580" fill="#ffd0a0" opacity="0.35"/>
<rect x="831" y="107" width="1.3" height="580" fill="#8a4a20" opacity="0.45"/>
<rect x="832.5" y="107" width="1.5" height="580" fill="#ffd8a8" opacity="0.35"/>
<rect x="828" y="107" width="2" height="580" fill="#ffd0a0" opacity="0.25"/>
<rect x="588" y="579" width="244" height="2" fill="#9a5628" opacity="0.7"/>
<rect x="421" y="107" width="580" height="1" fill="#f4d0b0" opacity="0.55"/>
<rect x="421" y="107" width="1" height="580" fill="#f4d0b0" opacity="0.5"/>
<rect x="421" y="686" width="580" height="1" fill="#f4d0b0" opacity="0.55"/>
<rect x="1000" y="107" width="1" height="580" fill="#f4d0b0" opacity="0.5"/>
</svg>
</body></html>
